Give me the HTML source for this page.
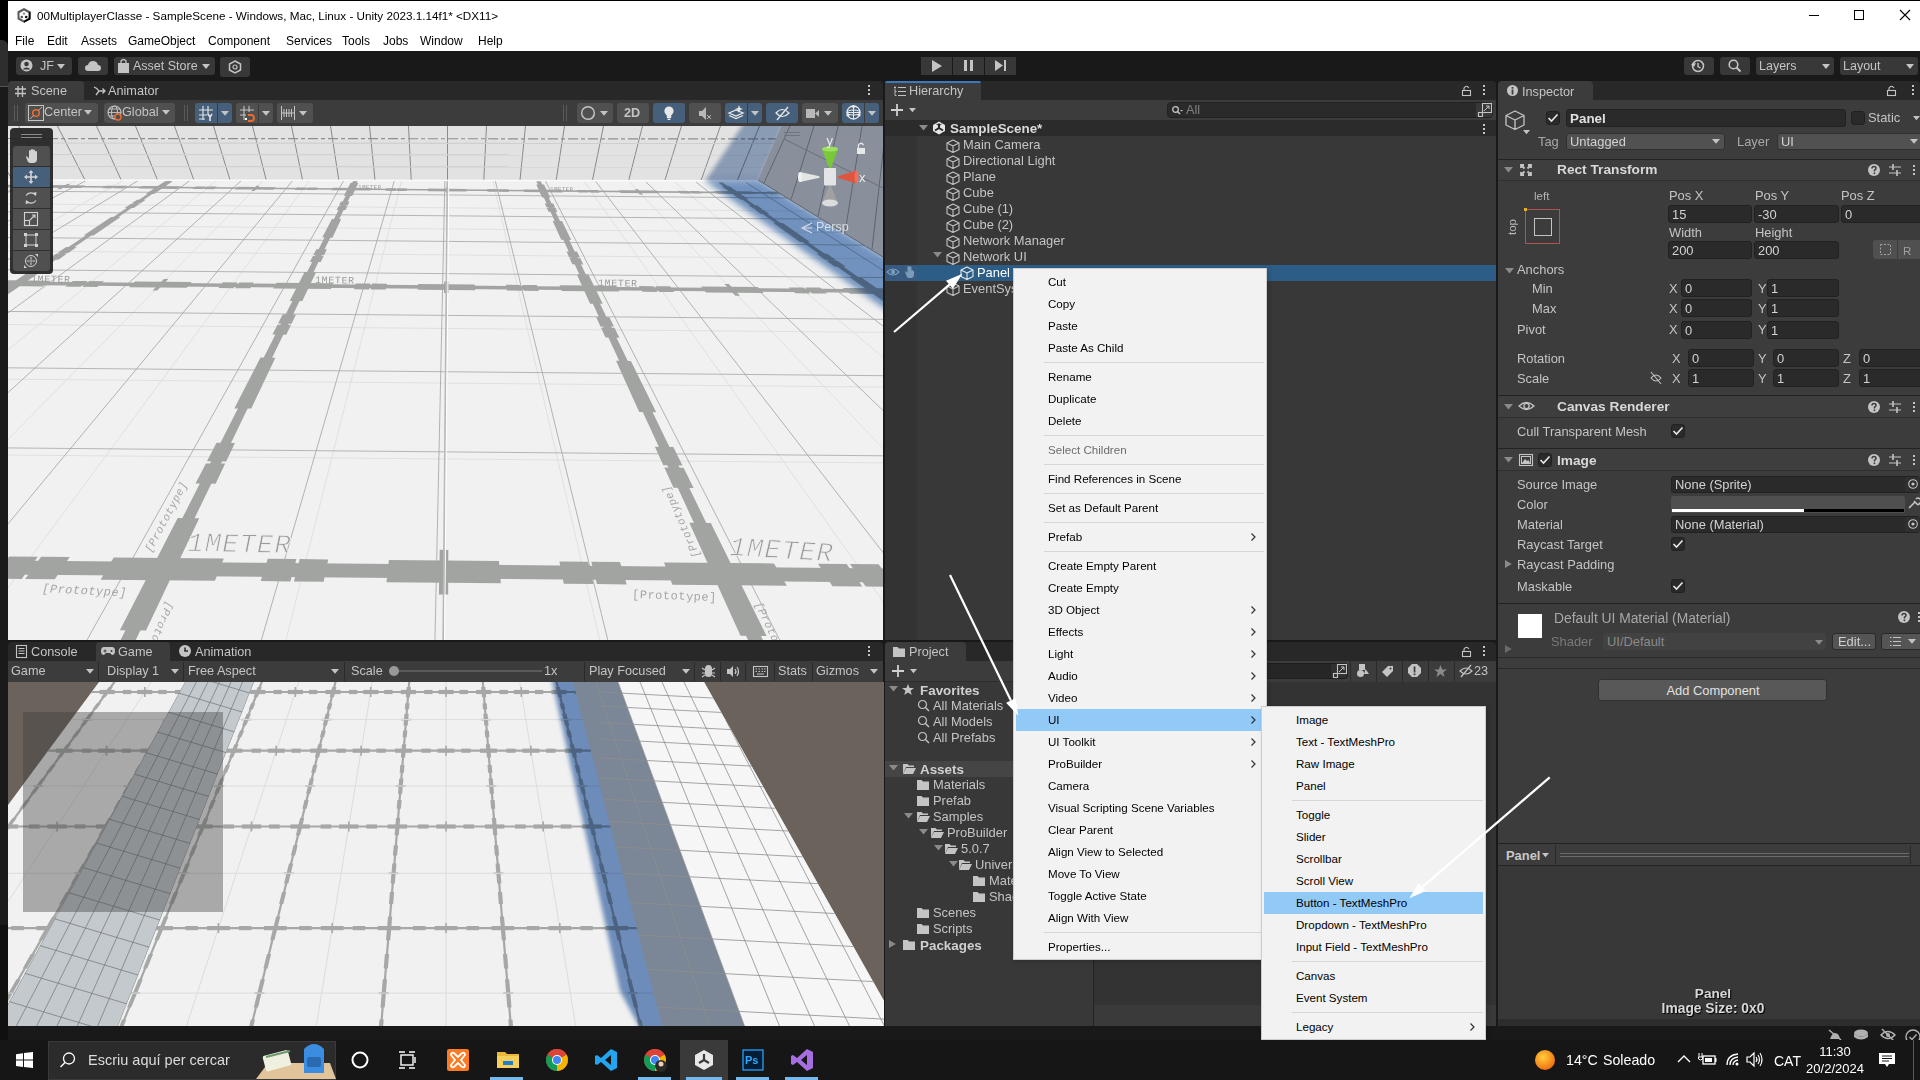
<!DOCTYPE html>
<html><head><meta charset="utf-8">
<style>
*{box-sizing:border-box;margin:0;padding:0}
html,body{width:1920px;height:1080px;overflow:hidden;background:#191919;font-family:"Liberation Sans",sans-serif;position:relative}
.a{position:absolute}
.t{position:absolute;white-space:nowrap;line-height:1}
svg{overflow:visible}
</style></head><body>

<div class="a" style="left:0px;top:0px;width:1920px;height:1040px;background:#191919;"></div>
<div class="a" style="left:0px;top:0px;width:8px;height:1040px;background:#000000;"></div>
<div class="a" style="left:0px;top:40px;width:8px;height:46px;background:#2e2e2e;border-radius:0 6px 0 0"></div>
<div class="a" style="left:0px;top:86px;width:8px;height:1px;background:#555555;"></div>
<div class="a" style="left:0px;top:87px;width:8px;height:838px;background:#1a1a1a;"></div>
<div class="a" style="left:0px;top:925px;width:8px;height:115px;background:#101010;"></div>
<div class="a" style="left:0px;top:0px;width:1920px;height:1px;background:#000;"></div>
<div class="a" style="left:8px;top:1px;width:1912px;height:50px;background:#ffffff;"></div>
<svg class="a" style="left:17px;top:7.5px;" width="14" height="15" viewBox="0 0 14 15"><path d="M7 0 L13.5 3.6 V11.2 L7 14.8 L0.5 11.2 V3.6Z" fill="#5a5a5a"/><path d="M7 14.8 L13.5 11.2 V3.6 L11.5 4.8 V10.2 L7 12.6Z" fill="#000"/><path d="M7 2.6 L11.5 5 V10 L7 12.4 L2.5 10 V5Z" fill="#fafafa"/><circle cx="7" cy="5.6" r="1.2" fill="#888"/><circle cx="4.8" cy="9" r="1.3" fill="#555"/><circle cx="9.2" cy="9" r="1.3" fill="#111"/></svg>
<div class="t" style="left:37px;top:10.10px;font-size:11.7px;color:#000;font-weight:normal;">00MultiplayerClasse - SampleScene - Windows, Mac, Linux - Unity 2023.1.14f1* &lt;DX11&gt;</div>
<div class="a" style="left:1809px;top:15px;width:10px;height:1px;background:#000;"></div>
<div class="a" style="left:1854px;top:10px;width:10px;height:10px;background:transparent;border:1px solid #000"></div>
<svg class="a" style="left:1900px;top:10px;" width="10" height="10" viewBox="0 0 10 10"><path d="M0 0 L10 10 M10 0 L0 10" stroke="#000" stroke-width="1.1"/></svg>
<div class="t" style="left:15px;top:35.34px;font-size:12px;color:#000;font-weight:normal;">File</div>
<div class="t" style="left:47px;top:35.34px;font-size:12px;color:#000;font-weight:normal;">Edit</div>
<div class="t" style="left:81px;top:35.34px;font-size:12px;color:#000;font-weight:normal;">Assets</div>
<div class="t" style="left:128px;top:35.34px;font-size:12px;color:#000;font-weight:normal;">GameObject</div>
<div class="t" style="left:208px;top:35.34px;font-size:12px;color:#000;font-weight:normal;">Component</div>
<div class="t" style="left:286px;top:35.34px;font-size:12px;color:#000;font-weight:normal;">Services</div>
<div class="t" style="left:342px;top:35.34px;font-size:12px;color:#000;font-weight:normal;">Tools</div>
<div class="t" style="left:383px;top:35.34px;font-size:12px;color:#000;font-weight:normal;">Jobs</div>
<div class="t" style="left:420px;top:35.34px;font-size:12px;color:#000;font-weight:normal;">Window</div>
<div class="t" style="left:478px;top:35.34px;font-size:12px;color:#000;font-weight:normal;">Help</div>
<div class="a" style="left:16px;top:57px;width:56px;height:18px;background:#383838;border-radius:3px"></div>
<svg class="a" style="left:20px;top:59px;" width="13" height="13" viewBox="0 0 13 13"><circle cx="6.5" cy="6.5" r="6" fill="#c4c4c4"/><circle cx="6.5" cy="5" r="2.3" fill="#383838"/><path d="M2.5 10.5 Q6.5 6.5 10.5 10.5" fill="#383838"/></svg>
<div class="t" style="left:40px;top:60.42px;font-size:12.5px;color:#c4c4c4;font-weight:normal;">JF</div>
<svg class="a" style="left:57px;top:64px;" width="8" height="5" viewBox="0 0 8 5"><path d="M0 0 L8 0 L4 5Z" fill="#c4c4c4"/></svg>
<div class="a" style="left:78px;top:57px;width:30px;height:18px;background:#383838;border-radius:3px"></div>
<svg class="a" style="left:85px;top:59px;" width="16" height="14" viewBox="0 0 16 14"><path d="M3 12 Q0 12 0 9 Q0 6 3 6 Q4 2 8 2 Q12 2 13 6 Q16 6 16 9 Q16 12 13 12Z" fill="#c4c4c4"/></svg>
<div class="a" style="left:114px;top:57px;width:101px;height:18px;background:#383838;border-radius:3px"></div>
<svg class="a" style="left:118px;top:59px;" width="11" height="14" viewBox="0 0 11 14"><rect x="0" y="4" width="11" height="10" fill="#c4c4c4"/><path d="M3 4 V2 Q5.5 -1 8 2 V4" fill="none" stroke="#c4c4c4" stroke-width="1.3"/></svg>
<div class="t" style="left:133px;top:60.42px;font-size:12.5px;color:#c4c4c4;font-weight:normal;">Asset Store</div>
<svg class="a" style="left:202px;top:64px;" width="8" height="5" viewBox="0 0 8 5"><path d="M0 0 L8 0 L4 5Z" fill="#c4c4c4"/></svg>
<div class="a" style="left:220px;top:57px;width:30px;height:20px;background:#383838;border-radius:3px"></div>
<svg class="a" style="left:228px;top:60px;" width="14" height="14" viewBox="0 0 14 14"><path d="M7 1 L12.5 4 L12.5 10 L7 13 L1.5 10 L1.5 4Z" fill="none" stroke="#c4c4c4" stroke-width="1.5"/><circle cx="7" cy="7" r="2" fill="none" stroke="#c4c4c4" stroke-width="1.2"/></svg>
<div class="a" style="left:921px;top:57px;width:31px;height:18px;background:#383838;"></div>
<div class="a" style="left:953px;top:57px;width:31px;height:18px;background:#383838;"></div>
<div class="a" style="left:985px;top:57px;width:31px;height:18px;background:#383838;"></div>
<svg class="a" style="left:932px;top:60px;" width="10" height="12" viewBox="0 0 10 12"><path d="M0 0 L10 6 L0 12Z" fill="#c4c4c4"/></svg>
<svg class="a" style="left:964px;top:60px;" width="9" height="11" viewBox="0 0 9 11"><rect x="0" y="0" width="3" height="11" fill="#c4c4c4"/><rect x="6" y="0" width="3" height="11" fill="#c4c4c4"/></svg>
<svg class="a" style="left:995px;top:60px;" width="11" height="11" viewBox="0 0 11 11"><path d="M0 0 L8 5.5 L0 11Z" fill="#c4c4c4"/><rect x="9" y="0" width="2" height="11" fill="#c4c4c4"/></svg>
<div class="a" style="left:1684px;top:57px;width:30px;height:18px;background:#383838;border-radius:3px"></div>
<svg class="a" style="left:1691px;top:59px;" width="14" height="14" viewBox="0 0 14 14"><circle cx="7" cy="7" r="5.5" fill="none" stroke="#c4c4c4" stroke-width="1.5"/><path d="M7 4 V7.5 L9.5 9" fill="none" stroke="#c4c4c4" stroke-width="1.4"/><path d="M0 5 L3 8 L5 4Z" fill="#c4c4c4"/></svg>
<div class="a" style="left:1720px;top:57px;width:30px;height:18px;background:#383838;border-radius:3px"></div>
<svg class="a" style="left:1728px;top:59px;" width="13" height="13" viewBox="0 0 13 13"><circle cx="5.5" cy="5.5" r="4.3" fill="none" stroke="#c4c4c4" stroke-width="1.6"/><path d="M8.5 8.5 L12.5 12.5" stroke="#c4c4c4" stroke-width="2"/></svg>
<div class="a" style="left:1756px;top:57px;width:78px;height:18px;background:#383838;border-radius:3px"></div>
<div class="t" style="left:1759px;top:60.42px;font-size:12.5px;color:#c4c4c4;font-weight:normal;">Layers</div>
<svg class="a" style="left:1822px;top:64px;" width="8" height="5" viewBox="0 0 8 5"><path d="M0 0 L8 0 L4 5Z" fill="#c4c4c4"/></svg>
<div class="a" style="left:1840px;top:57px;width:78px;height:18px;background:#383838;border-radius:3px"></div>
<div class="t" style="left:1843px;top:60.42px;font-size:12.5px;color:#c4c4c4;font-weight:normal;">Layout</div>
<svg class="a" style="left:1906px;top:64px;" width="8" height="5" viewBox="0 0 8 5"><path d="M0 0 L8 0 L4 5Z" fill="#c4c4c4"/></svg>
<div class="a" style="left:8px;top:81px;width:875px;height:19px;background:#282828;border-radius:4px 4px 0 0"></div>
<div class="a" style="left:8px;top:81px;width:76px;height:19px;background:#3c3c3c;border-radius:4px 4px 0 0"></div>
<div class="a" style="left:8px;top:100px;width:875px;height:26px;background:#3c3c3c;"></div>
<div class="a" style="left:8px;top:642px;width:875px;height:19px;background:#282828;border-radius:4px 4px 0 0"></div>
<div class="a" style="left:96px;top:642px;width:74px;height:19px;background:#3c3c3c;border-radius:4px 4px 0 0"></div>
<div class="a" style="left:8px;top:661px;width:875px;height:21px;background:#3c3c3c;"></div>
<div class="a" style="left:8px;top:1026px;width:875px;height:14px;background:#191919;"></div>
<div class="a" style="left:885px;top:81px;width:611px;height:19px;background:#282828;border-radius:4px 4px 0 0"></div>
<div class="a" style="left:885px;top:81px;width:96px;height:19px;background:#3c3c3c;border-radius:4px 4px 0 0"></div>
<div class="a" style="left:885px;top:81px;width:96px;height:2px;background:#3a79bb;border-radius:3px 3px 0 0"></div>
<div class="a" style="left:885px;top:100px;width:611px;height:20px;background:#3c3c3c;"></div>
<div class="a" style="left:885px;top:120px;width:611px;height:520px;background:#383838;"></div>
<div class="a" style="left:885px;top:642px;width:611px;height:19px;background:#282828;border-radius:4px 4px 0 0"></div>
<div class="a" style="left:885px;top:642px;width:81px;height:19px;background:#3c3c3c;border-radius:4px 4px 0 0"></div>
<div class="a" style="left:885px;top:661px;width:611px;height:21px;background:#3c3c3c;"></div>
<div class="a" style="left:885px;top:682px;width:611px;height:344px;background:#383838;"></div>
<div class="a" style="left:1498px;top:81px;width:422px;height:19px;background:#282828;border-radius:4px 4px 0 0"></div>
<div class="a" style="left:1498px;top:81px;width:95px;height:19px;background:#3c3c3c;border-radius:4px 4px 0 0"></div>
<div class="a" style="left:1498px;top:100px;width:422px;height:926px;background:#3c3c3c;"></div>
<svg class="a" style="left:8px;top:126px;overflow:hidden" width="875" height="514" viewBox="0 0 875 514"><rect width="875" height="514" fill="#f1f1f1"/><line x1="-2290.3" y1="29.4" x2="-25383.9" y2="1411.2" stroke="#dedede" stroke-width="0.9"/><line x1="-2244.8" y1="29.8" x2="-24953.8" y2="1415.1" stroke="#dedede" stroke-width="0.9"/><line x1="-2199.4" y1="30.2" x2="-24523.7" y2="1418.9" stroke="#dedede" stroke-width="0.9"/><line x1="-2153.9" y1="30.7" x2="-24093.5" y2="1422.8" stroke="#dedede" stroke-width="0.9"/><line x1="-2108.4" y1="31.1" x2="-23663.4" y2="1426.7" stroke="#dedede" stroke-width="0.9"/><line x1="-2062.9" y1="31.5" x2="-23233.2" y2="1430.5" stroke="#dedede" stroke-width="0.9"/><line x1="-2017.4" y1="31.9" x2="-22803.1" y2="1434.4" stroke="#dedede" stroke-width="0.9"/><line x1="-1971.9" y1="32.3" x2="-22372.9" y2="1438.3" stroke="#dedede" stroke-width="0.9"/><line x1="-1926.4" y1="32.7" x2="-21942.8" y2="1442.2" stroke="#dedede" stroke-width="0.9"/><line x1="-1880.9" y1="33.1" x2="-21512.6" y2="1446.0" stroke="#dedede" stroke-width="0.9"/><line x1="-1835.4" y1="33.5" x2="-21082.5" y2="1449.9" stroke="#dedede" stroke-width="0.9"/><line x1="-1789.9" y1="33.9" x2="-20652.3" y2="1453.8" stroke="#dedede" stroke-width="0.9"/><line x1="-1744.4" y1="34.3" x2="-20222.2" y2="1457.6" stroke="#dedede" stroke-width="0.9"/><line x1="-1698.9" y1="34.7" x2="-19792.0" y2="1461.5" stroke="#dedede" stroke-width="0.9"/><line x1="-1653.4" y1="35.2" x2="-19361.9" y2="1465.4" stroke="#dedede" stroke-width="0.9"/><line x1="-1607.9" y1="35.6" x2="-18931.7" y2="1469.3" stroke="#dedede" stroke-width="0.9"/><line x1="-1562.4" y1="36.0" x2="-18501.6" y2="1473.1" stroke="#dedede" stroke-width="0.9"/><line x1="-1516.9" y1="36.4" x2="-18071.4" y2="1477.0" stroke="#dedede" stroke-width="0.9"/><line x1="-1471.4" y1="36.8" x2="-17641.3" y2="1480.9" stroke="#dedede" stroke-width="0.9"/><line x1="-1426.0" y1="37.2" x2="-17211.1" y2="1484.7" stroke="#dedede" stroke-width="0.9"/><line x1="-1380.5" y1="37.6" x2="-16781.0" y2="1488.6" stroke="#dedede" stroke-width="0.9"/><line x1="-1335.0" y1="38.0" x2="-16350.8" y2="1492.5" stroke="#dedede" stroke-width="0.9"/><line x1="-1289.5" y1="38.4" x2="-15920.7" y2="1496.4" stroke="#dedede" stroke-width="0.9"/><line x1="-1244.0" y1="38.8" x2="-15490.5" y2="1500.2" stroke="#dedede" stroke-width="0.9"/><line x1="-1198.5" y1="39.3" x2="-15060.4" y2="1504.1" stroke="#dedede" stroke-width="0.9"/><line x1="-1153.0" y1="39.7" x2="-14630.2" y2="1508.0" stroke="#dedede" stroke-width="0.9"/><line x1="-1107.5" y1="40.1" x2="-14200.1" y2="1511.8" stroke="#dedede" stroke-width="0.9"/><line x1="-1062.0" y1="40.5" x2="-13769.9" y2="1515.7" stroke="#dedede" stroke-width="0.9"/><line x1="-1016.5" y1="40.9" x2="-13339.8" y2="1519.6" stroke="#dedede" stroke-width="0.9"/><line x1="-971.0" y1="41.3" x2="-12909.6" y2="1523.5" stroke="#dedede" stroke-width="0.9"/><line x1="-925.5" y1="41.7" x2="-12479.5" y2="1527.3" stroke="#dedede" stroke-width="0.9"/><line x1="-880.0" y1="42.1" x2="-12049.3" y2="1531.2" stroke="#dedede" stroke-width="0.9"/><line x1="-834.5" y1="42.5" x2="-11619.2" y2="1535.1" stroke="#dedede" stroke-width="0.9"/><line x1="-789.0" y1="42.9" x2="-11189.0" y2="1538.9" stroke="#dedede" stroke-width="0.9"/><line x1="-743.5" y1="43.3" x2="-10758.9" y2="1542.8" stroke="#dedede" stroke-width="0.9"/><line x1="-698.0" y1="43.8" x2="-10328.7" y2="1546.7" stroke="#dedede" stroke-width="0.9"/><line x1="-652.6" y1="44.2" x2="-9898.6" y2="1550.6" stroke="#dedede" stroke-width="0.9"/><line x1="-607.1" y1="44.6" x2="-9468.4" y2="1554.4" stroke="#dedede" stroke-width="0.9"/><line x1="-561.6" y1="45.0" x2="-9038.3" y2="1558.3" stroke="#dedede" stroke-width="0.9"/><line x1="-516.1" y1="45.4" x2="-8608.1" y2="1562.2" stroke="#dedede" stroke-width="0.9"/><line x1="-470.6" y1="45.8" x2="-8178.0" y2="1566.0" stroke="#dedede" stroke-width="0.9"/><line x1="-425.1" y1="46.2" x2="-7747.8" y2="1569.9" stroke="#dedede" stroke-width="0.9"/><line x1="-379.6" y1="46.6" x2="-7317.7" y2="1573.8" stroke="#dedede" stroke-width="0.9"/><line x1="-334.1" y1="47.0" x2="-6887.5" y2="1577.7" stroke="#dedede" stroke-width="0.9"/><line x1="-288.6" y1="47.4" x2="-6457.4" y2="1581.5" stroke="#dedede" stroke-width="0.9"/><line x1="-243.1" y1="47.9" x2="-6027.2" y2="1585.4" stroke="#dedede" stroke-width="0.9"/><line x1="-197.6" y1="48.3" x2="-5597.1" y2="1589.3" stroke="#dedede" stroke-width="0.9"/><line x1="-152.1" y1="48.7" x2="-5166.9" y2="1593.1" stroke="#dedede" stroke-width="0.9"/><line x1="-106.6" y1="49.1" x2="-4736.8" y2="1597.0" stroke="#dedede" stroke-width="0.9"/><line x1="-61.1" y1="49.5" x2="-4306.6" y2="1600.9" stroke="#dedede" stroke-width="0.9"/><line x1="-15.6" y1="49.9" x2="-3876.5" y2="1604.8" stroke="#dedede" stroke-width="0.9"/><line x1="29.9" y1="50.3" x2="-3446.3" y2="1608.6" stroke="#dedede" stroke-width="0.9"/><line x1="75.4" y1="50.7" x2="-3016.2" y2="1612.5" stroke="#dedede" stroke-width="0.9"/><line x1="120.8" y1="51.1" x2="-2586.0" y2="1616.4" stroke="#dedede" stroke-width="0.9"/><line x1="166.3" y1="51.5" x2="-2155.9" y2="1620.2" stroke="#dedede" stroke-width="0.9"/><line x1="211.8" y1="51.9" x2="-1725.7" y2="1624.1" stroke="#dedede" stroke-width="0.9"/><line x1="257.3" y1="52.4" x2="-1295.6" y2="1628.0" stroke="#dedede" stroke-width="0.9"/><line x1="302.8" y1="52.8" x2="-865.4" y2="1631.9" stroke="#dedede" stroke-width="0.9"/><line x1="348.3" y1="53.2" x2="-435.3" y2="1635.7" stroke="#dedede" stroke-width="0.9"/><line x1="393.8" y1="53.6" x2="-5.1" y2="1639.6" stroke="#dedede" stroke-width="0.9"/><line x1="439.3" y1="54.0" x2="425.0" y2="1643.5" stroke="#dedede" stroke-width="0.9"/><line x1="484.8" y1="54.4" x2="855.2" y2="1647.3" stroke="#dedede" stroke-width="0.9"/><line x1="530.3" y1="54.8" x2="1285.3" y2="1651.2" stroke="#dedede" stroke-width="0.9"/><line x1="575.8" y1="55.2" x2="1715.4" y2="1655.1" stroke="#dedede" stroke-width="0.9"/><line x1="621.3" y1="55.6" x2="2145.6" y2="1659.0" stroke="#dedede" stroke-width="0.9"/><line x1="666.8" y1="56.0" x2="2575.7" y2="1662.8" stroke="#dedede" stroke-width="0.9"/><line x1="712.3" y1="56.4" x2="3005.9" y2="1666.7" stroke="#dedede" stroke-width="0.9"/><line x1="757.8" y1="56.9" x2="3436.0" y2="1670.6" stroke="#dedede" stroke-width="0.9"/><line x1="803.3" y1="57.3" x2="3866.2" y2="1674.4" stroke="#dedede" stroke-width="0.9"/><line x1="848.8" y1="57.7" x2="4296.3" y2="1678.3" stroke="#dedede" stroke-width="0.9"/><line x1="894.2" y1="58.1" x2="4726.5" y2="1682.2" stroke="#dedede" stroke-width="0.9"/><line x1="939.7" y1="58.5" x2="5156.6" y2="1686.1" stroke="#dedede" stroke-width="0.9"/><line x1="985.2" y1="58.9" x2="5586.8" y2="1689.9" stroke="#dedede" stroke-width="0.9"/><line x1="1030.7" y1="59.3" x2="6016.9" y2="1693.8" stroke="#dedede" stroke-width="0.9"/><line x1="1076.2" y1="59.7" x2="6447.1" y2="1697.7" stroke="#dedede" stroke-width="0.9"/><line x1="1121.7" y1="60.1" x2="6877.2" y2="1701.5" stroke="#dedede" stroke-width="0.9"/><line x1="1167.2" y1="60.5" x2="7307.4" y2="1705.4" stroke="#dedede" stroke-width="0.9"/><line x1="1212.7" y1="61.0" x2="7737.5" y2="1709.3" stroke="#dedede" stroke-width="0.9"/><line x1="1258.2" y1="61.4" x2="8167.7" y2="1713.2" stroke="#dedede" stroke-width="0.9"/><line x1="1303.7" y1="61.8" x2="8597.8" y2="1717.0" stroke="#dedede" stroke-width="0.9"/><line x1="1349.2" y1="62.2" x2="9028.0" y2="1720.9" stroke="#dedede" stroke-width="0.9"/><line x1="1394.7" y1="62.6" x2="9458.1" y2="1724.8" stroke="#dedede" stroke-width="0.9"/><line x1="1440.2" y1="63.0" x2="9888.3" y2="1728.6" stroke="#dedede" stroke-width="0.9"/><line x1="1485.7" y1="63.4" x2="10318.4" y2="1732.5" stroke="#dedede" stroke-width="0.9"/><line x1="1531.2" y1="63.8" x2="10748.6" y2="1736.4" stroke="#dedede" stroke-width="0.9"/><line x1="1576.7" y1="64.2" x2="11178.7" y2="1740.3" stroke="#dedede" stroke-width="0.9"/><line x1="1622.2" y1="64.6" x2="11608.9" y2="1744.1" stroke="#dedede" stroke-width="0.9"/><line x1="1667.7" y1="65.0" x2="12039.0" y2="1748.0" stroke="#dedede" stroke-width="0.9"/><line x1="1713.1" y1="65.5" x2="12469.2" y2="1751.9" stroke="#dedede" stroke-width="0.9"/><line x1="1758.6" y1="65.9" x2="12899.3" y2="1755.7" stroke="#dedede" stroke-width="0.9"/><line x1="1804.1" y1="66.3" x2="13329.5" y2="1759.6" stroke="#dedede" stroke-width="0.9"/><line x1="1849.6" y1="66.7" x2="13759.6" y2="1763.5" stroke="#dedede" stroke-width="0.9"/><line x1="1895.1" y1="67.1" x2="14189.8" y2="1767.4" stroke="#dedede" stroke-width="0.9"/><line x1="1940.6" y1="67.5" x2="14619.9" y2="1771.2" stroke="#dedede" stroke-width="0.9"/><line x1="1986.1" y1="67.9" x2="15050.1" y2="1775.1" stroke="#dedede" stroke-width="0.9"/><line x1="2031.6" y1="68.3" x2="15480.2" y2="1779.0" stroke="#dedede" stroke-width="0.9"/><line x1="2077.1" y1="68.7" x2="15910.4" y2="1782.8" stroke="#dedede" stroke-width="0.9"/><line x1="2122.6" y1="69.1" x2="16340.5" y2="1786.7" stroke="#dedede" stroke-width="0.9"/><line x1="2168.1" y1="69.6" x2="16770.7" y2="1790.6" stroke="#dedede" stroke-width="0.9"/><line x1="2213.6" y1="70.0" x2="17200.8" y2="1794.5" stroke="#dedede" stroke-width="0.9"/><line x1="2259.1" y1="70.4" x2="17631.0" y2="1798.3" stroke="#dedede" stroke-width="0.9"/><line x1="2304.6" y1="70.8" x2="18061.1" y2="1802.2" stroke="#dedede" stroke-width="0.9"/><line x1="2350.1" y1="71.2" x2="18491.3" y2="1806.1" stroke="#dedede" stroke-width="0.9"/><line x1="2395.6" y1="71.6" x2="18921.4" y2="1809.9" stroke="#dedede" stroke-width="0.9"/><line x1="2441.1" y1="72.0" x2="19351.6" y2="1813.8" stroke="#dedede" stroke-width="0.9"/><line x1="2486.5" y1="72.4" x2="19781.7" y2="1817.7" stroke="#dedede" stroke-width="0.9"/><line x1="2532.0" y1="72.8" x2="20211.9" y2="1821.6" stroke="#dedede" stroke-width="0.9"/><line x1="2577.5" y1="73.2" x2="20642.0" y2="1825.4" stroke="#dedede" stroke-width="0.9"/><line x1="2623.0" y1="73.6" x2="21072.2" y2="1829.3" stroke="#dedede" stroke-width="0.9"/><line x1="2668.5" y1="74.1" x2="21502.3" y2="1833.2" stroke="#dedede" stroke-width="0.9"/><line x1="2714.0" y1="74.5" x2="21932.5" y2="1837.0" stroke="#dedede" stroke-width="0.9"/><line x1="2759.5" y1="74.9" x2="22362.6" y2="1840.9" stroke="#dedede" stroke-width="0.9"/><line x1="2805.0" y1="75.3" x2="22792.8" y2="1844.8" stroke="#dedede" stroke-width="0.9"/><line x1="2850.5" y1="75.7" x2="23222.9" y2="1848.7" stroke="#dedede" stroke-width="0.9"/><line x1="2896.0" y1="76.1" x2="23653.1" y2="1852.5" stroke="#dedede" stroke-width="0.9"/><line x1="2941.5" y1="76.5" x2="24083.2" y2="1856.4" stroke="#dedede" stroke-width="0.9"/><line x1="2987.0" y1="76.9" x2="24513.4" y2="1860.3" stroke="#dedede" stroke-width="0.9"/><line x1="3032.5" y1="77.3" x2="24943.5" y2="1864.1" stroke="#dedede" stroke-width="0.9"/><line x1="3078.0" y1="77.7" x2="25373.7" y2="1868.0" stroke="#dedede" stroke-width="0.9"/><line x1="3123.5" y1="78.2" x2="25803.8" y2="1871.9" stroke="#dedede" stroke-width="0.9"/><line x1="3169.0" y1="78.6" x2="26234.0" y2="1875.8" stroke="#dedede" stroke-width="0.9"/><line x1="-42831.6" y1="593.9" x2="43693.5" y2="1372.7" stroke="#e0e0e0" stroke-width="1"/><line x1="-29111.7" y1="363.1" x2="29980.0" y2="895.0" stroke="#e0e0e0" stroke-width="1"/><line x1="-21997.4" y1="243.5" x2="22869.0" y2="647.3" stroke="#e0e0e0" stroke-width="1"/><line x1="-17643.8" y1="170.2" x2="18517.4" y2="495.7" stroke="#e0e0e0" stroke-width="1"/><line x1="-14705.1" y1="120.8" x2="15580.1" y2="393.4" stroke="#e0e0e0" stroke-width="1"/><line x1="-12588.0" y1="85.2" x2="13463.9" y2="319.7" stroke="#e0e0e0" stroke-width="1"/><line x1="-10990.1" y1="58.3" x2="11866.8" y2="264.0" stroke="#e0e0e0" stroke-width="1"/><line x1="-9741.3" y1="37.3" x2="10618.6" y2="220.5" stroke="#e0e0e0" stroke-width="1"/><line x1="-8738.6" y1="20.4" x2="9616.3" y2="185.6" stroke="#e0e0e0" stroke-width="1"/><line x1="-7915.6" y1="6.6" x2="8793.7" y2="157.0" stroke="#e0e0e0" stroke-width="1"/><line x1="-7228.0" y1="-5.0" x2="8106.4" y2="133.0" stroke="#e0e0e0" stroke-width="1"/><line x1="-2325.5" y1="29.1" x2="-25716.0" y2="1408.2" stroke="#9c9c9c" stroke-width="0.75"/><line x1="-2275.2" y1="29.6" x2="-25241.1" y2="1412.5" stroke="#9c9c9c" stroke-width="0.75"/><line x1="-2225.0" y1="30.0" x2="-24766.3" y2="1416.7" stroke="#9c9c9c" stroke-width="0.75"/><line x1="-2174.8" y1="30.5" x2="-24291.4" y2="1421.0" stroke="#9c9c9c" stroke-width="0.75"/><line x1="-2124.6" y1="30.9" x2="-23816.5" y2="1425.3" stroke="#9c9c9c" stroke-width="0.75"/><line x1="-2074.3" y1="31.4" x2="-23341.6" y2="1429.6" stroke="#9c9c9c" stroke-width="0.75"/><line x1="-2024.1" y1="31.8" x2="-22866.7" y2="1433.8" stroke="#9c9c9c" stroke-width="0.75"/><line x1="-1973.9" y1="32.3" x2="-22391.8" y2="1438.1" stroke="#9c9c9c" stroke-width="0.75"/><line x1="-1923.7" y1="32.7" x2="-21916.9" y2="1442.4" stroke="#9c9c9c" stroke-width="0.75"/><line x1="-1873.4" y1="33.2" x2="-21442.1" y2="1446.7" stroke="#9c9c9c" stroke-width="0.75"/><line x1="-1823.2" y1="33.6" x2="-20967.2" y2="1450.9" stroke="#9c9c9c" stroke-width="0.75"/><line x1="-1773.0" y1="34.1" x2="-20492.3" y2="1455.2" stroke="#9c9c9c" stroke-width="0.75"/><line x1="-1722.8" y1="34.5" x2="-20017.4" y2="1459.5" stroke="#9c9c9c" stroke-width="0.75"/><line x1="-1672.5" y1="35.0" x2="-19542.5" y2="1463.8" stroke="#9c9c9c" stroke-width="0.75"/><line x1="-1622.3" y1="35.4" x2="-19067.6" y2="1468.0" stroke="#9c9c9c" stroke-width="0.75"/><line x1="-1572.1" y1="35.9" x2="-18592.8" y2="1472.3" stroke="#9c9c9c" stroke-width="0.75"/><line x1="-1521.9" y1="36.3" x2="-18117.9" y2="1476.6" stroke="#9c9c9c" stroke-width="0.75"/><line x1="-1471.6" y1="36.8" x2="-17643.0" y2="1480.9" stroke="#9c9c9c" stroke-width="0.75"/><line x1="-1421.4" y1="37.2" x2="-17168.1" y2="1485.1" stroke="#9c9c9c" stroke-width="0.75"/><line x1="-1371.2" y1="37.7" x2="-16693.2" y2="1489.4" stroke="#9c9c9c" stroke-width="0.75"/><line x1="-1321.0" y1="38.1" x2="-16218.3" y2="1493.7" stroke="#9c9c9c" stroke-width="0.75"/><line x1="-1270.7" y1="38.6" x2="-15743.4" y2="1498.0" stroke="#9c9c9c" stroke-width="0.75"/><line x1="-1220.5" y1="39.1" x2="-15268.6" y2="1502.2" stroke="#9c9c9c" stroke-width="0.75"/><line x1="-1170.3" y1="39.5" x2="-14793.7" y2="1506.5" stroke="#9c9c9c" stroke-width="0.75"/><line x1="-1120.0" y1="40.0" x2="-14318.8" y2="1510.8" stroke="#9c9c9c" stroke-width="0.75"/><line x1="-1069.8" y1="40.4" x2="-13843.9" y2="1515.1" stroke="#9c9c9c" stroke-width="0.75"/><line x1="-1019.6" y1="40.9" x2="-13369.0" y2="1519.3" stroke="#9c9c9c" stroke-width="0.75"/><line x1="-969.4" y1="41.3" x2="-12894.1" y2="1523.6" stroke="#9c9c9c" stroke-width="0.75"/><line x1="-919.1" y1="41.8" x2="-12419.3" y2="1527.9" stroke="#9c9c9c" stroke-width="0.75"/><line x1="-868.9" y1="42.2" x2="-11944.4" y2="1532.1" stroke="#9c9c9c" stroke-width="0.75"/><line x1="-818.7" y1="42.7" x2="-11469.5" y2="1536.4" stroke="#9c9c9c" stroke-width="0.75"/><line x1="-768.5" y1="43.1" x2="-10994.6" y2="1540.7" stroke="#9c9c9c" stroke-width="0.75"/><line x1="-718.2" y1="43.6" x2="-10519.7" y2="1545.0" stroke="#9c9c9c" stroke-width="0.75"/><line x1="-668.0" y1="44.0" x2="-10044.8" y2="1549.2" stroke="#9c9c9c" stroke-width="0.75"/><line x1="-617.8" y1="44.5" x2="-9569.9" y2="1553.5" stroke="#9c9c9c" stroke-width="0.75"/><line x1="-567.6" y1="44.9" x2="-9095.1" y2="1557.8" stroke="#9c9c9c" stroke-width="0.75"/><line x1="-517.3" y1="45.4" x2="-8620.2" y2="1562.1" stroke="#9c9c9c" stroke-width="0.75"/><line x1="-467.1" y1="45.8" x2="-8145.3" y2="1566.3" stroke="#9c9c9c" stroke-width="0.75"/><line x1="-416.9" y1="46.3" x2="-7670.4" y2="1570.6" stroke="#9c9c9c" stroke-width="0.75"/><line x1="-366.7" y1="46.7" x2="-7195.5" y2="1574.9" stroke="#9c9c9c" stroke-width="0.75"/><line x1="-316.4" y1="47.2" x2="-6720.6" y2="1579.2" stroke="#9c9c9c" stroke-width="0.75"/><line x1="-266.2" y1="47.6" x2="-6245.8" y2="1583.4" stroke="#9c9c9c" stroke-width="0.75"/><line x1="-216.0" y1="48.1" x2="-5770.9" y2="1587.7" stroke="#9c9c9c" stroke-width="0.75"/><line x1="-165.8" y1="48.5" x2="-5296.0" y2="1592.0" stroke="#9c9c9c" stroke-width="0.75"/><line x1="-115.5" y1="49.0" x2="-4821.1" y2="1596.3" stroke="#9c9c9c" stroke-width="0.75"/><line x1="-65.3" y1="49.5" x2="-4346.2" y2="1600.5" stroke="#9c9c9c" stroke-width="0.75"/><line x1="-15.1" y1="49.9" x2="-3871.3" y2="1604.8" stroke="#9c9c9c" stroke-width="0.75"/><line x1="35.1" y1="50.4" x2="-3396.4" y2="1609.1" stroke="#9c9c9c" stroke-width="0.75"/><line x1="85.4" y1="50.8" x2="-2921.6" y2="1613.4" stroke="#9c9c9c" stroke-width="0.75"/><line x1="135.6" y1="51.3" x2="-2446.7" y2="1617.6" stroke="#9c9c9c" stroke-width="0.75"/><line x1="185.8" y1="51.7" x2="-1971.8" y2="1621.9" stroke="#9c9c9c" stroke-width="0.75"/><line x1="236.0" y1="52.2" x2="-1496.9" y2="1626.2" stroke="#9c9c9c" stroke-width="0.75"/><line x1="286.3" y1="52.6" x2="-1022.0" y2="1630.5" stroke="#9c9c9c" stroke-width="0.75"/><line x1="336.5" y1="53.1" x2="-547.1" y2="1634.7" stroke="#9c9c9c" stroke-width="0.75"/><line x1="386.7" y1="53.5" x2="-72.3" y2="1639.0" stroke="#9c9c9c" stroke-width="0.75"/><line x1="436.9" y1="54.0" x2="402.6" y2="1643.3" stroke="#9c9c9c" stroke-width="0.75"/><line x1="487.2" y1="54.4" x2="877.5" y2="1647.5" stroke="#9c9c9c" stroke-width="0.75"/><line x1="537.4" y1="54.9" x2="1352.4" y2="1651.8" stroke="#9c9c9c" stroke-width="0.75"/><line x1="587.6" y1="55.3" x2="1827.3" y2="1656.1" stroke="#9c9c9c" stroke-width="0.75"/><line x1="637.8" y1="55.8" x2="2302.2" y2="1660.4" stroke="#9c9c9c" stroke-width="0.75"/><line x1="688.1" y1="56.2" x2="2777.1" y2="1664.6" stroke="#9c9c9c" stroke-width="0.75"/><line x1="738.3" y1="56.7" x2="3251.9" y2="1668.9" stroke="#9c9c9c" stroke-width="0.75"/><line x1="788.5" y1="57.1" x2="3726.8" y2="1673.2" stroke="#9c9c9c" stroke-width="0.75"/><line x1="838.7" y1="57.6" x2="4201.7" y2="1677.5" stroke="#9c9c9c" stroke-width="0.75"/><line x1="889.0" y1="58.0" x2="4676.6" y2="1681.7" stroke="#9c9c9c" stroke-width="0.75"/><line x1="939.2" y1="58.5" x2="5151.5" y2="1686.0" stroke="#9c9c9c" stroke-width="0.75"/><line x1="989.4" y1="58.9" x2="5626.4" y2="1690.3" stroke="#9c9c9c" stroke-width="0.75"/><line x1="1039.6" y1="59.4" x2="6101.3" y2="1694.6" stroke="#9c9c9c" stroke-width="0.75"/><line x1="1089.9" y1="59.8" x2="6576.1" y2="1698.8" stroke="#9c9c9c" stroke-width="0.75"/><line x1="1140.1" y1="60.3" x2="7051.0" y2="1703.1" stroke="#9c9c9c" stroke-width="0.75"/><line x1="1190.3" y1="60.8" x2="7525.9" y2="1707.4" stroke="#9c9c9c" stroke-width="0.75"/><line x1="1240.6" y1="61.2" x2="8000.8" y2="1711.7" stroke="#9c9c9c" stroke-width="0.75"/><line x1="1290.8" y1="61.7" x2="8475.7" y2="1715.9" stroke="#9c9c9c" stroke-width="0.75"/><line x1="1341.0" y1="62.1" x2="8950.6" y2="1720.2" stroke="#9c9c9c" stroke-width="0.75"/><line x1="1391.2" y1="62.6" x2="9425.4" y2="1724.5" stroke="#9c9c9c" stroke-width="0.75"/><line x1="1441.5" y1="63.0" x2="9900.3" y2="1728.8" stroke="#9c9c9c" stroke-width="0.75"/><line x1="1491.7" y1="63.5" x2="10375.2" y2="1733.0" stroke="#9c9c9c" stroke-width="0.75"/><line x1="1541.9" y1="63.9" x2="10850.1" y2="1737.3" stroke="#9c9c9c" stroke-width="0.75"/><line x1="1592.1" y1="64.4" x2="11325.0" y2="1741.6" stroke="#9c9c9c" stroke-width="0.75"/><line x1="1642.4" y1="64.8" x2="11799.9" y2="1745.9" stroke="#9c9c9c" stroke-width="0.75"/><line x1="1692.6" y1="65.3" x2="12274.8" y2="1750.1" stroke="#9c9c9c" stroke-width="0.75"/><line x1="1742.8" y1="65.7" x2="12749.6" y2="1754.4" stroke="#9c9c9c" stroke-width="0.75"/><line x1="1793.0" y1="66.2" x2="13224.5" y2="1758.7" stroke="#9c9c9c" stroke-width="0.75"/><line x1="1843.3" y1="66.6" x2="13699.4" y2="1762.9" stroke="#9c9c9c" stroke-width="0.75"/><line x1="1893.5" y1="67.1" x2="14174.3" y2="1767.2" stroke="#9c9c9c" stroke-width="0.75"/><line x1="1943.7" y1="67.5" x2="14649.2" y2="1771.5" stroke="#9c9c9c" stroke-width="0.75"/><line x1="1993.9" y1="68.0" x2="15124.1" y2="1775.8" stroke="#9c9c9c" stroke-width="0.75"/><line x1="2044.2" y1="68.4" x2="15598.9" y2="1780.0" stroke="#9c9c9c" stroke-width="0.75"/><line x1="2094.4" y1="68.9" x2="16073.8" y2="1784.3" stroke="#9c9c9c" stroke-width="0.75"/><line x1="2144.6" y1="69.3" x2="16548.7" y2="1788.6" stroke="#9c9c9c" stroke-width="0.75"/><line x1="2194.8" y1="69.8" x2="17023.6" y2="1792.9" stroke="#9c9c9c" stroke-width="0.75"/><line x1="2245.1" y1="70.2" x2="17498.5" y2="1797.1" stroke="#9c9c9c" stroke-width="0.75"/><line x1="2295.3" y1="70.7" x2="17973.4" y2="1801.4" stroke="#9c9c9c" stroke-width="0.75"/><line x1="2345.5" y1="71.1" x2="18448.3" y2="1805.7" stroke="#9c9c9c" stroke-width="0.75"/><line x1="2395.7" y1="71.6" x2="18923.1" y2="1810.0" stroke="#9c9c9c" stroke-width="0.75"/><line x1="2446.0" y1="72.1" x2="19398.0" y2="1814.2" stroke="#9c9c9c" stroke-width="0.75"/><line x1="2496.2" y1="72.5" x2="19872.9" y2="1818.5" stroke="#9c9c9c" stroke-width="0.75"/><line x1="2546.4" y1="73.0" x2="20347.8" y2="1822.8" stroke="#9c9c9c" stroke-width="0.75"/><line x1="2596.6" y1="73.4" x2="20822.7" y2="1827.1" stroke="#9c9c9c" stroke-width="0.75"/><line x1="2646.9" y1="73.9" x2="21297.6" y2="1831.3" stroke="#9c9c9c" stroke-width="0.75"/><line x1="2697.1" y1="74.3" x2="21772.4" y2="1835.6" stroke="#9c9c9c" stroke-width="0.75"/><line x1="2747.3" y1="74.8" x2="22247.3" y2="1839.9" stroke="#9c9c9c" stroke-width="0.75"/><line x1="2797.5" y1="75.2" x2="22722.2" y2="1844.2" stroke="#9c9c9c" stroke-width="0.75"/><line x1="2847.8" y1="75.7" x2="23197.1" y2="1848.4" stroke="#9c9c9c" stroke-width="0.75"/><line x1="2898.0" y1="76.1" x2="23672.0" y2="1852.7" stroke="#9c9c9c" stroke-width="0.75"/><line x1="2948.2" y1="76.6" x2="24146.9" y2="1857.0" stroke="#9c9c9c" stroke-width="0.75"/><line x1="2998.4" y1="77.0" x2="24621.8" y2="1861.3" stroke="#9c9c9c" stroke-width="0.75"/><line x1="3048.7" y1="77.5" x2="25096.6" y2="1865.5" stroke="#9c9c9c" stroke-width="0.75"/><line x1="3098.9" y1="77.9" x2="25571.5" y2="1869.8" stroke="#9c9c9c" stroke-width="0.75"/><line x1="3149.1" y1="78.4" x2="26046.4" y2="1874.1" stroke="#9c9c9c" stroke-width="0.75"/><line x1="3199.3" y1="78.8" x2="26521.3" y2="1878.3" stroke="#9c9c9c" stroke-width="0.75"/><line x1="-30361.8" y1="384.2" x2="31229.5" y2="938.5" stroke="#a6a6a6" stroke-width="0.8"/><line x1="-22127.8" y1="245.7" x2="22999.3" y2="651.8" stroke="#a6a6a6" stroke-width="0.8"/><line x1="-17367.4" y1="165.6" x2="18241.1" y2="486.1" stroke="#a6a6a6" stroke-width="0.8"/><line x1="-14265.4" y1="113.4" x2="15140.6" y2="378.1" stroke="#a6a6a6" stroke-width="0.8"/><line x1="-12083.7" y1="76.7" x2="12959.9" y2="302.1" stroke="#a6a6a6" stroke-width="0.8"/><line x1="-10465.8" y1="49.5" x2="11342.7" y2="245.8" stroke="#a6a6a6" stroke-width="0.8"/><line x1="-9218.0" y1="28.5" x2="10095.5" y2="202.3" stroke="#a6a6a6" stroke-width="0.8"/><line x1="-8226.4" y1="11.8" x2="9104.4" y2="167.8" stroke="#a6a6a6" stroke-width="0.8"/><line x1="-7419.4" y1="-1.8" x2="8297.8" y2="139.7" stroke="#a6a6a6" stroke-width="0.8"/><polygon points="-22270.8,248.1 23142.2,656.8 22602.2,638.0 -21730.5,239.0" fill="#a2a4a2" /><polygon points="-3052.6,425.4 -2938.2,426.4 -2810.5,405.2 -2920.5,404.2" fill="#a2a4a2" /><polygon points="-2875.3,426.9 -2845.6,427.2 -2721.4,406.0 -2750.0,405.7" fill="#a2a4a2" /><polygon points="-2842.1,427.2 -2812.4,427.5 -2689.4,406.3 -2718.1,406.0" fill="#a2a4a2" /><polygon points="-2766.6,427.9 -2652.3,429.0 -2535.4,407.7 -2645.4,406.7" fill="#a2a4a2" /><polygon points="-2606.5,429.4 -2576.8,429.6 -2462.7,408.3 -2491.4,408.1" fill="#a2a4a2" /><polygon points="-2573.4,429.7 -2543.6,429.9 -2430.8,408.6 -2459.4,408.4" fill="#a2a4a2" /><polygon points="-3068.9,437.0 -3059.5,437.1 -2799.9,394.8 -2808.5,394.7" fill="#a2a4a2" /><polygon points="-2480.7,430.5 -2366.3,431.5 -2260.3,410.2 -2370.3,409.2" fill="#a2a4a2" /><polygon points="-2303.4,432.1 -2273.7,432.4 -2171.1,411.0 -2199.7,410.7" fill="#a2a4a2" /><polygon points="-2270.3,432.4 -2240.5,432.7 -2139.2,411.2 -2167.8,411.0" fill="#a2a4a2" /><polygon points="-2194.8,433.1 -2080.4,434.1 -1985.1,412.6 -2095.2,411.6" fill="#a2a4a2" /><polygon points="-2034.7,434.5 -2004.9,434.8 -1912.5,413.3 -1941.1,413.0" fill="#a2a4a2" /><polygon points="-2001.5,434.8 -1971.8,435.1 -1880.6,413.6 -1909.2,413.3" fill="#a2a4a2" /><polygon points="-2485.6,442.3 -2476.2,442.4 -2259.8,399.6 -2268.5,399.5" fill="#a2a4a2" /><polygon points="-1908.9,435.6 -1794.5,436.7 -1710.0,415.1 -1820.1,414.1" fill="#a2a4a2" /><polygon points="-1731.6,437.2 -1701.9,437.5 -1620.9,415.9 -1649.5,415.7" fill="#a2a4a2" /><polygon points="-1698.4,437.5 -1668.7,437.8 -1589.0,416.2 -1617.6,415.9" fill="#a2a4a2" /><polygon points="-1623.0,438.2 -1508.6,439.2 -1434.9,417.6 -1545.0,416.6" fill="#a2a4a2" /><polygon points="-1462.8,439.7 -1433.1,439.9 -1362.3,418.2 -1390.9,418.0" fill="#a2a4a2" /><polygon points="-1429.7,440.0 -1399.9,440.2 -1330.4,418.5 -1359.0,418.3" fill="#a2a4a2" /><polygon points="-1902.3,447.5 -1892.9,447.6 -1719.8,404.5 -1728.5,404.4" fill="#a2a4a2" /><polygon points="-1337.0,440.8 -1222.7,441.8 -1159.8,420.1 -1269.8,419.1" fill="#a2a4a2" /><polygon points="-1159.8,442.4 -1130.0,442.7 -1070.7,420.9 -1099.3,420.6" fill="#a2a4a2" /><polygon points="-1126.6,442.7 -1096.9,443.0 -1038.7,421.2 -1067.4,420.9" fill="#a2a4a2" /><polygon points="-1051.1,443.4 -936.7,444.4 -884.7,422.5 -994.7,421.5" fill="#a2a4a2" /><polygon points="-891.0,444.8 -861.3,445.1 -812.0,423.2 -840.7,422.9" fill="#a2a4a2" /><polygon points="-857.8,445.1 -828.1,445.4 -780.1,423.5 -808.7,423.2" fill="#a2a4a2" /><polygon points="-1319.0,452.8 -1309.6,452.9 -1179.8,409.3 -1188.4,409.3" fill="#a2a4a2" /><polygon points="-765.2,445.9 -650.8,447.0 -609.6,425.0 -719.6,424.0" fill="#a2a4a2" /><polygon points="-587.9,447.5 -558.2,447.8 -520.4,425.8 -549.0,425.6" fill="#a2a4a2" /><polygon points="-554.7,447.8 -525.0,448.1 -488.5,426.1 -517.1,425.8" fill="#a2a4a2" /><polygon points="-479.3,448.5 -364.9,449.5 -334.4,427.5 -444.5,426.5" fill="#a2a4a2" /><polygon points="-319.1,450.0 -289.4,450.2 -261.8,428.1 -290.4,427.9" fill="#a2a4a2" /><polygon points="-286.0,450.3 -256.2,450.5 -229.9,428.4 -258.5,428.2" fill="#a2a4a2" /><polygon points="-735.7,458.0 -726.4,458.1 -639.8,414.2 -648.4,414.1" fill="#a2a4a2" /><polygon points="-193.3,451.1 -79.0,452.1 -59.3,430.0 -169.4,429.0" fill="#a2a4a2" /><polygon points="-16.1,452.7 13.7,452.9 29.8,430.8 1.2,430.5" fill="#a2a4a2" /><polygon points="17.1,453.0 46.8,453.2 61.7,431.1 33.1,430.8" fill="#a2a4a2" /><polygon points="92.6,453.7 206.9,454.7 215.8,432.4 105.7,431.5" fill="#a2a4a2" /><polygon points="252.7,455.1 282.4,455.4 288.4,433.1 259.8,432.8" fill="#a2a4a2" /><polygon points="285.9,455.4 315.6,455.7 320.3,433.4 291.7,433.1" fill="#a2a4a2" /><polygon points="-152.4,463.3 -143.1,463.4 -99.7,419.1 -108.4,419.0" fill="#a2a4a2" /><polygon points="378.5,456.2 492.9,457.3 490.9,434.9 380.9,433.9" fill="#a2a4a2" /><polygon points="555.8,457.8 585.5,458.1 580.0,435.7 551.4,435.5" fill="#a2a4a2" /><polygon points="588.9,458.1 618.7,458.4 612.0,436.0 583.3,435.8" fill="#a2a4a2" /><polygon points="664.4,458.8 778.8,459.8 766.0,437.4 656.0,436.4" fill="#a2a4a2" /><polygon points="824.5,460.2 854.3,460.5 838.7,438.0 810.0,437.8" fill="#a2a4a2" /><polygon points="857.7,460.5 887.4,460.8 870.6,438.3 842.0,438.1" fill="#a2a4a2" /><polygon points="430.9,468.5 440.2,468.6 440.3,423.9 431.7,423.8" fill="#a2a4a2" /><polygon points="950.3,461.4 1064.7,462.4 1041.1,439.9 931.1,438.9" fill="#a2a4a2" /><polygon points="1127.6,463.0 1157.3,463.2 1130.3,440.7 1101.7,440.4" fill="#a2a4a2" /><polygon points="1160.8,463.3 1190.5,463.5 1162.2,441.0 1133.6,440.7" fill="#a2a4a2" /><polygon points="1236.3,464.0 1350.6,465.0 1316.3,442.3 1206.2,441.4" fill="#a2a4a2" /><polygon points="1396.4,465.4 1426.1,465.7 1388.9,443.0 1360.3,442.7" fill="#a2a4a2" /><polygon points="1429.5,465.7 1459.3,466.0 1420.8,443.3 1392.2,443.0" fill="#a2a4a2" /><polygon points="1014.2,473.8 1023.5,473.9 980.3,428.8 971.7,428.7" fill="#a2a4a2" /><polygon points="1522.2,466.5 1636.6,467.6 1591.4,444.8 1481.3,443.8" fill="#a2a4a2" /><polygon points="1699.5,468.1 1729.2,468.4 1680.5,445.6 1651.9,445.4" fill="#a2a4a2" /><polygon points="1732.6,468.4 1762.4,468.7 1712.4,445.9 1683.8,445.7" fill="#a2a4a2" /><polygon points="1808.1,469.1 1922.5,470.1 1866.5,447.3 1756.4,446.3" fill="#a2a4a2" /><polygon points="1968.2,470.5 1998.0,470.8 1939.1,448.0 1910.5,447.7" fill="#a2a4a2" /><polygon points="2001.4,470.8 2031.1,471.1 1971.0,448.2 1942.4,448.0" fill="#a2a4a2" /><polygon points="1597.5,479.0 1606.8,479.1 1520.4,433.6 1511.7,433.6" fill="#a2a4a2" /><polygon points="2094.0,471.7 2208.4,472.7 2141.6,449.8 2031.6,448.8" fill="#a2a4a2" /><polygon points="2271.3,473.3 2301.0,473.5 2230.7,450.6 2202.1,450.3" fill="#a2a4a2" /><polygon points="2304.5,473.6 2334.2,473.8 2262.7,450.9 2234.0,450.6" fill="#a2a4a2" /><polygon points="2379.9,474.2 2494.3,475.3 2416.7,452.3 2306.7,451.3" fill="#a2a4a2" /><polygon points="2540.1,475.7 2569.8,476.0 2489.4,452.9 2460.7,452.6" fill="#a2a4a2" /><polygon points="2573.2,476.0 2603.0,476.3 2521.3,453.2 2492.7,452.9" fill="#a2a4a2" /><polygon points="2180.8,484.3 2190.1,484.4 2060.4,438.5 2051.7,438.4" fill="#a2a4a2" /><polygon points="2665.9,476.8 2780.2,477.8 2691.8,454.7 2581.8,453.7" fill="#a2a4a2" /><polygon points="2843.1,478.4 2872.9,478.7 2781.0,455.5 2752.4,455.3" fill="#a2a4a2" /><polygon points="2876.3,478.7 2906.0,479.0 2812.9,455.8 2784.3,455.6" fill="#a2a4a2" /><polygon points="2951.8,479.4 3066.2,480.4 2967.0,457.2 2856.9,456.2" fill="#a2a4a2" /><polygon points="3111.9,480.8 3141.6,481.1 3039.6,457.9 3011.0,457.6" fill="#a2a4a2" /><polygon points="3145.1,481.1 3174.8,481.4 3071.5,458.1 3042.9,457.9" fill="#a2a4a2" /><polygon points="2764.1,489.5 2773.4,489.6 2600.4,443.4 2591.8,443.3" fill="#a2a4a2" /><polygon points="3237.7,482.0 3352.1,483.0 3242.1,459.7 3132.0,458.7" fill="#a2a4a2" /><polygon points="3415.0,483.6 3444.7,483.8 3331.2,460.5 3302.6,460.2" fill="#a2a4a2" /><polygon points="3448.2,483.9 3477.9,484.1 3363.1,460.8 3334.5,460.5" fill="#a2a4a2" /><polygon points="3523.6,484.5 3638.0,485.6 3517.2,462.2 3407.1,461.2" fill="#a2a4a2" /><polygon points="3683.8,486.0 3713.5,486.2 3589.8,462.8 3561.2,462.6" fill="#a2a4a2" /><polygon points="3716.9,486.3 3746.7,486.5 3621.7,463.1 3593.1,462.8" fill="#a2a4a2" /><polygon points="3347.4,494.8 3356.7,494.9 3140.4,448.2 3131.8,448.1" fill="#a2a4a2" /><polygon points="-11060.6,59.5 11937.3,266.5 11797.2,261.6 -10920.4,57.1" fill="#a2a4a2" /><polygon points="-1321.8,148.2 -1264.1,148.8 -1230.9,143.3 -1287.5,142.8" fill="#a2a4a2" /><polygon points="-1232.3,149.0 -1217.3,149.2 -1185.1,143.7 -1199.8,143.5" fill="#a2a4a2" /><polygon points="-1215.6,149.2 -1200.6,149.3 -1168.7,143.8 -1183.4,143.7" fill="#a2a4a2" /><polygon points="-1177.5,149.5 -1119.8,150.1 -1089.5,144.5 -1146.1,144.0" fill="#a2a4a2" /><polygon points="-1096.7,150.3 -1081.7,150.4 -1052.1,144.9 -1066.8,144.7" fill="#a2a4a2" /><polygon points="-1080.0,150.4 -1065.0,150.6 -1035.7,145.0 -1050.4,144.9" fill="#a2a4a2" /><polygon points="-1312.6,151.3 -1308.0,151.3 -1240.6,140.4 -1245.1,140.3" fill="#a2a4a2" /><polygon points="-1033.2,150.8 -975.5,151.4 -948.0,145.8 -1004.6,145.3" fill="#a2a4a2" /><polygon points="-943.8,151.6 -928.8,151.8 -902.2,146.2 -916.9,146.1" fill="#a2a4a2" /><polygon points="-927.1,151.8 -912.1,151.9 -885.8,146.4 -900.5,146.2" fill="#a2a4a2" /><polygon points="-889.0,152.1 -831.3,152.7 -806.5,147.1 -863.1,146.6" fill="#a2a4a2" /><polygon points="-808.2,152.9 -793.2,153.0 -769.2,147.4 -783.9,147.3" fill="#a2a4a2" /><polygon points="-791.4,153.0 -776.4,153.1 -752.8,147.6 -767.5,147.4" fill="#a2a4a2" /><polygon points="-1021.2,153.9 -1016.5,154.0 -960.4,142.9 -964.9,142.8" fill="#a2a4a2" /><polygon points="-744.7,153.4 -687.0,154.0 -665.1,148.4 -721.7,147.8" fill="#a2a4a2" /><polygon points="-655.3,154.2 -640.3,154.4 -619.2,148.8 -634.0,148.6" fill="#a2a4a2" /><polygon points="-638.5,154.4 -623.5,154.5 -602.8,148.9 -617.5,148.8" fill="#a2a4a2" /><polygon points="-600.4,154.7 -542.7,155.3 -523.6,149.6 -580.2,149.1" fill="#a2a4a2" /><polygon points="-519.6,155.5 -504.6,155.6 -486.3,150.0 -501.0,149.8" fill="#a2a4a2" /><polygon points="-502.9,155.6 -487.9,155.7 -469.9,150.1 -484.6,150.0" fill="#a2a4a2" /><polygon points="-729.8,156.6 -725.1,156.6 -680.2,145.4 -684.7,145.4" fill="#a2a4a2" /><polygon points="-456.2,156.0 -398.5,156.5 -382.1,150.9 -438.7,150.4" fill="#a2a4a2" /><polygon points="-366.7,156.8 -351.7,157.0 -336.3,151.3 -351.0,151.2" fill="#a2a4a2" /><polygon points="-350.0,157.0 -335.0,157.1 -319.9,151.5 -334.6,151.3" fill="#a2a4a2" /><polygon points="-311.9,157.3 -254.2,157.8 -240.7,152.2 -297.3,151.7" fill="#a2a4a2" /><polygon points="-231.1,158.1 -216.1,158.2 -203.3,152.5 -218.0,152.4" fill="#a2a4a2" /><polygon points="-214.4,158.2 -199.4,158.3 -186.9,152.7 -201.6,152.5" fill="#a2a4a2" /><polygon points="-438.3,159.2 -433.7,159.2 -400.0,147.9 -404.5,147.9" fill="#a2a4a2" /><polygon points="-167.6,158.6 -109.9,159.1 -99.2,153.5 -155.8,152.9" fill="#a2a4a2" /><polygon points="-78.2,159.4 -63.2,159.6 -53.4,153.9 -68.1,153.7" fill="#a2a4a2" /><polygon points="-61.4,159.6 -46.4,159.7 -37.0,154.0 -51.7,153.9" fill="#a2a4a2" /><polygon points="-23.3,159.9 34.4,160.4 42.3,154.7 -14.3,154.2" fill="#a2a4a2" /><polygon points="57.4,160.7 72.4,160.8 79.6,155.1 64.9,154.9" fill="#a2a4a2" /><polygon points="74.2,160.8 89.2,160.9 96.0,155.2 81.3,155.1" fill="#a2a4a2" /><polygon points="-146.9,161.8 -142.2,161.8 -119.8,150.5 -124.3,150.4" fill="#a2a4a2" /><polygon points="120.9,161.2 178.6,161.7 183.7,156.0 127.1,155.5" fill="#a2a4a2" /><polygon points="210.4,162.0 225.4,162.2 229.6,156.4 214.9,156.3" fill="#a2a4a2" /><polygon points="227.1,162.2 242.1,162.3 246.0,156.6 231.3,156.4" fill="#a2a4a2" /><polygon points="265.2,162.5 322.9,163.0 325.2,157.3 268.6,156.8" fill="#a2a4a2" /><polygon points="346.0,163.2 361.0,163.4 362.5,157.6 347.8,157.5" fill="#a2a4a2" /><polygon points="362.7,163.4 377.7,163.5 379.0,157.8 364.2,157.6" fill="#a2a4a2" /><polygon points="144.5,164.4 149.2,164.5 160.4,153.0 155.9,152.9" fill="#a2a4a2" /><polygon points="409.5,163.8 467.2,164.3 466.7,158.5 410.1,158.0" fill="#a2a4a2" /><polygon points="498.9,164.6 513.9,164.8 512.5,159.0 497.8,158.8" fill="#a2a4a2" /><polygon points="515.6,164.8 530.7,164.9 528.9,159.1 514.2,159.0" fill="#a2a4a2" /><polygon points="553.7,165.1 611.4,165.6 608.1,159.8 551.5,159.3" fill="#a2a4a2" /><polygon points="634.5,165.8 649.5,166.0 645.5,160.2 630.8,160.0" fill="#a2a4a2" /><polygon points="651.3,166.0 666.3,166.1 661.9,160.3 647.2,160.2" fill="#a2a4a2" /><polygon points="436.0,167.0 440.6,167.1 440.6,155.5 436.2,155.5" fill="#a2a4a2" /><polygon points="698.0,166.4 755.7,166.9 749.6,161.1 693.0,160.6" fill="#a2a4a2" /><polygon points="787.5,167.2 802.5,167.4 795.4,161.5 780.7,161.4" fill="#a2a4a2" /><polygon points="804.2,167.4 819.2,167.5 811.8,161.6 797.1,161.5" fill="#a2a4a2" /><polygon points="842.3,167.7 900.0,168.2 891.1,162.4 834.5,161.9" fill="#a2a4a2" /><polygon points="923.1,168.4 938.1,168.6 928.4,162.7 913.7,162.6" fill="#a2a4a2" /><polygon points="939.8,168.6 954.8,168.7 944.8,162.8 930.1,162.7" fill="#a2a4a2" /><polygon points="727.4,169.7 732.1,169.7 720.8,158.0 716.4,158.0" fill="#a2a4a2" /><polygon points="986.5,169.0 1044.3,169.5 1032.5,163.6 975.9,163.1" fill="#a2a4a2" /><polygon points="1076.0,169.8 1091.0,170.0 1078.4,164.0 1063.7,163.9" fill="#a2a4a2" /><polygon points="1092.7,170.0 1107.7,170.1 1094.8,164.2 1080.1,164.1" fill="#a2a4a2" /><polygon points="1130.8,170.3 1188.5,170.8 1174.0,164.9 1117.4,164.4" fill="#a2a4a2" /><polygon points="1211.6,171.0 1226.6,171.2 1211.3,165.2 1196.6,165.1" fill="#a2a4a2" /><polygon points="1228.3,171.2 1243.3,171.3 1227.8,165.4 1213.0,165.3" fill="#a2a4a2" /><polygon points="1018.8,172.3 1023.5,172.3 1001.1,160.5 996.6,160.5" fill="#a2a4a2" /><polygon points="1275.1,171.6 1332.8,172.1 1315.5,166.2 1258.9,165.7" fill="#a2a4a2" /><polygon points="1364.5,172.4 1379.5,172.6 1361.3,166.6 1346.6,166.5" fill="#a2a4a2" /><polygon points="1381.3,172.6 1396.3,172.7 1377.7,166.7 1363.0,166.6" fill="#a2a4a2" /><polygon points="1419.4,172.9 1477.1,173.4 1456.9,167.5 1400.3,166.9" fill="#a2a4a2" /><polygon points="1500.2,173.6 1515.2,173.8 1494.3,167.8 1479.6,167.7" fill="#a2a4a2" /><polygon points="1516.9,173.8 1531.9,173.9 1510.7,167.9 1496.0,167.8" fill="#a2a4a2" /><polygon points="1310.2,174.9 1314.9,175.0 1281.3,163.1 1276.8,163.0" fill="#a2a4a2" /><polygon points="1563.6,174.2 1621.3,174.7 1598.4,168.7 1541.8,168.2" fill="#a2a4a2" /><polygon points="1653.1,175.0 1668.1,175.1 1644.2,169.1 1629.5,169.0" fill="#a2a4a2" /><polygon points="1669.8,175.2 1684.8,175.3 1660.6,169.3 1645.9,169.2" fill="#a2a4a2" /><polygon points="1707.9,175.5 1765.6,176.0 1739.9,170.0 1683.3,169.5" fill="#a2a4a2" /><polygon points="1788.7,176.2 1803.7,176.4 1777.2,170.3 1762.5,170.2" fill="#a2a4a2" /><polygon points="1805.4,176.4 1820.4,176.5 1793.6,170.5 1778.9,170.4" fill="#a2a4a2" /><polygon points="1601.7,177.5 1606.3,177.6 1561.5,165.6 1557.0,165.5" fill="#a2a4a2" /><polygon points="1852.2,176.8 1909.9,177.3 1881.3,171.3 1824.8,170.8" fill="#a2a4a2" /><polygon points="1941.6,177.6 1956.6,177.7 1927.2,171.7 1912.5,171.6" fill="#a2a4a2" /><polygon points="1958.4,177.8 1973.4,177.9 1943.6,171.8 1928.9,171.7" fill="#a2a4a2" /><polygon points="1996.4,178.1 2054.2,178.6 2022.8,172.5 1966.2,172.0" fill="#a2a4a2" /><polygon points="2077.2,178.8 2092.2,179.0 2060.2,172.9 2045.4,172.8" fill="#a2a4a2" /><polygon points="2094.0,179.0 2109.0,179.1 2076.6,173.0 2061.9,172.9" fill="#a2a4a2" /><polygon points="1893.1,180.2 1897.8,180.2 1841.7,168.1 1837.2,168.1" fill="#a2a4a2" /><polygon points="-7259.7,-4.5 8138.1,134.1 8075.0,131.9 -7196.6,-5.5" fill="#a2a4a2" /><polygon points="-737.8,54.7 -699.2,55.1 -684.3,52.6 -722.4,52.3" fill="#a2a4a2" /><polygon points="-678.0,55.3 -667.9,55.4 -653.4,52.9 -663.3,52.8" fill="#a2a4a2" /><polygon points="-666.8,55.4 -656.8,55.5 -642.4,53.0 -652.3,52.9" fill="#a2a4a2" /><polygon points="-641.3,55.6 -602.7,56.0 -589.1,53.5 -627.2,53.1" fill="#a2a4a2" /><polygon points="-587.3,56.1 -577.3,56.2 -563.9,53.7 -573.8,53.6" fill="#a2a4a2" /><polygon points="-576.1,56.2 -566.1,56.3 -552.9,53.8 -562.8,53.7" fill="#a2a4a2" /><polygon points="-727.8,56.2 -724.7,56.2 -694.4,51.2 -697.4,51.2" fill="#a2a4a2" /><polygon points="-544.8,56.5 -506.3,56.8 -493.9,54.3 -531.9,54.0" fill="#a2a4a2" /><polygon points="-485.0,57.0 -475.0,57.1 -463.0,54.6 -472.9,54.5" fill="#a2a4a2" /><polygon points="-473.8,57.1 -463.8,57.2 -452.0,54.7 -461.9,54.6" fill="#a2a4a2" /><polygon points="-448.4,57.3 -409.8,57.7 -398.7,55.2 -436.7,54.8" fill="#a2a4a2" /><polygon points="-394.3,57.8 -384.3,57.9 -373.5,55.4 -383.4,55.3" fill="#a2a4a2" /><polygon points="-383.2,57.9 -373.1,58.0 -362.5,55.5 -372.4,55.4" fill="#a2a4a2" /><polygon points="-533.5,57.9 -530.4,57.9 -505.2,52.9 -508.2,52.9" fill="#a2a4a2" /><polygon points="-351.9,58.2 -313.3,58.6 -303.4,56.0 -341.5,55.7" fill="#a2a4a2" /><polygon points="-292.1,58.7 -282.0,58.8 -272.6,56.3 -282.5,56.2" fill="#a2a4a2" /><polygon points="-280.9,58.8 -270.9,58.9 -261.5,56.4 -271.4,56.3" fill="#a2a4a2" /><polygon points="-255.4,59.1 -216.8,59.4 -208.2,56.9 -246.3,56.6" fill="#a2a4a2" /><polygon points="-201.4,59.6 -191.4,59.7 -183.1,57.1 -193.0,57.0" fill="#a2a4a2" /><polygon points="-190.2,59.7 -180.2,59.8 -172.0,57.2 -181.9,57.1" fill="#a2a4a2" /><polygon points="-339.3,59.7 -336.2,59.7 -316.0,54.6 -319.0,54.6" fill="#a2a4a2" /><polygon points="-158.9,59.9 -120.4,60.3 -113.0,57.8 -151.1,57.4" fill="#a2a4a2" /><polygon points="-99.1,60.5 -89.1,60.6 -82.2,58.0 -92.1,57.9" fill="#a2a4a2" /><polygon points="-87.9,60.6 -77.9,60.7 -71.1,58.1 -81.0,58.0" fill="#a2a4a2" /><polygon points="-62.5,60.8 -23.9,61.2 -17.8,58.6 -55.9,58.3" fill="#a2a4a2" /><polygon points="-8.4,61.3 1.6,61.4 7.3,58.8 -2.6,58.7" fill="#a2a4a2" /><polygon points="2.8,61.4 12.8,61.5 18.4,58.9 8.5,58.8" fill="#a2a4a2" /><polygon points="-145.1,61.4 -142.0,61.4 -126.8,56.3 -129.8,56.3" fill="#a2a4a2" /><polygon points="34.0,61.7 72.6,62.0 77.4,59.5 39.3,59.1" fill="#a2a4a2" /><polygon points="93.8,62.2 103.9,62.3 108.3,59.7 98.4,59.7" fill="#a2a4a2" /><polygon points="105.0,62.3 115.0,62.4 119.3,59.8 109.4,59.8" fill="#a2a4a2" /><polygon points="130.5,62.6 169.1,62.9 172.6,60.3 134.5,60.0" fill="#a2a4a2" /><polygon points="184.5,63.0 194.5,63.1 197.8,60.5 187.9,60.5" fill="#a2a4a2" /><polygon points="195.7,63.1 205.7,63.2 208.8,60.6 198.9,60.6" fill="#a2a4a2" /><polygon points="49.2,63.1 52.3,63.2 62.4,58.1 59.3,58.0" fill="#a2a4a2" /><polygon points="227.0,63.4 265.6,63.8 267.8,61.2 229.8,60.8" fill="#a2a4a2" /><polygon points="286.8,64.0 296.8,64.0 298.7,61.5 288.8,61.4" fill="#a2a4a2" /><polygon points="298.0,64.1 308.0,64.1 309.7,61.6 299.8,61.5" fill="#a2a4a2" /><polygon points="323.4,64.3 362.0,64.6 363.1,62.0 325.0,61.7" fill="#a2a4a2" /><polygon points="377.5,64.8 387.5,64.9 388.2,62.3 378.3,62.2" fill="#a2a4a2" /><polygon points="388.7,64.9 398.7,65.0 399.2,62.4 389.3,62.3" fill="#a2a4a2" /><polygon points="243.4,64.9 246.5,64.9 251.6,59.8 248.5,59.7" fill="#a2a4a2" /><polygon points="419.9,65.2 458.5,65.5 458.3,62.9 420.2,62.6" fill="#a2a4a2" /><polygon points="479.7,65.7 489.8,65.8 489.1,63.2 479.2,63.1" fill="#a2a4a2" /><polygon points="490.9,65.8 501.0,65.9 500.2,63.3 490.3,63.2" fill="#a2a4a2" /><polygon points="516.4,66.0 555.0,66.4 553.5,63.8 515.4,63.4" fill="#a2a4a2" /><polygon points="570.4,66.5 580.4,66.6 578.6,64.0 568.7,63.9" fill="#a2a4a2" /><polygon points="581.6,66.6 591.6,66.7 589.7,64.1 579.8,64.0" fill="#a2a4a2" /><polygon points="437.6,66.6 440.7,66.7 440.8,61.5 437.7,61.4" fill="#a2a4a2" /><polygon points="612.9,66.9 651.5,67.2 648.7,64.6 610.6,64.3" fill="#a2a4a2" /><polygon points="672.7,67.4 682.7,67.5 679.5,64.9 669.6,64.8" fill="#a2a4a2" /><polygon points="683.9,67.5 693.9,67.6 690.6,65.0 680.7,64.9" fill="#a2a4a2" /><polygon points="709.3,67.8 747.9,68.1 743.9,65.5 705.8,65.1" fill="#a2a4a2" /><polygon points="763.4,68.2 773.4,68.3 769.0,65.7 759.1,65.6" fill="#a2a4a2" /><polygon points="774.6,68.3 784.6,68.4 780.1,65.8 770.2,65.7" fill="#a2a4a2" /><polygon points="631.9,68.4 635.0,68.4 629.9,63.2 626.9,63.1" fill="#a2a4a2" /><polygon points="805.8,68.6 844.4,69.0 839.1,66.3 801.0,66.0" fill="#a2a4a2" /><polygon points="865.6,69.2 875.7,69.3 870.0,66.6 860.1,66.5" fill="#a2a4a2" /><polygon points="876.8,69.3 886.9,69.4 881.0,66.7 871.1,66.6" fill="#a2a4a2" /><polygon points="902.3,69.5 940.9,69.8 934.3,67.2 896.3,66.8" fill="#a2a4a2" /><polygon points="956.3,70.0 966.3,70.1 959.5,67.4 949.6,67.3" fill="#a2a4a2" /><polygon points="967.5,70.1 977.5,70.2 970.5,67.5 960.6,67.4" fill="#a2a4a2" /><polygon points="826.1,70.1 829.2,70.2 819.1,64.9 816.1,64.8" fill="#a2a4a2" /><polygon points="998.8,70.4 1037.4,70.7 1029.6,68.0 991.5,67.7" fill="#a2a4a2" /><polygon points="1058.6,70.9 1068.6,71.0 1060.4,68.3 1050.5,68.2" fill="#a2a4a2" /><polygon points="1069.8,71.0 1079.8,71.1 1071.4,68.4 1061.5,68.3" fill="#a2a4a2" /><polygon points="1095.2,71.2 1133.8,71.6 1124.8,68.9 1086.7,68.5" fill="#a2a4a2" /><polygon points="1149.3,71.7 1159.3,71.8 1149.9,69.1 1140.0,69.0" fill="#a2a4a2" /><polygon points="1160.5,71.8 1170.5,71.9 1160.9,69.2 1151.0,69.1" fill="#a2a4a2" /><polygon points="1020.4,71.9 1023.5,71.9 1008.3,66.6 1005.3,66.5" fill="#a2a4a2" /><polygon points="1191.7,72.1 1230.3,72.4 1220.0,69.7 1181.9,69.4" fill="#a2a4a2" /><polygon points="1251.5,72.6 1261.6,72.7 1250.8,70.0 1240.9,69.9" fill="#a2a4a2" /><polygon points="1262.7,72.7 1272.8,72.8 1261.9,70.1 1252.0,70.0" fill="#a2a4a2" /><polygon points="1288.2,73.0 1326.8,73.3 1315.2,70.6 1277.1,70.3" fill="#a2a4a2" /><polygon points="1342.2,73.5 1352.2,73.5 1340.3,70.8 1330.4,70.7" fill="#a2a4a2" /><polygon points="1353.4,73.6 1363.4,73.6 1351.4,70.9 1341.5,70.8" fill="#a2a4a2" /><polygon points="1214.6,73.6 1217.7,73.7 1197.5,68.3 1194.5,68.2" fill="#a2a4a2" /><polygon points="1384.7,73.8 1423.3,74.2 1410.4,71.5 1372.3,71.1" fill="#a2a4a2" /><polygon points="1444.5,74.4 1454.5,74.5 1441.3,71.7 1431.4,71.7" fill="#a2a4a2" /><polygon points="1455.7,74.5 1465.7,74.6 1452.3,71.8 1442.4,71.8" fill="#a2a4a2" /><polygon points="1481.1,74.7 1519.7,75.1 1505.6,72.3 1467.5,72.0" fill="#a2a4a2" /><polygon points="1535.2,75.2 1545.2,75.3 1530.8,72.5 1520.9,72.5" fill="#a2a4a2" /><polygon points="1546.4,75.3 1556.4,75.4 1541.8,72.6 1531.9,72.6" fill="#a2a4a2" /><polygon points="1408.8,75.4 1411.9,75.4 1386.7,70.0 1383.7,69.9" fill="#a2a4a2" /><polygon points="-199.8,48.2 -195.4,48.3 -3341.6,949.4 -3367.5,949.1" fill="#a2a4a2" /><polygon points="-3377.2,949.0 -3331.8,949.5 -2740.9,779.8 -2779.2,779.4" fill="#a2a4a2" /><polygon points="-2306.0,645.2 -2273.3,645.5 -2097.0,594.8 -2127.5,594.6" fill="#a2a4a2" /><polygon points="-2108.4,589.1 -2078.1,589.4 -1925.5,545.6 -1954.0,545.3" fill="#a2a4a2" /><polygon points="-1749.9,487.4 -1723.8,487.7 -1343.5,378.5 -1365.0,378.3" fill="#a2a4a2" /><polygon points="-1246.4,344.6 -1226.3,344.8 -1158.1,325.2 -1177.4,325.0" fill="#a2a4a2" /><polygon points="-1169.8,322.9 -1150.6,323.1 -1088.3,305.2 -1106.7,305.0" fill="#a2a4a2" /><polygon points="-988.4,271.4 -971.3,271.6 -799.0,222.1 -813.9,221.9" fill="#a2a4a2" /><polygon points="-734.9,199.6 -720.9,199.7 -687.4,190.0 -701.0,189.9" fill="#a2a4a2" /><polygon points="-697.2,188.8 -683.6,189.0 -652.2,179.9 -665.3,179.8" fill="#a2a4a2" /><polygon points="-619.7,166.9 -607.1,167.0 -509.0,138.8 -520.5,138.7" fill="#a2a4a2" /><polygon points="-485.8,128.9 -474.8,129.0 -453.8,123.0 -464.6,122.9" fill="#a2a4a2" /><polygon points="-462.2,122.2 -451.4,122.3 -431.5,116.6 -442.0,116.5" fill="#a2a4a2" /><polygon points="-402.2,105.2 -392.2,105.3 -329.0,87.1 -338.3,87.0" fill="#a2a4a2" /><polygon points="-307.1,78.2 -298.2,78.3 -284.5,74.3 -293.2,74.3" fill="#a2a4a2" /><polygon points="-291.6,73.8 -282.9,73.9 -269.7,70.1 -278.3,70.0" fill="#a2a4a2" /><polygon points="-258.7,64.5 -250.4,64.5 -206.3,51.9 -214.1,51.8" fill="#a2a4a2" /><polygon points="-17.8,49.9 -13.4,49.9 -2260.0,959.1 -2285.9,958.9" fill="#a2a4a2" /><polygon points="-2295.7,958.8 -2250.3,959.2 -1828.8,788.0 -1867.1,787.6" fill="#a2a4a2" /><polygon points="-1527.9,652.2 -1495.2,652.5 -1369.4,601.4 -1400.0,601.1" fill="#a2a4a2" /><polygon points="-1386.3,595.6 -1355.9,595.9 -1247.1,551.7 -1275.6,551.5" fill="#a2a4a2" /><polygon points="-1129.3,493.0 -1103.2,493.3 -831.9,383.1 -853.4,382.9" fill="#a2a4a2" /><polygon points="-768.4,348.9 -748.4,349.1 -699.7,329.3 -718.9,329.2" fill="#a2a4a2" /><polygon points="-713.5,327.0 -694.3,327.2 -649.9,309.1 -668.3,309.0" fill="#a2a4a2" /><polygon points="-583.5,275.1 -566.5,275.2 -443.5,225.3 -458.4,225.1" fill="#a2a4a2" /><polygon points="-401.8,202.6 -387.8,202.7 -363.9,193.0 -377.5,192.8" fill="#a2a4a2" /><polygon points="-374.8,191.7 -361.2,191.9 -338.8,182.8 -352.0,182.6" fill="#a2a4a2" /><polygon points="-319.2,169.6 -306.6,169.7 -236.7,141.3 -248.1,141.2" fill="#a2a4a2" /><polygon points="-223.3,131.3 -212.3,131.4 -197.3,125.3 -208.1,125.2" fill="#a2a4a2" /><polygon points="-206.4,124.5 -195.6,124.6 -181.4,118.8 -191.9,118.7" fill="#a2a4a2" /><polygon points="-163.3,107.3 -153.3,107.4 -108.3,89.1 -117.5,89.0" fill="#a2a4a2" /><polygon points="-95.2,80.1 -86.3,80.2 -76.5,76.2 -85.2,76.1" fill="#a2a4a2" /><polygon points="-84.1,75.7 -75.4,75.8 -66.0,71.9 -74.6,71.9" fill="#a2a4a2" /><polygon points="-60.5,66.3 -52.2,66.3 -20.8,53.6 -28.6,53.5" fill="#a2a4a2" /><polygon points="164.2,51.5 168.5,51.6 -1178.4,968.8 -1204.4,968.6" fill="#a2a4a2" /><polygon points="-1214.1,968.5 -1168.7,968.9 -916.6,796.2 -954.9,795.8" fill="#a2a4a2" /><polygon points="-749.8,659.2 -717.1,659.5 -641.8,607.9 -672.4,607.7" fill="#a2a4a2" /><polygon points="-664.1,602.1 -633.8,602.4 -568.7,557.8 -597.2,557.6" fill="#a2a4a2" /><polygon points="-508.7,498.6 -482.6,498.8 -320.4,387.7 -341.9,387.5" fill="#a2a4a2" /><polygon points="-290.5,353.2 -270.4,353.4 -241.3,333.5 -260.5,333.3" fill="#a2a4a2" /><polygon points="-257.2,331.1 -238.1,331.3 -211.5,313.1 -229.9,312.9" fill="#a2a4a2" /><polygon points="-178.6,278.7 -161.6,278.9 -88.0,228.5 -103.0,228.3" fill="#a2a4a2" /><polygon points="-68.7,205.5 -54.7,205.7 -40.4,195.9 -54.0,195.7" fill="#a2a4a2" /><polygon points="-52.4,194.6 -38.8,194.8 -25.4,185.6 -38.6,185.5" fill="#a2a4a2" /><polygon points="-18.8,172.3 -6.2,172.4 35.7,143.7 24.2,143.6" fill="#a2a4a2" /><polygon points="39.3,133.6 50.3,133.7 59.2,127.6 48.5,127.5" fill="#a2a4a2" /><polygon points="49.5,126.8 60.2,126.9 68.7,121.1 58.2,121.0" fill="#a2a4a2" /><polygon points="75.5,109.5 85.5,109.6 112.5,91.1 103.2,91.0" fill="#a2a4a2" /><polygon points="116.7,82.0 125.6,82.1 131.5,78.1 122.7,78.0" fill="#a2a4a2" /><polygon points="123.4,77.5 132.1,77.6 137.8,73.8 129.2,73.7" fill="#a2a4a2" /><polygon points="137.7,68.0 146.0,68.1 164.8,55.2 157.0,55.2" fill="#a2a4a2" /><polygon points="346.1,53.2 350.5,53.2 -96.9,978.6 -122.8,978.3" fill="#a2a4a2" /><polygon points="-132.6,978.2 -87.1,978.7 -4.4,804.4 -42.7,804.0" fill="#a2a4a2" /><polygon points="28.4,666.2 61.0,666.5 85.7,614.5 55.2,614.2" fill="#a2a4a2" /><polygon points="58.0,608.6 88.4,608.9 109.7,563.9 81.2,563.7" fill="#a2a4a2" /><polygon points="111.9,504.2 138.0,504.4 191.2,392.3 169.7,392.1" fill="#a2a4a2" /><polygon points="187.5,357.5 207.6,357.7 217.2,337.6 197.9,337.4" fill="#a2a4a2" /><polygon points="199.0,335.2 218.2,335.4 226.9,317.0 208.5,316.8" fill="#a2a4a2" /><polygon points="226.3,282.4 243.3,282.5 267.4,231.7 252.5,231.5" fill="#a2a4a2" /><polygon points="264.4,208.5 278.3,208.7 283.0,198.8 269.5,198.7" fill="#a2a4a2" /><polygon points="270.0,197.5 283.6,197.7 288.0,188.4 274.8,188.3" fill="#a2a4a2" /><polygon points="281.7,175.0 294.3,175.1 308.0,146.2 296.6,146.1" fill="#a2a4a2" /><polygon points="301.8,136.0 312.8,136.1 315.7,129.9 305.0,129.8" fill="#a2a4a2" /><polygon points="305.3,129.1 316.1,129.2 318.9,123.3 308.4,123.2" fill="#a2a4a2" /><polygon points="314.3,111.6 324.4,111.7 333.2,93.1 323.9,93.0" fill="#a2a4a2" /><polygon points="328.6,83.9 337.5,84.0 339.4,79.9 330.7,79.9" fill="#a2a4a2" /><polygon points="330.9,79.4 339.7,79.5 341.5,75.6 333.0,75.5" fill="#a2a4a2" /><polygon points="335.9,69.8 344.2,69.9 350.4,56.9 342.6,56.8" fill="#a2a4a2" /><polygon points="528.1,54.8 532.5,54.8 984.7,988.3 958.7,988.1" fill="#a2a4a2" /><polygon points="949.0,988.0 994.4,988.4 907.8,812.6 869.4,812.3" fill="#a2a4a2" /><polygon points="806.5,673.2 839.2,673.5 813.3,621.0 782.7,620.8" fill="#a2a4a2" /><polygon points="780.2,615.1 810.5,615.4 788.1,570.0 759.7,569.8" fill="#a2a4a2" /><polygon points="732.5,509.8 758.6,510.0 702.8,396.9 681.3,396.7" fill="#a2a4a2" /><polygon points="665.5,361.8 685.6,362.0 675.6,341.7 656.3,341.6" fill="#a2a4a2" /><polygon points="655.3,339.3 674.5,339.5 665.3,321.0 646.9,320.8" fill="#a2a4a2" /><polygon points="631.2,286.0 648.2,286.2 622.9,234.9 608.0,234.7" fill="#a2a4a2" /><polygon points="597.5,211.5 611.4,211.7 606.5,201.7 592.9,201.6" fill="#a2a4a2" /><polygon points="592.4,200.5 606.0,200.6 601.4,191.2 588.2,191.1" fill="#a2a4a2" /><polygon points="582.1,177.7 594.7,177.8 580.4,148.6 568.9,148.5" fill="#a2a4a2" /><polygon points="564.3,138.3 575.3,138.4 572.3,132.2 561.5,132.1" fill="#a2a4a2" /><polygon points="561.2,131.4 571.9,131.5 569.0,125.6 558.5,125.5" fill="#a2a4a2" /><polygon points="553.2,113.8 563.2,113.9 554.0,95.1 544.7,95.0" fill="#a2a4a2" /><polygon points="540.5,85.8 549.4,85.9 547.4,81.8 538.7,81.7" fill="#a2a4a2" /><polygon points="538.5,81.3 547.2,81.4 545.3,77.4 536.7,77.4" fill="#a2a4a2" /><polygon points="534.1,71.6 542.4,71.7 536.0,58.6 528.2,58.5" fill="#a2a4a2" /><polygon points="710.1,56.4 714.5,56.5 2066.3,998.0 2040.3,997.8" fill="#a2a4a2" /><polygon points="2030.6,997.7 2076.0,998.1 1819.9,820.8 1781.6,820.5" fill="#a2a4a2" /><polygon points="1584.6,680.2 1617.3,680.5 1540.9,627.6 1510.3,627.3" fill="#a2a4a2" /><polygon points="1502.4,621.6 1532.7,621.9 1466.6,576.1 1438.1,575.9" fill="#a2a4a2" /><polygon points="1353.1,515.4 1379.1,515.6 1214.3,401.5 1192.9,401.3" fill="#a2a4a2" /><polygon points="1143.5,366.1 1163.6,366.3 1134.0,345.8 1114.7,345.7" fill="#a2a4a2" /><polygon points="1111.6,343.4 1130.7,343.6 1103.7,324.9 1085.3,324.7" fill="#a2a4a2" /><polygon points="1036.1,289.7 1053.1,289.8 978.4,238.1 963.4,237.9" fill="#a2a4a2" /><polygon points="930.6,214.5 944.5,214.7 930.0,204.6 916.4,204.5" fill="#a2a4a2" /><polygon points="914.8,203.4 928.4,203.5 914.7,194.0 901.6,193.9" fill="#a2a4a2" /><polygon points="882.6,180.4 895.2,180.5 852.7,151.1 841.3,151.0" fill="#a2a4a2" /><polygon points="826.8,140.7 837.9,140.8 828.8,134.5 818.0,134.4" fill="#a2a4a2" /><polygon points="817.0,133.7 827.8,133.8 819.1,127.8 808.6,127.7" fill="#a2a4a2" /><polygon points="792.0,115.9 802.1,116.0 774.7,97.1 765.4,97.0" fill="#a2a4a2" /><polygon points="752.4,87.7 761.3,87.8 755.4,83.7 746.7,83.6" fill="#a2a4a2" /><polygon points="746.0,83.1 754.7,83.2 749.0,79.3 740.5,79.2" fill="#a2a4a2" /><polygon points="732.3,73.4 740.6,73.5 721.5,60.2 713.7,60.2" fill="#a2a4a2" /><polygon points="892.1,58.1 896.4,58.1 3147.8,1007.8 3121.9,1007.5" fill="#a2a4a2" /><polygon points="3112.1,1007.4 3157.6,1007.9 2732.1,829.0 2693.8,828.7" fill="#a2a4a2" /><polygon points="2362.7,687.2 2395.4,687.5 2268.4,634.1 2237.9,633.9" fill="#a2a4a2" /><polygon points="2224.5,628.1 2254.9,628.4 2145.0,582.2 2116.5,582.0" fill="#a2a4a2" /><polygon points="1973.7,520.9 1999.7,521.2 1725.9,406.1 1704.4,405.9" fill="#a2a4a2" /><polygon points="1621.5,370.4 1641.6,370.6 1592.4,350.0 1573.2,349.8" fill="#a2a4a2" /><polygon points="1567.8,347.5 1587.0,347.7 1542.1,328.8 1523.7,328.7" fill="#a2a4a2" /><polygon points="1440.9,293.3 1457.9,293.5 1333.8,241.3 1318.9,241.1" fill="#a2a4a2" /><polygon points="1263.7,217.5 1277.6,217.7 1253.5,207.5 1239.9,207.4" fill="#a2a4a2" /><polygon points="1237.2,206.3 1250.8,206.4 1228.1,196.9 1215.0,196.7" fill="#a2a4a2" /><polygon points="1183.0,183.1 1195.6,183.2 1125.1,153.5 1113.6,153.4" fill="#a2a4a2" /><polygon points="1089.4,143.1 1100.4,143.2 1085.3,136.8 1074.5,136.7" fill="#a2a4a2" /><polygon points="1072.9,136.0 1083.6,136.1 1069.2,130.1 1058.7,130.0" fill="#a2a4a2" /><polygon points="1030.9,118.1 1040.9,118.2 995.4,99.0 986.2,99.0" fill="#a2a4a2" /><polygon points="964.3,89.6 973.2,89.7 963.4,85.6 954.6,85.5" fill="#a2a4a2" /><polygon points="953.5,85.0 962.2,85.1 952.8,81.1 944.2,81.0" fill="#a2a4a2" /><polygon points="930.5,75.2 938.8,75.3 907.1,61.9 899.3,61.8" fill="#a2a4a2" /><polygon points="1074.0,59.7 1078.4,59.7 4229.4,1017.5 4203.4,1017.3" fill="#a2a4a2" /><polygon points="4193.7,1017.2 4239.1,1017.6 3644.3,837.2 3606.0,836.9" fill="#a2a4a2" /><polygon points="3140.8,694.2 3173.5,694.5 2996.0,640.7 2965.5,640.4" fill="#a2a4a2" /><polygon points="2946.7,634.6 2977.0,634.9 2823.4,588.3 2794.9,588.1" fill="#a2a4a2" /><polygon points="2594.3,526.5 2620.3,526.8 2237.5,410.7 2216.0,410.5" fill="#a2a4a2" /><polygon points="2099.5,374.8 2119.5,374.9 2050.8,354.1 2031.6,353.9" fill="#a2a4a2" /><polygon points="2024.1,351.6 2043.3,351.8 1980.6,332.8 1962.1,332.6" fill="#a2a4a2" /><polygon points="1845.8,296.9 1862.8,297.1 1689.3,244.5 1674.3,244.3" fill="#a2a4a2" /><polygon points="1596.8,220.5 1610.7,220.7 1577.0,210.4 1563.4,210.3" fill="#a2a4a2" /><polygon points="1559.6,209.2 1573.2,209.3 1541.5,199.7 1528.3,199.6" fill="#a2a4a2" /><polygon points="1483.5,185.8 1496.1,185.9 1397.4,156.0 1386.0,155.9" fill="#a2a4a2" /><polygon points="1351.9,145.4 1362.9,145.5 1341.8,139.1 1331.0,139.0" fill="#a2a4a2" /><polygon points="1328.7,138.3 1339.4,138.4 1319.4,132.3 1308.9,132.2" fill="#a2a4a2" /><polygon points="1269.7,120.2 1279.8,120.3 1216.2,101.0 1206.9,100.9" fill="#a2a4a2" /><polygon points="1176.2,91.5 1185.1,91.6 1171.3,87.4 1162.6,87.4" fill="#a2a4a2" /><polygon points="1161.1,86.9 1169.8,87.0 1156.5,82.9 1148.0,82.9" fill="#a2a4a2" /><polygon points="1128.7,77.0 1137.0,77.0 1092.7,63.6 1084.9,63.5" fill="#a2a4a2" /><line x1="439.3" y1="54.0" x2="425.0" y2="1643.5" stroke="#b8b8b8" stroke-width="1.6"/><line x1="440.8" y1="54.0" x2="426.5" y2="1643.5" stroke="#ffffff" stroke-width="1"/><text stroke="#f1f1f1" stroke-width="0.9" x="0" y="0" font-family="Liberation Mono" font-size="27" fill="#9a9c9a" font-style="normal" transform="translate(178.0 425.0) rotate(1.2) skewX(-10)" letter-spacing="1.2">1METER</text><text stroke="#f1f1f1" stroke-width="0.9" x="0" y="0" font-family="Liberation Mono" font-size="27" fill="#9a9c9a" font-style="normal" transform="translate(720.0 429.0) rotate(3.5) skewX(-10)" letter-spacing="1.2">1METER</text><text x="0" y="0" font-family="Liberation Mono" font-size="10" fill="#9a9c9a" font-style="normal" transform="translate(307.0 157.0) rotate(1) skewX(0)" letter-spacing="0.6">1METER</text><text x="0" y="0" font-family="Liberation Mono" font-size="10" fill="#9a9c9a" font-style="normal" transform="translate(590.0 160.0) rotate(1) skewX(0)" letter-spacing="0.6">1METER</text><text x="0" y="0" font-family="Liberation Mono" font-size="10" fill="#9a9c9a" font-style="normal" transform="translate(23.0 156.0) rotate(1) skewX(0)" letter-spacing="0.6">1METER</text><text x="0" y="0" font-family="Liberation Mono" font-size="6" fill="#9a9c9a" font-style="normal" transform="translate(350.0 63.0) rotate(1) skewX(0)" letter-spacing="0.3">1METER</text><text x="0" y="0" font-family="Liberation Mono" font-size="6" fill="#9a9c9a" font-style="normal" transform="translate(542.0 65.0) rotate(1) skewX(0)" letter-spacing="0.3">1METER</text><text x="0" y="0" font-family="Liberation Mono" font-size="12" fill="#a5a7a5" font-style="italic" transform="translate(34.0 466.0) rotate(3) skewX(0)" letter-spacing="0.5">[Prototype]</text><text x="0" y="0" font-family="Liberation Mono" font-size="12" fill="#a5a7a5" font-style="normal" transform="translate(624.0 472.0) rotate(2) skewX(0)" letter-spacing="0.5">[Prototype]</text><text x="0" y="0" font-family="Liberation Mono" font-size="11" fill="#a5a7a5" font-style="italic" transform="translate(143.0 427.0) rotate(-62) skewX(0)" letter-spacing="0.5">[Prototype]</text><text x="0" y="0" font-family="Liberation Mono" font-size="11" fill="#a5a7a5" font-style="italic" transform="translate(692.0 430.0) rotate(-114) skewX(0)" letter-spacing="0.5">[Prototype]</text><text x="0" y="0" font-family="Liberation Mono" font-size="11" fill="#a5a7a5" font-style="italic" transform="translate(159.0 475.0) rotate(112) skewX(0)" letter-spacing="0.5">[Prototype]</text><text x="0" y="0" font-family="Liberation Mono" font-size="11" fill="#a5a7a5" font-style="italic" transform="translate(747.0 478.0) rotate(65) skewX(0)" letter-spacing="0.5">[Prototype]</text><rect x="0" y="0" width="875" height="54.0" fill="#e2e2e2"/><line x1="-106.5" y1="0" x2="-68.0" y2="54.0" stroke="#8a8a8a" stroke-width="1"/><line x1="-67.5" y1="0" x2="-31.8" y2="54.0" stroke="#8a8a8a" stroke-width="1"/><line x1="-28.5" y1="0" x2="4.5" y2="54.0" stroke="#8a8a8a" stroke-width="1"/><line x1="10.5" y1="0" x2="40.8" y2="54.0" stroke="#8a8a8a" stroke-width="1"/><line x1="49.5" y1="0" x2="77.0" y2="54.0" stroke="#8a8a8a" stroke-width="1"/><line x1="88.5" y1="0" x2="113.2" y2="54.0" stroke="#8a8a8a" stroke-width="1"/><line x1="127.5" y1="0" x2="149.5" y2="54.0" stroke="#8a8a8a" stroke-width="1"/><line x1="166.5" y1="0" x2="185.8" y2="54.0" stroke="#8a8a8a" stroke-width="1"/><line x1="205.5" y1="0" x2="222.0" y2="54.0" stroke="#8a8a8a" stroke-width="1"/><line x1="244.5" y1="0" x2="258.2" y2="54.0" stroke="#8a8a8a" stroke-width="1"/><line x1="283.5" y1="0" x2="294.5" y2="54.0" stroke="#8a8a8a" stroke-width="1"/><line x1="322.5" y1="0" x2="330.8" y2="54.0" stroke="#8a8a8a" stroke-width="1"/><line x1="361.5" y1="0" x2="367.0" y2="54.0" stroke="#8a8a8a" stroke-width="1"/><line x1="400.5" y1="0" x2="403.2" y2="54.0" stroke="#8a8a8a" stroke-width="1"/><line x1="439.5" y1="0" x2="439.5" y2="54.0" stroke="#8a8a8a" stroke-width="1"/><line x1="478.5" y1="0" x2="475.8" y2="54.0" stroke="#8a8a8a" stroke-width="1"/><line x1="517.5" y1="0" x2="512.0" y2="54.0" stroke="#8a8a8a" stroke-width="1"/><line x1="556.5" y1="0" x2="548.2" y2="54.0" stroke="#8a8a8a" stroke-width="1"/><line x1="595.5" y1="0" x2="584.5" y2="54.0" stroke="#8a8a8a" stroke-width="1"/><line x1="634.5" y1="0" x2="620.8" y2="54.0" stroke="#8a8a8a" stroke-width="1"/><line x1="673.5" y1="0" x2="657.0" y2="54.0" stroke="#8a8a8a" stroke-width="1"/><line x1="712.5" y1="0" x2="693.2" y2="54.0" stroke="#8a8a8a" stroke-width="1"/><line x1="751.5" y1="0" x2="729.5" y2="54.0" stroke="#8a8a8a" stroke-width="1"/><line x1="790.5" y1="0" x2="765.8" y2="54.0" stroke="#8a8a8a" stroke-width="1"/><line x1="829.5" y1="0" x2="802.0" y2="54.0" stroke="#8a8a8a" stroke-width="1"/><line x1="868.5" y1="0" x2="838.2" y2="54.0" stroke="#8a8a8a" stroke-width="1"/><line x1="907.5" y1="0" x2="874.5" y2="54.0" stroke="#8a8a8a" stroke-width="1"/><line x1="946.5" y1="0" x2="910.8" y2="54.0" stroke="#8a8a8a" stroke-width="1"/><line x1="0" y1="12.5" x2="875" y2="13.0" stroke="#8e8e8e" stroke-width="1.2" stroke-dasharray="10 3 4 3"/><line x1="0" y1="17" x2="875" y2="17.5" stroke="#cfcfcf" stroke-width="1.2" stroke-dasharray=""/><line x1="0" y1="28.5" x2="875" y2="29.0" stroke="#d0d0d0" stroke-width="1.2" stroke-dasharray=""/><line x1="0" y1="40.5" x2="875" y2="41.0" stroke="#d0d0d0" stroke-width="1.2" stroke-dasharray=""/><line x1="0" y1="54.0" x2="875" y2="55.0" stroke="#fbfbfb" stroke-width="1.5"/><defs><filter id="bl" x="-20%" y="-20%" width="140%" height="140%"><feGaussianBlur stdDeviation="3"/></filter></defs><polygon points="696.0,54.0 752.0,54.0 892.0,140.0 892.0,194.0" fill="#789bca" filter="url(#bl)" style="mix-blend-mode:multiply"/><polygon points="738.0,-6.0 698.0,54.0 752.0,54.0 778.0,-6.0" fill="#9cafcb" filter="url(#bl2)" style="mix-blend-mode:multiply"/><defs><filter id="bl2" x="-20%" y="-20%" width="140%" height="140%"><feGaussianBlur stdDeviation="2"/></filter></defs><polygon points="776.0,-6.0 750.0,54.0 875.0,131.0 875.0,-6.0" fill="#8a909b" /><line x1="782.0" y1="0" x2="756.0" y2="57.0" stroke="#5e646e" stroke-width="1"/><line x1="806.0" y1="0" x2="783.0" y2="73.6" stroke="#5e646e" stroke-width="1"/><line x1="830.0" y1="0" x2="810.0" y2="90.2" stroke="#5e646e" stroke-width="1"/><line x1="854.0" y1="0" x2="837.0" y2="106.8" stroke="#5e646e" stroke-width="1"/><line x1="878.0" y1="0" x2="864.0" y2="123.4" stroke="#5e646e" stroke-width="1"/><line x1="902.0" y1="0" x2="891.0" y2="140.0" stroke="#5e646e" stroke-width="1"/><line x1="750" y1="54" x2="875" y2="131" stroke="#5e646e" stroke-width="1"/><line x1="776" y1="13" x2="875" y2="62" stroke="#6a707a" stroke-width="1"/></svg>
<div class="a" style="left:10px;top:128px;width:43px;height:146px;background:rgba(32,32,32,0.92);border-radius:4px"></div>
<div class="a" style="left:21px;top:134px;width:21px;height:1px;background:#8a8a8a;"></div>
<div class="a" style="left:21px;top:137px;width:21px;height:1px;background:#8a8a8a;"></div>
<div class="a" style="left:13px;top:146px;width:37px;height:20px;background:#505050;border-radius:3px 3px 0 0"></div>
<div class="a" style="left:13px;top:167px;width:37px;height:20px;background:#46607c;border-radius:0"></div>
<div class="a" style="left:13px;top:188px;width:37px;height:20px;background:#505050;border-radius:0"></div>
<div class="a" style="left:13px;top:209px;width:37px;height:20px;background:#505050;border-radius:0"></div>
<div class="a" style="left:13px;top:230px;width:37px;height:20px;background:#505050;border-radius:0"></div>
<div class="a" style="left:13px;top:251px;width:37px;height:20px;background:#505050;border-radius:0 0 3px 3px"></div>
<svg class="a" style="left:25px;top:149px;" width="14" height="14" viewBox="0 0 14 14"><path d="M3 13 L1 8 Q1 7 2 7.5 L4 9.5 V2 Q4 1 5 1 Q6 1 6 2 V7 V1 Q6 0 7 0 Q8 0 8 1 V7 V1.5 Q8 .5 9 .5 Q10 .5 10 1.5 V7 V3 Q10 2 11 2 Q12 2 12 3 V10 Q12 14 8 14 H5Z" fill="#d2d2d2"/></svg>
<svg class="a" style="left:24px;top:170px;" width="14" height="14" viewBox="0 0 14 14"><path d="M7 0 L9.5 3 H7.8 V6.2 H11 V4.5 L14 7 L11 9.5 V7.8 H7.8 V11 H9.5 L7 14 L4.5 11 H6.2 V7.8 H3 V9.5 L0 7 L3 4.5 V6.2 H6.2 V3 H4.5Z" fill="#d2d2d2"/></svg>
<svg class="a" style="left:24px;top:191px;" width="14" height="14" viewBox="0 0 14 14"><path d="M11.5 4 A6 6 0 0 0 2 4.5 M2.5 10 A6 6 0 0 0 12 9.5" fill="none" stroke="#d2d2d2" stroke-width="1.2"/><path d="M9 2 L12.5 1 L12 5Z M5 12 L1.5 13 L2 9Z" fill="#d2d2d2"/></svg>
<svg class="a" style="left:24px;top:212px;" width="14" height="14" viewBox="0 0 14 14"><rect x=".5" y=".5" width="13" height="13" fill="none" stroke="#d2d2d2" stroke-width="1.1"/><rect x=".5" y="8.5" width="5" height="5" fill="none" stroke="#d2d2d2" stroke-width="1.1"/><path d="M6 8 L11 3 M8 3 H11 V6" fill="none" stroke="#d2d2d2" stroke-width="1.1"/></svg>
<svg class="a" style="left:24px;top:233px;" width="14" height="14" viewBox="0 0 14 14"><path d="M2 1 V13 M12 1 V13 M1 2 H13 M1 12 H13" stroke="#d2d2d2" stroke-width="1" stroke-dasharray="0"/><rect x="0" y="0" width="3" height="3" fill="#d2d2d2"/><rect x="11" y="0" width="3" height="3" fill="#d2d2d2"/><rect x="0" y="11" width="3" height="3" fill="#d2d2d2"/><rect x="11" y="11" width="3" height="3" fill="#d2d2d2"/></svg>
<svg class="a" style="left:24px;top:254px;" width="14" height="14" viewBox="0 0 14 14"><circle cx="7" cy="7" r="5.5" fill="none" stroke="#d2d2d2" stroke-width="1"/><path d="M7 2.5 L8.5 4.5 H7.6 V6.4 H9.5 V5.5 L11.5 7 L9.5 8.5 V7.6 H7.6 V9.5 H8.5 L7 11.5 L5.5 9.5 H6.4 V7.6 H4.5 V8.5 L2.5 7 L4.5 5.5 V6.4 H6.4 V4.5 H5.5Z" fill="#a8a8a8"/><path d="M0 14 L3 14 L0 11Z M14 0 L11 0 L14 3Z" fill="#d2d2d2"/></svg>
<svg class="a" style="left:830px;top:177px;" width="1" height="1" viewBox="0 0 1 1"><path d="M-8 -28 L8 -28 L0.8 -8.5 L-0.8 -8.5Z" fill="#78c83a"/><ellipse cx="0" cy="-28" rx="8" ry="2.5" fill="#9ee060"/><path d="M26.5 -6.5 L26.5 6.5 L8 0.8 L8 -0.8Z" fill="#e05540"/><ellipse cx="26.5" cy="0" rx="2" ry="6.5" fill="#f07060"/><path d="M-30 -5 L-30 5 L-10.5 0.8 L-10.5 -0.8Z" fill="#e4e4e4"/><ellipse cx="-30" cy="0" rx="2" ry="5" fill="#f0f0f0"/><path d="M-8 26 L8 26 L0.8 8.5 L-0.8 8.5Z" fill="#a0a0a0"/><ellipse cx="0" cy="26" rx="8" ry="3.5" fill="#dcdcdc"/><rect x="-6" y="-9" width="12" height="17.5" rx="1" fill="#e4e4e6"/><text x="-3.5" y="-32" font-family="Liberation Sans" font-size="13" fill="#ececec">y</text><text x="29" y="4.5" font-family="Liberation Sans" font-size="13" fill="#ececec">x</text><rect x="27" y="-29" width="8" height="6" fill="#e8e8e8"/><path d="M28.5 -29 V-32 Q31 -35.5 33.5 -32" fill="none" stroke="#e8e8e8" stroke-width="1.3"/></svg>
<div class="a" style="left:784px;top:132px;width:16px;height:1px;background:#6e7580;"></div>
<div class="a" style="left:784px;top:135px;width:16px;height:1px;background:#6e7580;"></div>
<svg class="a" style="left:801px;top:223px;" width="12" height="10" viewBox="0 0 12 10"><path d="M11 0 L1 5 L11 10 M3 5 H11" fill="none" stroke="#d8dde4" stroke-width="1.1"/></svg>
<div class="t" style="left:816px;top:221.42px;font-size:12.5px;color:#d8dde4;font-weight:normal;">Persp</div>
<svg class="a" style="left:8px;top:682px;overflow:hidden" width="876" height="344" viewBox="0 0 876 344"><rect width="876" height="344" fill="#6b625c"/><polygon points="91.0,0.0 696.0,0.0 876.0,319.0 876.0,344.0 0.0,344.0 0.0,123.0" fill="#f1f1f1"/><defs><clipPath id="gfl"><polygon points="91.0,0.0 696.0,0.0 876.0,319.0 876.0,344.0 0.0,344.0 0.0,123.0"/></clipPath></defs><g clip-path="url(#gfl)"><line x1="131.8" y1="-110.5" x2="-611.7" y2="718.9" stroke="#a6a8a6" stroke-width="2.2"/><polygon points="101.0,-78.4 105.2,-78.4 99.0,-71.5 94.8,-71.5" fill="#a6a8a6"/><polygon points="91.3,-67.6 95.5,-67.6 91.9,-63.6 87.7,-63.6" fill="#a6a8a6"/><polygon points="85.0,-60.6 89.2,-60.6 82.4,-53.0 78.2,-53.0" fill="#a6a8a6"/><polygon points="75.4,-49.8 79.6,-49.8 75.6,-45.5 71.4,-45.5" fill="#a6a8a6"/><rect x="78.7" y="-57.6" width="10" height="1.6" fill="#a6a8a6"/><polygon points="67.4,-41.0 71.6,-41.0 64.1,-32.6 59.9,-32.6" fill="#a6a8a6"/><polygon points="55.6,-27.8 59.8,-27.8 55.4,-22.9 51.2,-22.9" fill="#a6a8a6"/><polygon points="48.0,-19.3 52.2,-19.3 43.8,-9.9 39.6,-9.9" fill="#a6a8a6"/><polygon points="36.1,-6.1 40.3,-6.1 35.5,-0.7 31.3,-0.7" fill="#a6a8a6"/><rect x="40.9" y="-15.4" width="10" height="1.6" fill="#a6a8a6"/><polygon points="26.3,4.9 30.5,4.9 21.2,15.3 17.0,15.3" fill="#a6a8a6"/><polygon points="11.7,21.2 15.9,21.2 10.4,27.3 6.2,27.3" fill="#a6a8a6"/><polygon points="2.2,31.8 6.4,31.8 -4.1,43.5 -8.3,43.5" fill="#a6a8a6"/><polygon points="-12.7,48.4 -8.5,48.4 -14.6,55.2 -18.8,55.2" fill="#a6a8a6"/><rect x="-5.9" y="36.8" width="10" height="1.6" fill="#a6a8a6"/><polygon points="-25.1,62.2 -20.9,62.2 -32.7,75.4 -36.9,75.4" fill="#a6a8a6"/><polygon points="-43.7,83.0 -39.5,83.0 -46.5,90.8 -50.7,90.8" fill="#a6a8a6"/><polygon points="-55.9,96.6 -51.7,96.6 -65.2,111.7 -69.4,111.7" fill="#a6a8a6"/><polygon points="-75.1,118.0 -70.9,118.0 -78.8,126.8 -83.0,126.8" fill="#a6a8a6"/><rect x="-65.5" y="103.2" width="10" height="1.6" fill="#a6a8a6"/><polygon points="-91.2,135.9 -87.0,135.9 -102.6,153.3 -106.8,153.3" fill="#a6a8a6"/><polygon points="-115.7,163.3 -111.5,163.3 -120.8,173.6 -125.0,173.6" fill="#a6a8a6"/><polygon points="-131.9,181.4 -127.7,181.4 -145.8,201.6 -150.0,201.6" fill="#a6a8a6"/><polygon points="-157.6,210.0 -153.4,210.0 -164.2,222.0 -168.4,222.0" fill="#a6a8a6"/><rect x="-143.7" y="190.5" width="10" height="1.6" fill="#a6a8a6"/><polygon points="-179.5,234.4 -175.3,234.4 -196.6,258.2 -200.8,258.2" fill="#a6a8a6"/><polygon points="-213.2,272.0 -209.0,272.0 -221.9,286.4 -226.1,286.4" fill="#a6a8a6"/><polygon points="-235.7,297.2 -231.5,297.2 -257.0,325.6 -261.2,325.6" fill="#a6a8a6"/><polygon points="-272.0,337.6 -267.8,337.6 -283.1,354.7 -287.3,354.7" fill="#a6a8a6"/><rect x="-251.1" y="310.3" width="10" height="1.6" fill="#a6a8a6"/><polygon points="-303.3,372.5 -299.1,372.5 -330.1,407.1 -334.3,407.1" fill="#a6a8a6"/><polygon points="-352.5,427.4 -348.3,427.4 -367.3,448.7 -371.5,448.7" fill="#a6a8a6"/><polygon points="-386.0,464.8 -381.8,464.8 -420.3,507.7 -424.5,507.7" fill="#a6a8a6"/><polygon points="-440.9,526.0 -436.7,526.0 -460.4,552.4 -464.6,552.4" fill="#a6a8a6"/><rect x="-407.7" y="485.0" width="10" height="1.6" fill="#a6a8a6"/><line x1="159.7" y1="-110.5" x2="-516.2" y2="718.9" stroke="#dcdcdc" stroke-width="1"/><line x1="187.5" y1="-110.5" x2="-420.8" y2="718.9" stroke="#a6a8a6" stroke-width="2.2"/><polygon points="161.9,-78.4 166.1,-78.4 161.0,-71.5 156.8,-71.5" fill="#a6a8a6"/><polygon points="153.9,-67.6 158.1,-67.6 155.2,-63.6 151.0,-63.6" fill="#a6a8a6"/><polygon points="148.8,-60.6 153.0,-60.6 147.4,-53.0 143.2,-53.0" fill="#a6a8a6"/><polygon points="140.9,-49.8 145.1,-49.8 141.9,-45.5 137.7,-45.5" fill="#a6a8a6"/><rect x="143.1" y="-57.6" width="10" height="1.6" fill="#a6a8a6"/><polygon points="134.4,-41.0 138.6,-41.0 132.4,-32.6 128.2,-32.6" fill="#a6a8a6"/><polygon points="124.7,-27.8 128.9,-27.8 125.3,-22.9 121.1,-22.9" fill="#a6a8a6"/><polygon points="118.5,-19.3 122.7,-19.3 115.8,-9.9 111.6,-9.9" fill="#a6a8a6"/><polygon points="108.8,-6.1 113.0,-6.1 109.1,-0.7 104.9,-0.7" fill="#a6a8a6"/><rect x="112.2" y="-15.4" width="10" height="1.6" fill="#a6a8a6"/><polygon points="100.8,4.9 105.0,4.9 97.4,15.3 93.2,15.3" fill="#a6a8a6"/><polygon points="88.8,21.2 93.0,21.2 88.5,27.3 84.3,27.3" fill="#a6a8a6"/><polygon points="81.0,31.8 85.2,31.8 76.6,43.5 72.4,43.5" fill="#a6a8a6"/><polygon points="68.9,48.4 73.1,48.4 68.1,55.2 63.9,55.2" fill="#a6a8a6"/><rect x="73.9" y="36.8" width="10" height="1.6" fill="#a6a8a6"/><polygon points="58.8,62.2 63.0,62.2 53.2,75.4 49.0,75.4" fill="#a6a8a6"/><polygon points="43.5,83.0 47.7,83.0 42.0,90.8 37.8,90.8" fill="#a6a8a6"/><polygon points="33.5,96.6 37.7,96.6 26.6,111.7 22.4,111.7" fill="#a6a8a6"/><polygon points="17.8,118.0 22.0,118.0 15.5,126.8 11.3,126.8" fill="#a6a8a6"/><rect x="25.1" y="103.2" width="10" height="1.6" fill="#a6a8a6"/><polygon points="4.6,135.9 8.8,135.9 -3.9,153.3 -8.1,153.3" fill="#a6a8a6"/><polygon points="-15.4,163.3 -11.2,163.3 -18.8,173.6 -23.0,173.6" fill="#a6a8a6"/><polygon points="-28.7,181.4 -24.5,181.4 -39.3,201.6 -43.5,201.6" fill="#a6a8a6"/><polygon points="-49.7,210.0 -45.5,210.0 -54.3,222.0 -58.5,222.0" fill="#a6a8a6"/><rect x="-38.9" y="190.5" width="10" height="1.6" fill="#a6a8a6"/><polygon points="-67.6,234.4 -63.4,234.4 -80.9,258.2 -85.1,258.2" fill="#a6a8a6"/><polygon points="-95.2,272.0 -91.0,272.0 -101.5,286.4 -105.7,286.4" fill="#a6a8a6"/><polygon points="-113.6,297.2 -109.4,297.2 -130.3,325.6 -134.5,325.6" fill="#a6a8a6"/><polygon points="-143.3,337.6 -139.1,337.6 -151.6,354.7 -155.8,354.7" fill="#a6a8a6"/><rect x="-126.8" y="310.3" width="10" height="1.6" fill="#a6a8a6"/><polygon points="-168.9,372.5 -164.7,372.5 -190.1,407.1 -194.3,407.1" fill="#a6a8a6"/><polygon points="-209.1,427.4 -204.9,427.4 -220.5,448.7 -224.7,448.7" fill="#a6a8a6"/><polygon points="-236.6,464.8 -232.4,464.8 -263.9,507.7 -268.1,507.7" fill="#a6a8a6"/><polygon points="-281.5,526.0 -277.3,526.0 -296.6,552.4 -300.8,552.4" fill="#a6a8a6"/><rect x="-254.8" y="485.0" width="10" height="1.6" fill="#a6a8a6"/><line x1="215.3" y1="-110.5" x2="-325.4" y2="718.9" stroke="#dcdcdc" stroke-width="1"/><line x1="243.2" y1="-110.5" x2="-230.0" y2="718.9" stroke="#a6a8a6" stroke-width="2.2"/><polygon points="222.8,-78.4 227.0,-78.4 223.0,-71.5 218.8,-71.5" fill="#a6a8a6"/><polygon points="216.6,-67.6 220.8,-67.6 218.5,-63.6 214.3,-63.6" fill="#a6a8a6"/><polygon points="212.6,-60.6 216.8,-60.6 212.5,-53.0 208.3,-53.0" fill="#a6a8a6"/><polygon points="206.5,-49.8 210.7,-49.8 208.2,-45.5 204.0,-45.5" fill="#a6a8a6"/><rect x="207.6" y="-57.6" width="10" height="1.6" fill="#a6a8a6"/><polygon points="201.4,-41.0 205.6,-41.0 200.8,-32.6 196.6,-32.6" fill="#a6a8a6"/><polygon points="193.9,-27.8 198.1,-27.8 195.3,-22.9 191.1,-22.9" fill="#a6a8a6"/><polygon points="189.0,-19.3 193.2,-19.3 187.9,-9.9 183.7,-9.9" fill="#a6a8a6"/><polygon points="181.5,-6.1 185.7,-6.1 182.6,-0.7 178.4,-0.7" fill="#a6a8a6"/><rect x="183.5" y="-15.4" width="10" height="1.6" fill="#a6a8a6"/><polygon points="175.3,4.9 179.5,4.9 173.5,15.3 169.3,15.3" fill="#a6a8a6"/><polygon points="165.9,21.2 170.1,21.2 166.7,27.3 162.5,27.3" fill="#a6a8a6"/><polygon points="159.9,31.8 164.1,31.8 157.4,43.5 153.2,43.5" fill="#a6a8a6"/><polygon points="150.4,48.4 154.6,48.4 150.8,55.2 146.6,55.2" fill="#a6a8a6"/><rect x="153.7" y="36.8" width="10" height="1.6" fill="#a6a8a6"/><polygon points="142.6,62.2 146.8,62.2 139.2,75.4 135.0,75.4" fill="#a6a8a6"/><polygon points="130.7,83.0 134.9,83.0 130.4,90.8 126.2,90.8" fill="#a6a8a6"/><polygon points="122.9,96.6 127.1,96.6 118.5,111.7 114.3,111.7" fill="#a6a8a6"/><polygon points="110.7,118.0 114.9,118.0 109.9,126.8 105.7,126.8" fill="#a6a8a6"/><rect x="115.8" y="103.2" width="10" height="1.6" fill="#a6a8a6"/><polygon points="100.5,135.9 104.7,135.9 94.8,153.3 90.6,153.3" fill="#a6a8a6"/><polygon points="84.9,163.3 89.1,163.3 83.2,173.6 79.0,173.6" fill="#a6a8a6"/><polygon points="74.6,181.4 78.8,181.4 67.2,201.6 63.0,201.6" fill="#a6a8a6"/><polygon points="58.2,210.0 62.4,210.0 55.6,222.0 51.4,222.0" fill="#a6a8a6"/><rect x="66.0" y="190.5" width="10" height="1.6" fill="#a6a8a6"/><polygon points="44.3,234.4 48.5,234.4 34.9,258.2 30.7,258.2" fill="#a6a8a6"/><polygon points="22.8,272.0 27.0,272.0 18.9,286.4 14.7,286.4" fill="#a6a8a6"/><polygon points="8.5,297.2 12.7,297.2 -3.5,325.6 -7.7,325.6" fill="#a6a8a6"/><polygon points="-14.6,337.6 -10.4,337.6 -20.1,354.7 -24.3,354.7" fill="#a6a8a6"/><rect x="-2.4" y="310.3" width="10" height="1.6" fill="#a6a8a6"/><polygon points="-34.5,372.5 -30.3,372.5 -50.0,407.1 -54.2,407.1" fill="#a6a8a6"/><polygon points="-65.8,427.4 -61.6,427.4 -73.7,448.7 -77.9,448.7" fill="#a6a8a6"/><polygon points="-87.1,464.8 -82.9,464.8 -107.4,507.7 -111.6,507.7" fill="#a6a8a6"/><polygon points="-122.1,526.0 -117.9,526.0 -132.9,552.4 -137.1,552.4" fill="#a6a8a6"/><rect x="-102.0" y="485.0" width="10" height="1.6" fill="#a6a8a6"/><line x1="271.0" y1="-110.5" x2="-134.5" y2="718.9" stroke="#dcdcdc" stroke-width="1"/><line x1="298.8" y1="-110.5" x2="-39.1" y2="718.9" stroke="#a6a8a6" stroke-width="2.2"/><polygon points="283.7,-78.4 287.9,-78.4 285.0,-71.5 280.8,-71.5" fill="#a6a8a6"/><polygon points="279.2,-67.6 283.4,-67.6 281.8,-63.6 277.6,-63.6" fill="#a6a8a6"/><polygon points="276.4,-60.6 280.6,-60.6 277.5,-53.0 273.3,-53.0" fill="#a6a8a6"/><polygon points="272.0,-49.8 276.2,-49.8 274.4,-45.5 270.2,-45.5" fill="#a6a8a6"/><rect x="272.0" y="-57.6" width="10" height="1.6" fill="#a6a8a6"/><polygon points="268.4,-41.0 272.6,-41.0 269.2,-32.6 265.0,-32.6" fill="#a6a8a6"/><polygon points="263.0,-27.8 267.2,-27.8 265.2,-22.9 261.0,-22.9" fill="#a6a8a6"/><polygon points="259.6,-19.3 263.8,-19.3 260.0,-9.9 255.8,-9.9" fill="#a6a8a6"/><polygon points="254.2,-6.1 258.4,-6.1 256.2,-0.7 252.0,-0.7" fill="#a6a8a6"/><rect x="254.8" y="-15.4" width="10" height="1.6" fill="#a6a8a6"/><polygon points="249.7,4.9 253.9,4.9 249.7,15.3 245.5,15.3" fill="#a6a8a6"/><polygon points="243.1,21.2 247.3,21.2 244.8,27.3 240.6,27.3" fill="#a6a8a6"/><polygon points="238.7,31.8 242.9,31.8 238.2,43.5 234.0,43.5" fill="#a6a8a6"/><polygon points="232.0,48.4 236.2,48.4 233.4,55.2 229.2,55.2" fill="#a6a8a6"/><rect x="233.5" y="36.8" width="10" height="1.6" fill="#a6a8a6"/><polygon points="226.4,62.2 230.6,62.2 225.2,75.4 221.0,75.4" fill="#a6a8a6"/><polygon points="217.9,83.0 222.1,83.0 218.9,90.8 214.7,90.8" fill="#a6a8a6"/><polygon points="212.3,96.6 216.5,96.6 210.4,111.7 206.2,111.7" fill="#a6a8a6"/><polygon points="203.6,118.0 207.8,118.0 204.2,126.8 200.0,126.8" fill="#a6a8a6"/><rect x="206.4" y="103.2" width="10" height="1.6" fill="#a6a8a6"/><polygon points="196.3,135.9 200.5,135.9 193.4,153.3 189.2,153.3" fill="#a6a8a6"/><polygon points="185.2,163.3 189.4,163.3 185.1,173.6 180.9,173.6" fill="#a6a8a6"/><polygon points="177.8,181.4 182.0,181.4 173.8,201.6 169.6,201.6" fill="#a6a8a6"/><polygon points="166.1,210.0 170.3,210.0 165.4,222.0 161.2,222.0" fill="#a6a8a6"/><rect x="170.8" y="190.5" width="10" height="1.6" fill="#a6a8a6"/><polygon points="156.2,234.4 160.4,234.4 150.7,258.2 146.5,258.2" fill="#a6a8a6"/><polygon points="140.9,272.0 145.1,272.0 139.2,286.4 135.0,286.4" fill="#a6a8a6"/><polygon points="130.6,297.2 134.8,297.2 123.2,325.6 119.0,325.6" fill="#a6a8a6"/><polygon points="114.1,337.6 118.3,337.6 111.4,354.7 107.2,354.7" fill="#a6a8a6"/><rect x="122.0" y="310.3" width="10" height="1.6" fill="#a6a8a6"/><polygon points="99.9,372.5 104.1,372.5 90.0,407.1 85.8,407.1" fill="#a6a8a6"/><polygon points="77.5,427.4 81.7,427.4 73.1,448.7 68.9,448.7" fill="#a6a8a6"/><polygon points="62.3,464.8 66.5,464.8 49.0,507.7 44.8,507.7" fill="#a6a8a6"/><polygon points="37.3,526.0 41.5,526.0 30.8,552.4 26.6,552.4" fill="#a6a8a6"/><rect x="50.9" y="485.0" width="10" height="1.6" fill="#a6a8a6"/><line x1="326.7" y1="-110.5" x2="56.3" y2="718.9" stroke="#dcdcdc" stroke-width="1"/><line x1="354.5" y1="-110.5" x2="151.7" y2="718.9" stroke="#a6a8a6" stroke-width="2.2"/><polygon points="344.6,-78.4 348.8,-78.4 347.1,-71.5 342.9,-71.5" fill="#a6a8a6"/><polygon points="341.9,-67.6 346.1,-67.6 345.1,-63.6 340.9,-63.6" fill="#a6a8a6"/><polygon points="340.2,-60.6 344.4,-60.6 342.5,-53.0 338.3,-53.0" fill="#a6a8a6"/><polygon points="337.6,-49.8 341.8,-49.8 340.7,-45.5 336.5,-45.5" fill="#a6a8a6"/><rect x="336.4" y="-57.6" width="10" height="1.6" fill="#a6a8a6"/><polygon points="335.4,-41.0 339.6,-41.0 337.5,-32.6 333.3,-32.6" fill="#a6a8a6"/><polygon points="332.2,-27.8 336.4,-27.8 335.2,-22.9 331.0,-22.9" fill="#a6a8a6"/><polygon points="330.1,-19.3 334.3,-19.3 332.0,-9.9 327.8,-9.9" fill="#a6a8a6"/><polygon points="326.9,-6.1 331.1,-6.1 329.8,-0.7 325.6,-0.7" fill="#a6a8a6"/><rect x="326.1" y="-15.4" width="10" height="1.6" fill="#a6a8a6"/><polygon points="324.2,4.9 328.4,4.9 325.9,15.3 321.7,15.3" fill="#a6a8a6"/><polygon points="320.2,21.2 324.4,21.2 322.9,27.3 318.7,27.3" fill="#a6a8a6"/><polygon points="317.6,31.8 321.8,31.8 318.9,43.5 314.7,43.5" fill="#a6a8a6"/><polygon points="313.6,48.4 317.8,48.4 316.1,55.2 311.9,55.2" fill="#a6a8a6"/><rect x="313.3" y="36.8" width="10" height="1.6" fill="#a6a8a6"/><polygon points="310.2,62.2 314.4,62.2 311.1,75.4 306.9,75.4" fill="#a6a8a6"/><polygon points="305.1,83.0 309.3,83.0 307.4,90.8 303.2,90.8" fill="#a6a8a6"/><polygon points="301.8,96.6 306.0,96.6 302.3,111.7 298.1,111.7" fill="#a6a8a6"/><polygon points="296.5,118.0 300.7,118.0 298.6,126.8 294.4,126.8" fill="#a6a8a6"/><rect x="297.0" y="103.2" width="10" height="1.6" fill="#a6a8a6"/><polygon points="292.1,135.9 296.3,135.9 292.1,153.3 287.9,153.3" fill="#a6a8a6"/><polygon points="285.5,163.3 289.7,163.3 287.1,173.6 282.9,173.6" fill="#a6a8a6"/><polygon points="281.0,181.4 285.2,181.4 280.3,201.6 276.1,201.6" fill="#a6a8a6"/><polygon points="274.0,210.0 278.2,210.0 275.3,222.0 271.1,222.0" fill="#a6a8a6"/><rect x="275.7" y="190.5" width="10" height="1.6" fill="#a6a8a6"/><polygon points="268.1,234.4 272.3,234.4 266.4,258.2 262.2,258.2" fill="#a6a8a6"/><polygon points="258.9,272.0 263.1,272.0 259.6,286.4 255.4,286.4" fill="#a6a8a6"/><polygon points="252.7,297.2 256.9,297.2 250.0,325.6 245.8,325.6" fill="#a6a8a6"/><polygon points="242.8,337.6 247.0,337.6 242.9,354.7 238.7,354.7" fill="#a6a8a6"/><rect x="246.4" y="310.3" width="10" height="1.6" fill="#a6a8a6"/><polygon points="234.3,372.5 238.5,372.5 230.0,407.1 225.8,407.1" fill="#a6a8a6"/><polygon points="220.9,427.4 225.1,427.4 219.9,448.7 215.7,448.7" fill="#a6a8a6"/><polygon points="211.7,464.8 215.9,464.8 205.4,507.7 201.2,507.7" fill="#a6a8a6"/><polygon points="196.8,526.0 201.0,526.0 194.5,552.4 190.3,552.4" fill="#a6a8a6"/><rect x="203.7" y="485.0" width="10" height="1.6" fill="#a6a8a6"/><line x1="382.3" y1="-110.5" x2="247.2" y2="718.9" stroke="#dcdcdc" stroke-width="1"/><line x1="410.2" y1="-110.5" x2="342.6" y2="718.9" stroke="#a6a8a6" stroke-width="2.2"/><polygon points="405.5,-78.4 409.7,-78.4 409.1,-71.5 404.9,-71.5" fill="#a6a8a6"/><polygon points="404.6,-67.6 408.8,-67.6 408.4,-63.6 404.2,-63.6" fill="#a6a8a6"/><polygon points="404.0,-60.6 408.2,-60.6 407.6,-53.0 403.4,-53.0" fill="#a6a8a6"/><polygon points="403.1,-49.8 407.3,-49.8 407.0,-45.5 402.8,-45.5" fill="#a6a8a6"/><rect x="400.8" y="-57.6" width="10" height="1.6" fill="#a6a8a6"/><polygon points="402.4,-41.0 406.6,-41.0 405.9,-32.6 401.7,-32.6" fill="#a6a8a6"/><polygon points="401.3,-27.8 405.5,-27.8 405.1,-22.9 400.9,-22.9" fill="#a6a8a6"/><polygon points="400.6,-19.3 404.8,-19.3 404.1,-9.9 399.9,-9.9" fill="#a6a8a6"/><polygon points="399.6,-6.1 403.8,-6.1 403.3,-0.7 399.1,-0.7" fill="#a6a8a6"/><rect x="397.4" y="-15.4" width="10" height="1.6" fill="#a6a8a6"/><polygon points="398.7,4.9 402.9,4.9 402.0,15.3 397.8,15.3" fill="#a6a8a6"/><polygon points="397.3,21.2 401.5,21.2 401.0,27.3 396.8,27.3" fill="#a6a8a6"/><polygon points="396.5,31.8 400.7,31.8 399.7,43.5 395.5,43.5" fill="#a6a8a6"/><polygon points="395.1,48.4 399.3,48.4 398.8,55.2 394.6,55.2" fill="#a6a8a6"/><rect x="393.1" y="36.8" width="10" height="1.6" fill="#a6a8a6"/><polygon points="394.0,62.2 398.2,62.2 397.1,75.4 392.9,75.4" fill="#a6a8a6"/><polygon points="392.3,83.0 396.5,83.0 395.9,90.8 391.7,90.8" fill="#a6a8a6"/><polygon points="391.2,96.6 395.4,96.6 394.2,111.7 390.0,111.7" fill="#a6a8a6"/><polygon points="389.4,118.0 393.6,118.0 392.9,126.8 388.7,126.8" fill="#a6a8a6"/><rect x="387.7" y="103.2" width="10" height="1.6" fill="#a6a8a6"/><polygon points="388.0,135.9 392.2,135.9 390.8,153.3 386.6,153.3" fill="#a6a8a6"/><polygon points="385.8,163.3 390.0,163.3 389.1,173.6 384.9,173.6" fill="#a6a8a6"/><polygon points="384.3,181.4 388.5,181.4 386.8,201.6 382.6,201.6" fill="#a6a8a6"/><polygon points="381.9,210.0 386.1,210.0 385.2,222.0 381.0,222.0" fill="#a6a8a6"/><rect x="380.6" y="190.5" width="10" height="1.6" fill="#a6a8a6"/><polygon points="380.0,234.4 384.2,234.4 382.2,258.2 378.0,258.2" fill="#a6a8a6"/><polygon points="376.9,272.0 381.1,272.0 379.9,286.4 375.7,286.4" fill="#a6a8a6"/><polygon points="374.8,297.2 379.0,297.2 376.7,325.6 372.5,325.6" fill="#a6a8a6"/><polygon points="371.5,337.6 375.7,337.6 374.4,354.7 370.2,354.7" fill="#a6a8a6"/><rect x="370.8" y="310.3" width="10" height="1.6" fill="#a6a8a6"/><polygon points="368.7,372.5 372.9,372.5 370.1,407.1 365.9,407.1" fill="#a6a8a6"/><polygon points="364.2,427.4 368.4,427.4 366.7,448.7 362.5,448.7" fill="#a6a8a6"/><polygon points="361.2,464.8 365.4,464.8 361.9,507.7 357.7,507.7" fill="#a6a8a6"/><polygon points="356.2,526.0 360.4,526.0 358.2,552.4 354.0,552.4" fill="#a6a8a6"/><rect x="356.6" y="485.0" width="10" height="1.6" fill="#a6a8a6"/><line x1="438.0" y1="-110.5" x2="438.0" y2="718.9" stroke="#dcdcdc" stroke-width="1"/><line x1="465.8" y1="-110.5" x2="533.4" y2="718.9" stroke="#a6a8a6" stroke-width="2.2"/><polygon points="466.3,-78.4 470.5,-78.4 471.1,-71.5 466.9,-71.5" fill="#a6a8a6"/><polygon points="467.2,-67.6 471.4,-67.6 471.8,-63.6 467.6,-63.6" fill="#a6a8a6"/><polygon points="467.8,-60.6 472.0,-60.6 472.6,-53.0 468.4,-53.0" fill="#a6a8a6"/><polygon points="468.7,-49.8 472.9,-49.8 473.2,-45.5 469.0,-45.5" fill="#a6a8a6"/><rect x="465.2" y="-57.6" width="10" height="1.6" fill="#a6a8a6"/><polygon points="469.4,-41.0 473.6,-41.0 474.3,-32.6 470.1,-32.6" fill="#a6a8a6"/><polygon points="470.5,-27.8 474.7,-27.8 475.1,-22.9 470.9,-22.9" fill="#a6a8a6"/><polygon points="471.2,-19.3 475.4,-19.3 476.1,-9.9 471.9,-9.9" fill="#a6a8a6"/><polygon points="472.2,-6.1 476.4,-6.1 476.9,-0.7 472.7,-0.7" fill="#a6a8a6"/><rect x="468.6" y="-15.4" width="10" height="1.6" fill="#a6a8a6"/><polygon points="473.1,4.9 477.3,4.9 478.2,15.3 474.0,15.3" fill="#a6a8a6"/><polygon points="474.5,21.2 478.7,21.2 479.2,27.3 475.0,27.3" fill="#a6a8a6"/><polygon points="475.3,31.8 479.5,31.8 480.5,43.5 476.3,43.5" fill="#a6a8a6"/><polygon points="476.7,48.4 480.9,48.4 481.4,55.2 477.2,55.2" fill="#a6a8a6"/><rect x="472.9" y="36.8" width="10" height="1.6" fill="#a6a8a6"/><polygon points="477.8,62.2 482.0,62.2 483.1,75.4 478.9,75.4" fill="#a6a8a6"/><polygon points="479.5,83.0 483.7,83.0 484.3,90.8 480.1,90.8" fill="#a6a8a6"/><polygon points="480.6,96.6 484.8,96.6 486.0,111.7 481.8,111.7" fill="#a6a8a6"/><polygon points="482.4,118.0 486.6,118.0 487.3,126.8 483.1,126.8" fill="#a6a8a6"/><rect x="478.3" y="103.2" width="10" height="1.6" fill="#a6a8a6"/><polygon points="483.8,135.9 488.0,135.9 489.4,153.3 485.2,153.3" fill="#a6a8a6"/><polygon points="486.0,163.3 490.2,163.3 491.1,173.6 486.9,173.6" fill="#a6a8a6"/><polygon points="487.5,181.4 491.7,181.4 493.4,201.6 489.2,201.6" fill="#a6a8a6"/><polygon points="489.9,210.0 494.1,210.0 495.0,222.0 490.8,222.0" fill="#a6a8a6"/><rect x="485.4" y="190.5" width="10" height="1.6" fill="#a6a8a6"/><polygon points="491.8,234.4 496.0,234.4 498.0,258.2 493.8,258.2" fill="#a6a8a6"/><polygon points="494.9,272.0 499.1,272.0 500.3,286.4 496.1,286.4" fill="#a6a8a6"/><polygon points="497.0,297.2 501.2,297.2 503.5,325.6 499.3,325.6" fill="#a6a8a6"/><polygon points="500.3,337.6 504.5,337.6 505.8,354.7 501.6,354.7" fill="#a6a8a6"/><rect x="495.2" y="310.3" width="10" height="1.6" fill="#a6a8a6"/><polygon points="503.1,372.5 507.3,372.5 510.1,407.1 505.9,407.1" fill="#a6a8a6"/><polygon points="507.6,427.4 511.8,427.4 513.5,448.7 509.3,448.7" fill="#a6a8a6"/><polygon points="510.6,464.8 514.8,464.8 518.3,507.7 514.1,507.7" fill="#a6a8a6"/><polygon points="515.6,526.0 519.8,526.0 522.0,552.4 517.8,552.4" fill="#a6a8a6"/><rect x="509.4" y="485.0" width="10" height="1.6" fill="#a6a8a6"/><line x1="493.7" y1="-110.5" x2="628.8" y2="718.9" stroke="#dcdcdc" stroke-width="1"/><line x1="521.5" y1="-110.5" x2="724.3" y2="718.9" stroke="#a6a8a6" stroke-width="2.2"/><polygon points="527.2,-78.4 531.4,-78.4 533.1,-71.5 528.9,-71.5" fill="#a6a8a6"/><polygon points="529.9,-67.6 534.1,-67.6 535.1,-63.6 530.9,-63.6" fill="#a6a8a6"/><polygon points="531.6,-60.6 535.8,-60.6 537.7,-53.0 533.5,-53.0" fill="#a6a8a6"/><polygon points="534.2,-49.8 538.4,-49.8 539.5,-45.5 535.3,-45.5" fill="#a6a8a6"/><rect x="529.6" y="-57.6" width="10" height="1.6" fill="#a6a8a6"/><polygon points="536.4,-41.0 540.6,-41.0 542.7,-32.6 538.5,-32.6" fill="#a6a8a6"/><polygon points="539.6,-27.8 543.8,-27.8 545.0,-22.9 540.8,-22.9" fill="#a6a8a6"/><polygon points="541.7,-19.3 545.9,-19.3 548.2,-9.9 544.0,-9.9" fill="#a6a8a6"/><polygon points="544.9,-6.1 549.1,-6.1 550.4,-0.7 546.2,-0.7" fill="#a6a8a6"/><rect x="539.9" y="-15.4" width="10" height="1.6" fill="#a6a8a6"/><polygon points="547.6,4.9 551.8,4.9 554.3,15.3 550.1,15.3" fill="#a6a8a6"/><polygon points="551.6,21.2 555.8,21.2 557.3,27.3 553.1,27.3" fill="#a6a8a6"/><polygon points="554.2,31.8 558.4,31.8 561.3,43.5 557.1,43.5" fill="#a6a8a6"/><polygon points="558.2,48.4 562.4,48.4 564.1,55.2 559.9,55.2" fill="#a6a8a6"/><rect x="552.7" y="36.8" width="10" height="1.6" fill="#a6a8a6"/><polygon points="561.6,62.2 565.8,62.2 569.1,75.4 564.9,75.4" fill="#a6a8a6"/><polygon points="566.7,83.0 570.9,83.0 572.8,90.8 568.6,90.8" fill="#a6a8a6"/><polygon points="570.0,96.6 574.2,96.6 577.9,111.7 573.7,111.7" fill="#a6a8a6"/><polygon points="575.3,118.0 579.5,118.0 581.6,126.8 577.4,126.8" fill="#a6a8a6"/><rect x="569.0" y="103.2" width="10" height="1.6" fill="#a6a8a6"/><polygon points="579.7,135.9 583.9,135.9 588.1,153.3 583.9,153.3" fill="#a6a8a6"/><polygon points="586.3,163.3 590.5,163.3 593.1,173.6 588.9,173.6" fill="#a6a8a6"/><polygon points="590.8,181.4 595.0,181.4 599.9,201.6 595.7,201.6" fill="#a6a8a6"/><polygon points="597.8,210.0 602.0,210.0 604.9,222.0 600.7,222.0" fill="#a6a8a6"/><rect x="590.3" y="190.5" width="10" height="1.6" fill="#a6a8a6"/><polygon points="603.7,234.4 607.9,234.4 613.8,258.2 609.6,258.2" fill="#a6a8a6"/><polygon points="612.9,272.0 617.1,272.0 620.6,286.4 616.4,286.4" fill="#a6a8a6"/><polygon points="619.1,297.2 623.3,297.2 630.2,325.6 626.0,325.6" fill="#a6a8a6"/><polygon points="629.0,337.6 633.2,337.6 637.3,354.7 633.1,354.7" fill="#a6a8a6"/><rect x="619.6" y="310.3" width="10" height="1.6" fill="#a6a8a6"/><polygon points="637.5,372.5 641.7,372.5 650.2,407.1 646.0,407.1" fill="#a6a8a6"/><polygon points="650.9,427.4 655.1,427.4 660.3,448.7 656.1,448.7" fill="#a6a8a6"/><polygon points="660.1,464.8 664.3,464.8 674.8,507.7 670.6,507.7" fill="#a6a8a6"/><polygon points="675.0,526.0 679.2,526.0 685.7,552.4 681.5,552.4" fill="#a6a8a6"/><rect x="662.3" y="485.0" width="10" height="1.6" fill="#a6a8a6"/><line x1="549.3" y1="-110.5" x2="819.7" y2="718.9" stroke="#dcdcdc" stroke-width="1"/><line x1="577.2" y1="-110.5" x2="915.1" y2="718.9" stroke="#a6a8a6" stroke-width="2.2"/><polygon points="588.1,-78.4 592.3,-78.4 595.2,-71.5 591.0,-71.5" fill="#a6a8a6"/><polygon points="592.6,-67.6 596.8,-67.6 598.4,-63.6 594.2,-63.6" fill="#a6a8a6"/><polygon points="595.4,-60.6 599.6,-60.6 602.7,-53.0 598.5,-53.0" fill="#a6a8a6"/><polygon points="599.8,-49.8 604.0,-49.8 605.8,-45.5 601.6,-45.5" fill="#a6a8a6"/><rect x="594.0" y="-57.6" width="10" height="1.6" fill="#a6a8a6"/><polygon points="603.4,-41.0 607.6,-41.0 611.0,-32.6 606.8,-32.6" fill="#a6a8a6"/><polygon points="608.8,-27.8 613.0,-27.8 615.0,-22.9 610.8,-22.9" fill="#a6a8a6"/><polygon points="612.2,-19.3 616.4,-19.3 620.2,-9.9 616.0,-9.9" fill="#a6a8a6"/><polygon points="617.6,-6.1 621.8,-6.1 624.0,-0.7 619.8,-0.7" fill="#a6a8a6"/><rect x="611.2" y="-15.4" width="10" height="1.6" fill="#a6a8a6"/><polygon points="622.1,4.9 626.3,4.9 630.5,15.3 626.3,15.3" fill="#a6a8a6"/><polygon points="628.7,21.2 632.9,21.2 635.4,27.3 631.2,27.3" fill="#a6a8a6"/><polygon points="633.1,31.8 637.3,31.8 642.0,43.5 637.8,43.5" fill="#a6a8a6"/><polygon points="639.8,48.4 644.0,48.4 646.8,55.2 642.6,55.2" fill="#a6a8a6"/><rect x="632.5" y="36.8" width="10" height="1.6" fill="#a6a8a6"/><polygon points="645.4,62.2 649.6,62.2 655.0,75.4 650.8,75.4" fill="#a6a8a6"/><polygon points="653.9,83.0 658.1,83.0 661.3,90.8 657.1,90.8" fill="#a6a8a6"/><polygon points="659.5,96.6 663.7,96.6 669.8,111.7 665.6,111.7" fill="#a6a8a6"/><polygon points="668.2,118.0 672.4,118.0 676.0,126.8 671.8,126.8" fill="#a6a8a6"/><rect x="659.6" y="103.2" width="10" height="1.6" fill="#a6a8a6"/><polygon points="675.5,135.9 679.7,135.9 686.8,153.3 682.6,153.3" fill="#a6a8a6"/><polygon points="686.6,163.3 690.8,163.3 695.1,173.6 690.9,173.6" fill="#a6a8a6"/><polygon points="694.0,181.4 698.2,181.4 706.4,201.6 702.2,201.6" fill="#a6a8a6"/><polygon points="705.7,210.0 709.9,210.0 714.8,222.0 710.6,222.0" fill="#a6a8a6"/><rect x="695.2" y="190.5" width="10" height="1.6" fill="#a6a8a6"/><polygon points="715.6,234.4 719.8,234.4 729.5,258.2 725.3,258.2" fill="#a6a8a6"/><polygon points="730.9,272.0 735.1,272.0 741.0,286.4 736.8,286.4" fill="#a6a8a6"/><polygon points="741.2,297.2 745.4,297.2 757.0,325.6 752.8,325.6" fill="#a6a8a6"/><polygon points="757.7,337.6 761.9,337.6 768.8,354.7 764.6,354.7" fill="#a6a8a6"/><rect x="744.0" y="310.3" width="10" height="1.6" fill="#a6a8a6"/><polygon points="771.9,372.5 776.1,372.5 790.2,407.1 786.0,407.1" fill="#a6a8a6"/><polygon points="794.3,427.4 798.5,427.4 807.1,448.7 802.9,448.7" fill="#a6a8a6"/><polygon points="809.5,464.8 813.7,464.8 831.2,507.7 827.0,507.7" fill="#a6a8a6"/><polygon points="834.5,526.0 838.7,526.0 849.4,552.4 845.2,552.4" fill="#a6a8a6"/><rect x="815.1" y="485.0" width="10" height="1.6" fill="#a6a8a6"/><line x1="605.0" y1="-110.5" x2="1010.5" y2="718.9" stroke="#dcdcdc" stroke-width="1"/><line x1="632.8" y1="-110.5" x2="1106.0" y2="718.9" stroke="#a6a8a6" stroke-width="2.2"/><polygon points="649.0,-78.4 653.2,-78.4 657.2,-71.5 653.0,-71.5" fill="#a6a8a6"/><polygon points="655.2,-67.6 659.4,-67.6 661.7,-63.6 657.5,-63.6" fill="#a6a8a6"/><polygon points="659.2,-60.6 663.4,-60.6 667.7,-53.0 663.5,-53.0" fill="#a6a8a6"/><polygon points="665.3,-49.8 669.5,-49.8 672.0,-45.5 667.8,-45.5" fill="#a6a8a6"/><rect x="658.4" y="-57.6" width="10" height="1.6" fill="#a6a8a6"/><polygon points="670.4,-41.0 674.6,-41.0 679.4,-32.6 675.2,-32.6" fill="#a6a8a6"/><polygon points="677.9,-27.8 682.1,-27.8 684.9,-22.9 680.7,-22.9" fill="#a6a8a6"/><polygon points="682.8,-19.3 687.0,-19.3 692.3,-9.9 688.1,-9.9" fill="#a6a8a6"/><polygon points="690.3,-6.1 694.5,-6.1 697.6,-0.7 693.4,-0.7" fill="#a6a8a6"/><rect x="682.5" y="-15.4" width="10" height="1.6" fill="#a6a8a6"/><polygon points="696.5,4.9 700.7,4.9 706.7,15.3 702.5,15.3" fill="#a6a8a6"/><polygon points="705.9,21.2 710.1,21.2 713.5,27.3 709.3,27.3" fill="#a6a8a6"/><polygon points="711.9,31.8 716.1,31.8 722.8,43.5 718.6,43.5" fill="#a6a8a6"/><polygon points="721.4,48.4 725.6,48.4 729.4,55.2 725.2,55.2" fill="#a6a8a6"/><rect x="712.3" y="36.8" width="10" height="1.6" fill="#a6a8a6"/><polygon points="729.2,62.2 733.4,62.2 741.0,75.4 736.8,75.4" fill="#a6a8a6"/><polygon points="741.1,83.0 745.3,83.0 749.8,90.8 745.6,90.8" fill="#a6a8a6"/><polygon points="748.9,96.6 753.1,96.6 761.7,111.7 757.5,111.7" fill="#a6a8a6"/><polygon points="761.1,118.0 765.3,118.0 770.3,126.8 766.1,126.8" fill="#a6a8a6"/><rect x="750.2" y="103.2" width="10" height="1.6" fill="#a6a8a6"/><polygon points="771.3,135.9 775.5,135.9 785.4,153.3 781.2,153.3" fill="#a6a8a6"/><polygon points="786.9,163.3 791.1,163.3 797.0,173.6 792.8,173.6" fill="#a6a8a6"/><polygon points="797.2,181.4 801.4,181.4 813.0,201.6 808.8,201.6" fill="#a6a8a6"/><polygon points="813.6,210.0 817.8,210.0 824.6,222.0 820.4,222.0" fill="#a6a8a6"/><rect x="800.0" y="190.5" width="10" height="1.6" fill="#a6a8a6"/><polygon points="827.5,234.4 831.7,234.4 845.3,258.2 841.1,258.2" fill="#a6a8a6"/><polygon points="849.0,272.0 853.2,272.0 861.3,286.4 857.1,286.4" fill="#a6a8a6"/><polygon points="863.3,297.2 867.5,297.2 883.7,325.6 879.5,325.6" fill="#a6a8a6"/><polygon points="886.4,337.6 890.6,337.6 900.3,354.7 896.1,354.7" fill="#a6a8a6"/><rect x="868.4" y="310.3" width="10" height="1.6" fill="#a6a8a6"/><polygon points="906.3,372.5 910.5,372.5 930.2,407.1 926.0,407.1" fill="#a6a8a6"/><polygon points="937.6,427.4 941.8,427.4 953.9,448.7 949.7,448.7" fill="#a6a8a6"/><polygon points="958.9,464.8 963.1,464.8 987.6,507.7 983.4,507.7" fill="#a6a8a6"/><polygon points="993.9,526.0 998.1,526.0 1013.1,552.4 1008.9,552.4" fill="#a6a8a6"/><rect x="968.0" y="485.0" width="10" height="1.6" fill="#a6a8a6"/><line x1="660.7" y1="-110.5" x2="1201.4" y2="718.9" stroke="#dcdcdc" stroke-width="1"/><line x1="688.5" y1="-110.5" x2="1296.8" y2="718.9" stroke="#a6a8a6" stroke-width="2.2"/><polygon points="709.9,-78.4 714.1,-78.4 719.2,-71.5 715.0,-71.5" fill="#a6a8a6"/><polygon points="717.9,-67.6 722.1,-67.6 725.0,-63.6 720.8,-63.6" fill="#a6a8a6"/><polygon points="723.0,-60.6 727.2,-60.6 732.8,-53.0 728.6,-53.0" fill="#a6a8a6"/><polygon points="730.9,-49.8 735.1,-49.8 738.3,-45.5 734.1,-45.5" fill="#a6a8a6"/><rect x="722.9" y="-57.6" width="10" height="1.6" fill="#a6a8a6"/><polygon points="737.4,-41.0 741.6,-41.0 747.8,-32.6 743.6,-32.6" fill="#a6a8a6"/><polygon points="747.1,-27.8 751.3,-27.8 754.9,-22.9 750.7,-22.9" fill="#a6a8a6"/><polygon points="753.3,-19.3 757.5,-19.3 764.4,-9.9 760.2,-9.9" fill="#a6a8a6"/><polygon points="763.0,-6.1 767.2,-6.1 771.1,-0.7 766.9,-0.7" fill="#a6a8a6"/><rect x="753.8" y="-15.4" width="10" height="1.6" fill="#a6a8a6"/><polygon points="771.0,4.9 775.2,4.9 782.8,15.3 778.6,15.3" fill="#a6a8a6"/><polygon points="783.0,21.2 787.2,21.2 791.7,27.3 787.5,27.3" fill="#a6a8a6"/><polygon points="790.8,31.8 795.0,31.8 803.6,43.5 799.4,43.5" fill="#a6a8a6"/><polygon points="802.9,48.4 807.1,48.4 812.1,55.2 807.9,55.2" fill="#a6a8a6"/><rect x="792.1" y="36.8" width="10" height="1.6" fill="#a6a8a6"/><polygon points="813.0,62.2 817.2,62.2 827.0,75.4 822.8,75.4" fill="#a6a8a6"/><polygon points="828.3,83.0 832.5,83.0 838.2,90.8 834.0,90.8" fill="#a6a8a6"/><polygon points="838.3,96.6 842.5,96.6 853.6,111.7 849.4,111.7" fill="#a6a8a6"/><polygon points="854.0,118.0 858.2,118.0 864.7,126.8 860.5,126.8" fill="#a6a8a6"/><rect x="840.9" y="103.2" width="10" height="1.6" fill="#a6a8a6"/><polygon points="867.2,135.9 871.4,135.9 884.1,153.3 879.9,153.3" fill="#a6a8a6"/><polygon points="887.2,163.3 891.4,163.3 899.0,173.6 894.8,173.6" fill="#a6a8a6"/><polygon points="900.5,181.4 904.7,181.4 919.5,201.6 915.3,201.6" fill="#a6a8a6"/><polygon points="921.5,210.0 925.7,210.0 934.5,222.0 930.3,222.0" fill="#a6a8a6"/><rect x="904.9" y="190.5" width="10" height="1.6" fill="#a6a8a6"/><polygon points="939.4,234.4 943.6,234.4 961.1,258.2 956.9,258.2" fill="#a6a8a6"/><polygon points="967.0,272.0 971.2,272.0 981.7,286.4 977.5,286.4" fill="#a6a8a6"/><polygon points="985.4,297.2 989.6,297.2 1010.5,325.6 1006.3,325.6" fill="#a6a8a6"/><polygon points="1015.1,337.6 1019.3,337.6 1031.8,354.7 1027.6,354.7" fill="#a6a8a6"/><rect x="992.8" y="310.3" width="10" height="1.6" fill="#a6a8a6"/><polygon points="1040.7,372.5 1044.9,372.5 1070.3,407.1 1066.1,407.1" fill="#a6a8a6"/><polygon points="1080.9,427.4 1085.1,427.4 1100.7,448.7 1096.5,448.7" fill="#a6a8a6"/><polygon points="1108.4,464.8 1112.6,464.8 1144.1,507.7 1139.9,507.7" fill="#a6a8a6"/><polygon points="1153.3,526.0 1157.5,526.0 1176.8,552.4 1172.6,552.4" fill="#a6a8a6"/><rect x="1120.8" y="485.0" width="10" height="1.6" fill="#a6a8a6"/><line x1="716.3" y1="-110.5" x2="1392.2" y2="718.9" stroke="#dcdcdc" stroke-width="1"/><line x1="744.2" y1="-110.5" x2="1487.7" y2="718.9" stroke="#a6a8a6" stroke-width="2.2"/><polygon points="770.8,-78.4 775.0,-78.4 781.2,-71.5 777.0,-71.5" fill="#a6a8a6"/><polygon points="780.5,-67.6 784.7,-67.6 788.3,-63.6 784.1,-63.6" fill="#a6a8a6"/><polygon points="786.8,-60.6 791.0,-60.6 797.8,-53.0 793.6,-53.0" fill="#a6a8a6"/><polygon points="796.4,-49.8 800.6,-49.8 804.6,-45.5 800.4,-45.5" fill="#a6a8a6"/><rect x="787.3" y="-57.6" width="10" height="1.6" fill="#a6a8a6"/><polygon points="804.4,-41.0 808.6,-41.0 816.1,-32.6 811.9,-32.6" fill="#a6a8a6"/><polygon points="816.2,-27.8 820.4,-27.8 824.8,-22.9 820.6,-22.9" fill="#a6a8a6"/><polygon points="823.8,-19.3 828.0,-19.3 836.4,-9.9 832.2,-9.9" fill="#a6a8a6"/><polygon points="835.7,-6.1 839.9,-6.1 844.7,-0.7 840.5,-0.7" fill="#a6a8a6"/><rect x="825.1" y="-15.4" width="10" height="1.6" fill="#a6a8a6"/><polygon points="845.5,4.9 849.7,4.9 859.0,15.3 854.8,15.3" fill="#a6a8a6"/><polygon points="860.1,21.2 864.3,21.2 869.8,27.3 865.6,27.3" fill="#a6a8a6"/><polygon points="869.6,31.8 873.8,31.8 884.3,43.5 880.1,43.5" fill="#a6a8a6"/><polygon points="884.5,48.4 888.7,48.4 894.8,55.2 890.6,55.2" fill="#a6a8a6"/><rect x="871.9" y="36.8" width="10" height="1.6" fill="#a6a8a6"/><polygon points="896.9,62.2 901.1,62.2 912.9,75.4 908.7,75.4" fill="#a6a8a6"/><polygon points="915.5,83.0 919.7,83.0 926.7,90.8 922.5,90.8" fill="#a6a8a6"/><polygon points="927.7,96.6 931.9,96.6 945.4,111.7 941.2,111.7" fill="#a6a8a6"/><polygon points="946.9,118.0 951.1,118.0 959.0,126.8 954.8,126.8" fill="#a6a8a6"/><rect x="931.5" y="103.2" width="10" height="1.6" fill="#a6a8a6"/><polygon points="963.0,135.9 967.2,135.9 982.8,153.3 978.6,153.3" fill="#a6a8a6"/><polygon points="987.5,163.3 991.7,163.3 1001.0,173.6 996.8,173.6" fill="#a6a8a6"/><polygon points="1003.7,181.4 1007.9,181.4 1026.0,201.6 1021.8,201.6" fill="#a6a8a6"/><polygon points="1029.4,210.0 1033.6,210.0 1044.4,222.0 1040.2,222.0" fill="#a6a8a6"/><rect x="1009.7" y="190.5" width="10" height="1.6" fill="#a6a8a6"/><polygon points="1051.3,234.4 1055.5,234.4 1076.8,258.2 1072.6,258.2" fill="#a6a8a6"/><polygon points="1085.0,272.0 1089.2,272.0 1102.1,286.4 1097.9,286.4" fill="#a6a8a6"/><polygon points="1107.5,297.2 1111.7,297.2 1137.2,325.6 1133.0,325.6" fill="#a6a8a6"/><polygon points="1143.8,337.6 1148.0,337.6 1163.3,354.7 1159.1,354.7" fill="#a6a8a6"/><rect x="1117.1" y="310.3" width="10" height="1.6" fill="#a6a8a6"/><polygon points="1175.1,372.5 1179.3,372.5 1210.3,407.1 1206.1,407.1" fill="#a6a8a6"/><polygon points="1224.3,427.4 1228.5,427.4 1247.5,448.7 1243.3,448.7" fill="#a6a8a6"/><polygon points="1257.8,464.8 1262.0,464.8 1300.5,507.7 1296.3,507.7" fill="#a6a8a6"/><polygon points="1312.7,526.0 1316.9,526.0 1340.6,552.4 1336.4,552.4" fill="#a6a8a6"/><rect x="1273.7" y="485.0" width="10" height="1.6" fill="#a6a8a6"/><line x1="772.0" y1="-110.5" x2="1583.1" y2="718.9" stroke="#dcdcdc" stroke-width="1"/><line x1="-335.0" y1="-56.8" x2="1211.0" y2="-56.8" stroke="#dcdcdc" stroke-width="1"/><line x1="-374.1" y1="-36.8" x2="1250.1" y2="-36.8" stroke="#a6a8a6" stroke-width="2.2"/><rect x="59.0" y="-38.9" width="13.5" height="4.2" fill="#a6a8a6"/><rect x="80.0" y="-38.9" width="7.4" height="4.2" fill="#a6a8a6"/><rect x="92.8" y="-38.9" width="13.5" height="4.2" fill="#a6a8a6"/><rect x="111.8" y="-38.9" width="7.4" height="4.2" fill="#a6a8a6"/><rect x="98.8" y="-41.8" width="1.6" height="10" fill="#a6a8a6"/><rect x="126.7" y="-38.9" width="13.5" height="4.2" fill="#a6a8a6"/><rect x="147.7" y="-38.9" width="7.4" height="4.2" fill="#a6a8a6"/><rect x="160.5" y="-38.9" width="13.5" height="4.2" fill="#a6a8a6"/><rect x="179.5" y="-38.9" width="7.4" height="4.2" fill="#a6a8a6"/><rect x="166.5" y="-41.8" width="1.6" height="10" fill="#a6a8a6"/><rect x="194.4" y="-38.9" width="13.5" height="4.2" fill="#a6a8a6"/><rect x="215.3" y="-38.9" width="7.4" height="4.2" fill="#a6a8a6"/><rect x="228.2" y="-38.9" width="13.5" height="4.2" fill="#a6a8a6"/><rect x="247.2" y="-38.9" width="7.4" height="4.2" fill="#a6a8a6"/><rect x="234.2" y="-41.8" width="1.6" height="10" fill="#a6a8a6"/><rect x="262.0" y="-38.9" width="13.5" height="4.2" fill="#a6a8a6"/><rect x="283.0" y="-38.9" width="7.4" height="4.2" fill="#a6a8a6"/><rect x="295.9" y="-38.9" width="13.5" height="4.2" fill="#a6a8a6"/><rect x="314.8" y="-38.9" width="7.4" height="4.2" fill="#a6a8a6"/><rect x="301.8" y="-41.8" width="1.6" height="10" fill="#a6a8a6"/><rect x="329.7" y="-38.9" width="13.5" height="4.2" fill="#a6a8a6"/><rect x="350.7" y="-38.9" width="7.4" height="4.2" fill="#a6a8a6"/><rect x="363.6" y="-38.9" width="13.5" height="4.2" fill="#a6a8a6"/><rect x="382.5" y="-38.9" width="7.4" height="4.2" fill="#a6a8a6"/><rect x="369.5" y="-41.8" width="1.6" height="10" fill="#a6a8a6"/><rect x="397.4" y="-38.9" width="13.5" height="4.2" fill="#a6a8a6"/><rect x="418.4" y="-38.9" width="7.4" height="4.2" fill="#a6a8a6"/><rect x="431.2" y="-38.9" width="13.5" height="4.2" fill="#a6a8a6"/><rect x="450.2" y="-38.9" width="7.4" height="4.2" fill="#a6a8a6"/><rect x="437.2" y="-41.8" width="1.6" height="10" fill="#a6a8a6"/><rect x="465.1" y="-38.9" width="13.5" height="4.2" fill="#a6a8a6"/><rect x="486.1" y="-38.9" width="7.4" height="4.2" fill="#a6a8a6"/><rect x="498.9" y="-38.9" width="13.5" height="4.2" fill="#a6a8a6"/><rect x="517.9" y="-38.9" width="7.4" height="4.2" fill="#a6a8a6"/><rect x="504.9" y="-41.8" width="1.6" height="10" fill="#a6a8a6"/><rect x="532.7" y="-38.9" width="13.5" height="4.2" fill="#a6a8a6"/><rect x="553.7" y="-38.9" width="7.4" height="4.2" fill="#a6a8a6"/><rect x="566.6" y="-38.9" width="13.5" height="4.2" fill="#a6a8a6"/><rect x="585.5" y="-38.9" width="7.4" height="4.2" fill="#a6a8a6"/><rect x="572.6" y="-41.8" width="1.6" height="10" fill="#a6a8a6"/><rect x="600.4" y="-38.9" width="13.5" height="4.2" fill="#a6a8a6"/><rect x="621.4" y="-38.9" width="7.4" height="4.2" fill="#a6a8a6"/><rect x="634.3" y="-38.9" width="13.5" height="4.2" fill="#a6a8a6"/><rect x="653.2" y="-38.9" width="7.4" height="4.2" fill="#a6a8a6"/><rect x="640.2" y="-41.8" width="1.6" height="10" fill="#a6a8a6"/><rect x="668.1" y="-38.9" width="13.5" height="4.2" fill="#a6a8a6"/><rect x="689.1" y="-38.9" width="7.4" height="4.2" fill="#a6a8a6"/><rect x="701.9" y="-38.9" width="13.5" height="4.2" fill="#a6a8a6"/><rect x="720.9" y="-38.9" width="7.4" height="4.2" fill="#a6a8a6"/><rect x="707.9" y="-41.8" width="1.6" height="10" fill="#a6a8a6"/><rect x="735.8" y="-38.9" width="13.5" height="4.2" fill="#a6a8a6"/><rect x="756.8" y="-38.9" width="7.4" height="4.2" fill="#a6a8a6"/><rect x="769.6" y="-38.9" width="13.5" height="4.2" fill="#a6a8a6"/><rect x="788.6" y="-38.9" width="7.4" height="4.2" fill="#a6a8a6"/><rect x="775.6" y="-41.8" width="1.6" height="10" fill="#a6a8a6"/><rect x="803.5" y="-38.9" width="13.5" height="4.2" fill="#a6a8a6"/><rect x="824.4" y="-38.9" width="7.4" height="4.2" fill="#a6a8a6"/><rect x="837.3" y="-38.9" width="13.5" height="4.2" fill="#a6a8a6"/><rect x="856.2" y="-38.9" width="7.4" height="4.2" fill="#a6a8a6"/><rect x="843.3" y="-41.8" width="1.6" height="10" fill="#a6a8a6"/><line x1="-417.5" y1="-14.6" x2="1293.5" y2="-14.6" stroke="#dcdcdc" stroke-width="1"/><line x1="-465.7" y1="10.0" x2="1341.7" y2="10.0" stroke="#a6a8a6" stroke-width="2.2"/><rect x="16.3" y="7.9" width="15.1" height="4.2" fill="#a6a8a6"/><rect x="39.6" y="7.9" width="8.3" height="4.2" fill="#a6a8a6"/><rect x="53.9" y="7.9" width="15.1" height="4.2" fill="#a6a8a6"/><rect x="75.0" y="7.9" width="8.3" height="4.2" fill="#a6a8a6"/><rect x="60.7" y="5.0" width="1.6" height="10" fill="#a6a8a6"/><rect x="91.6" y="7.9" width="15.1" height="4.2" fill="#a6a8a6"/><rect x="114.9" y="7.9" width="8.3" height="4.2" fill="#a6a8a6"/><rect x="129.2" y="7.9" width="15.1" height="4.2" fill="#a6a8a6"/><rect x="150.3" y="7.9" width="8.3" height="4.2" fill="#a6a8a6"/><rect x="136.0" y="5.0" width="1.6" height="10" fill="#a6a8a6"/><rect x="166.9" y="7.9" width="15.1" height="4.2" fill="#a6a8a6"/><rect x="190.2" y="7.9" width="8.3" height="4.2" fill="#a6a8a6"/><rect x="204.5" y="7.9" width="15.1" height="4.2" fill="#a6a8a6"/><rect x="225.6" y="7.9" width="8.3" height="4.2" fill="#a6a8a6"/><rect x="211.3" y="5.0" width="1.6" height="10" fill="#a6a8a6"/><rect x="242.2" y="7.9" width="15.1" height="4.2" fill="#a6a8a6"/><rect x="265.5" y="7.9" width="8.3" height="4.2" fill="#a6a8a6"/><rect x="279.9" y="7.9" width="15.1" height="4.2" fill="#a6a8a6"/><rect x="300.9" y="7.9" width="8.3" height="4.2" fill="#a6a8a6"/><rect x="286.6" y="5.0" width="1.6" height="10" fill="#a6a8a6"/><rect x="317.5" y="7.9" width="15.1" height="4.2" fill="#a6a8a6"/><rect x="340.9" y="7.9" width="8.3" height="4.2" fill="#a6a8a6"/><rect x="355.2" y="7.9" width="15.1" height="4.2" fill="#a6a8a6"/><rect x="376.2" y="7.9" width="8.3" height="4.2" fill="#a6a8a6"/><rect x="361.9" y="5.0" width="1.6" height="10" fill="#a6a8a6"/><rect x="392.8" y="7.9" width="15.1" height="4.2" fill="#a6a8a6"/><rect x="416.2" y="7.9" width="8.3" height="4.2" fill="#a6a8a6"/><rect x="430.5" y="7.9" width="15.1" height="4.2" fill="#a6a8a6"/><rect x="451.6" y="7.9" width="8.3" height="4.2" fill="#a6a8a6"/><rect x="437.2" y="5.0" width="1.6" height="10" fill="#a6a8a6"/><rect x="468.1" y="7.9" width="15.1" height="4.2" fill="#a6a8a6"/><rect x="491.5" y="7.9" width="8.3" height="4.2" fill="#a6a8a6"/><rect x="505.8" y="7.9" width="15.1" height="4.2" fill="#a6a8a6"/><rect x="526.9" y="7.9" width="8.3" height="4.2" fill="#a6a8a6"/><rect x="512.5" y="5.0" width="1.6" height="10" fill="#a6a8a6"/><rect x="543.4" y="7.9" width="15.1" height="4.2" fill="#a6a8a6"/><rect x="566.8" y="7.9" width="8.3" height="4.2" fill="#a6a8a6"/><rect x="581.1" y="7.9" width="15.1" height="4.2" fill="#a6a8a6"/><rect x="602.2" y="7.9" width="8.3" height="4.2" fill="#a6a8a6"/><rect x="587.8" y="5.0" width="1.6" height="10" fill="#a6a8a6"/><rect x="618.7" y="7.9" width="15.1" height="4.2" fill="#a6a8a6"/><rect x="642.1" y="7.9" width="8.3" height="4.2" fill="#a6a8a6"/><rect x="656.4" y="7.9" width="15.1" height="4.2" fill="#a6a8a6"/><rect x="677.5" y="7.9" width="8.3" height="4.2" fill="#a6a8a6"/><rect x="663.1" y="5.0" width="1.6" height="10" fill="#a6a8a6"/><rect x="694.0" y="7.9" width="15.1" height="4.2" fill="#a6a8a6"/><rect x="717.4" y="7.9" width="8.3" height="4.2" fill="#a6a8a6"/><rect x="731.7" y="7.9" width="15.1" height="4.2" fill="#a6a8a6"/><rect x="752.8" y="7.9" width="8.3" height="4.2" fill="#a6a8a6"/><rect x="738.4" y="5.0" width="1.6" height="10" fill="#a6a8a6"/><rect x="769.4" y="7.9" width="15.1" height="4.2" fill="#a6a8a6"/><rect x="792.7" y="7.9" width="8.3" height="4.2" fill="#a6a8a6"/><rect x="807.0" y="7.9" width="15.1" height="4.2" fill="#a6a8a6"/><rect x="828.1" y="7.9" width="8.3" height="4.2" fill="#a6a8a6"/><rect x="813.7" y="5.0" width="1.6" height="10" fill="#a6a8a6"/><rect x="844.7" y="7.9" width="15.1" height="4.2" fill="#a6a8a6"/><rect x="868.0" y="7.9" width="8.3" height="4.2" fill="#a6a8a6"/><rect x="882.3" y="7.9" width="15.1" height="4.2" fill="#a6a8a6"/><rect x="903.4" y="7.9" width="8.3" height="4.2" fill="#a6a8a6"/><rect x="889.0" y="5.0" width="1.6" height="10" fill="#a6a8a6"/><line x1="-519.7" y1="37.6" x2="1395.7" y2="37.6" stroke="#dcdcdc" stroke-width="1"/><line x1="-580.5" y1="68.7" x2="1456.5" y2="68.7" stroke="#a6a8a6" stroke-width="2.2"/><rect x="-37.3" y="66.6" width="17.0" height="4.2" fill="#a6a8a6"/><rect x="-11.0" y="66.6" width="9.3" height="4.2" fill="#a6a8a6"/><rect x="5.1" y="66.6" width="17.0" height="4.2" fill="#a6a8a6"/><rect x="28.9" y="66.6" width="9.3" height="4.2" fill="#a6a8a6"/><rect x="12.8" y="63.7" width="1.6" height="10" fill="#a6a8a6"/><rect x="47.6" y="66.6" width="17.0" height="4.2" fill="#a6a8a6"/><rect x="73.9" y="66.6" width="9.3" height="4.2" fill="#a6a8a6"/><rect x="90.0" y="66.6" width="17.0" height="4.2" fill="#a6a8a6"/><rect x="113.8" y="66.6" width="9.3" height="4.2" fill="#a6a8a6"/><rect x="97.7" y="63.7" width="1.6" height="10" fill="#a6a8a6"/><rect x="132.4" y="66.6" width="17.0" height="4.2" fill="#a6a8a6"/><rect x="158.8" y="66.6" width="9.3" height="4.2" fill="#a6a8a6"/><rect x="174.9" y="66.6" width="17.0" height="4.2" fill="#a6a8a6"/><rect x="198.6" y="66.6" width="9.3" height="4.2" fill="#a6a8a6"/><rect x="182.6" y="63.7" width="1.6" height="10" fill="#a6a8a6"/><rect x="217.3" y="66.6" width="17.0" height="4.2" fill="#a6a8a6"/><rect x="243.6" y="66.6" width="9.3" height="4.2" fill="#a6a8a6"/><rect x="259.8" y="66.6" width="17.0" height="4.2" fill="#a6a8a6"/><rect x="283.5" y="66.6" width="9.3" height="4.2" fill="#a6a8a6"/><rect x="267.4" y="63.7" width="1.6" height="10" fill="#a6a8a6"/><rect x="302.2" y="66.6" width="17.0" height="4.2" fill="#a6a8a6"/><rect x="328.5" y="66.6" width="9.3" height="4.2" fill="#a6a8a6"/><rect x="344.6" y="66.6" width="17.0" height="4.2" fill="#a6a8a6"/><rect x="368.4" y="66.6" width="9.3" height="4.2" fill="#a6a8a6"/><rect x="352.3" y="63.7" width="1.6" height="10" fill="#a6a8a6"/><rect x="387.1" y="66.6" width="17.0" height="4.2" fill="#a6a8a6"/><rect x="413.4" y="66.6" width="9.3" height="4.2" fill="#a6a8a6"/><rect x="429.5" y="66.6" width="17.0" height="4.2" fill="#a6a8a6"/><rect x="453.3" y="66.6" width="9.3" height="4.2" fill="#a6a8a6"/><rect x="437.2" y="63.7" width="1.6" height="10" fill="#a6a8a6"/><rect x="472.0" y="66.6" width="17.0" height="4.2" fill="#a6a8a6"/><rect x="498.3" y="66.6" width="9.3" height="4.2" fill="#a6a8a6"/><rect x="514.4" y="66.6" width="17.0" height="4.2" fill="#a6a8a6"/><rect x="538.2" y="66.6" width="9.3" height="4.2" fill="#a6a8a6"/><rect x="522.1" y="63.7" width="1.6" height="10" fill="#a6a8a6"/><rect x="556.8" y="66.6" width="17.0" height="4.2" fill="#a6a8a6"/><rect x="583.1" y="66.6" width="9.3" height="4.2" fill="#a6a8a6"/><rect x="599.3" y="66.6" width="17.0" height="4.2" fill="#a6a8a6"/><rect x="623.0" y="66.6" width="9.3" height="4.2" fill="#a6a8a6"/><rect x="607.0" y="63.7" width="1.6" height="10" fill="#a6a8a6"/><rect x="641.7" y="66.6" width="17.0" height="4.2" fill="#a6a8a6"/><rect x="668.0" y="66.6" width="9.3" height="4.2" fill="#a6a8a6"/><rect x="684.1" y="66.6" width="17.0" height="4.2" fill="#a6a8a6"/><rect x="707.9" y="66.6" width="9.3" height="4.2" fill="#a6a8a6"/><rect x="691.8" y="63.7" width="1.6" height="10" fill="#a6a8a6"/><rect x="726.6" y="66.6" width="17.0" height="4.2" fill="#a6a8a6"/><rect x="752.9" y="66.6" width="9.3" height="4.2" fill="#a6a8a6"/><rect x="769.0" y="66.6" width="17.0" height="4.2" fill="#a6a8a6"/><rect x="792.8" y="66.6" width="9.3" height="4.2" fill="#a6a8a6"/><rect x="776.7" y="63.7" width="1.6" height="10" fill="#a6a8a6"/><rect x="811.5" y="66.6" width="17.0" height="4.2" fill="#a6a8a6"/><rect x="837.8" y="66.6" width="9.3" height="4.2" fill="#a6a8a6"/><rect x="853.9" y="66.6" width="17.0" height="4.2" fill="#a6a8a6"/><rect x="877.7" y="66.6" width="9.3" height="4.2" fill="#a6a8a6"/><rect x="861.6" y="63.7" width="1.6" height="10" fill="#a6a8a6"/><rect x="896.3" y="66.6" width="17.0" height="4.2" fill="#a6a8a6"/><rect x="922.6" y="66.6" width="9.3" height="4.2" fill="#a6a8a6"/><rect x="938.8" y="66.6" width="17.0" height="4.2" fill="#a6a8a6"/><rect x="962.5" y="66.6" width="9.3" height="4.2" fill="#a6a8a6"/><rect x="946.5" y="63.7" width="1.6" height="10" fill="#a6a8a6"/><line x1="-649.6" y1="104.0" x2="1525.6" y2="104.0" stroke="#dcdcdc" stroke-width="1"/><line x1="-728.8" y1="144.5" x2="1604.8" y2="144.5" stroke="#a6a8a6" stroke-width="2.2"/><rect x="-106.5" y="142.4" width="19.4" height="4.2" fill="#a6a8a6"/><rect x="-76.3" y="142.4" width="10.7" height="4.2" fill="#a6a8a6"/><rect x="-57.9" y="142.4" width="19.4" height="4.2" fill="#a6a8a6"/><rect x="-30.7" y="142.4" width="10.7" height="4.2" fill="#a6a8a6"/><rect x="-49.0" y="139.5" width="1.6" height="10" fill="#a6a8a6"/><rect x="-9.3" y="142.4" width="19.4" height="4.2" fill="#a6a8a6"/><rect x="20.9" y="142.4" width="10.7" height="4.2" fill="#a6a8a6"/><rect x="39.4" y="142.4" width="19.4" height="4.2" fill="#a6a8a6"/><rect x="66.6" y="142.4" width="10.7" height="4.2" fill="#a6a8a6"/><rect x="48.3" y="139.5" width="1.6" height="10" fill="#a6a8a6"/><rect x="88.0" y="142.4" width="19.4" height="4.2" fill="#a6a8a6"/><rect x="118.1" y="142.4" width="10.7" height="4.2" fill="#a6a8a6"/><rect x="136.6" y="142.4" width="19.4" height="4.2" fill="#a6a8a6"/><rect x="163.8" y="142.4" width="10.7" height="4.2" fill="#a6a8a6"/><rect x="145.5" y="139.5" width="1.6" height="10" fill="#a6a8a6"/><rect x="185.2" y="142.4" width="19.4" height="4.2" fill="#a6a8a6"/><rect x="215.3" y="142.4" width="10.7" height="4.2" fill="#a6a8a6"/><rect x="233.8" y="142.4" width="19.4" height="4.2" fill="#a6a8a6"/><rect x="261.0" y="142.4" width="10.7" height="4.2" fill="#a6a8a6"/><rect x="242.7" y="139.5" width="1.6" height="10" fill="#a6a8a6"/><rect x="282.4" y="142.4" width="19.4" height="4.2" fill="#a6a8a6"/><rect x="312.6" y="142.4" width="10.7" height="4.2" fill="#a6a8a6"/><rect x="331.0" y="142.4" width="19.4" height="4.2" fill="#a6a8a6"/><rect x="358.3" y="142.4" width="10.7" height="4.2" fill="#a6a8a6"/><rect x="340.0" y="139.5" width="1.6" height="10" fill="#a6a8a6"/><rect x="379.7" y="142.4" width="19.4" height="4.2" fill="#a6a8a6"/><rect x="409.8" y="142.4" width="10.7" height="4.2" fill="#a6a8a6"/><rect x="428.3" y="142.4" width="19.4" height="4.2" fill="#a6a8a6"/><rect x="455.5" y="142.4" width="10.7" height="4.2" fill="#a6a8a6"/><rect x="437.2" y="139.5" width="1.6" height="10" fill="#a6a8a6"/><rect x="476.9" y="142.4" width="19.4" height="4.2" fill="#a6a8a6"/><rect x="507.0" y="142.4" width="10.7" height="4.2" fill="#a6a8a6"/><rect x="525.5" y="142.4" width="19.4" height="4.2" fill="#a6a8a6"/><rect x="552.7" y="142.4" width="10.7" height="4.2" fill="#a6a8a6"/><rect x="534.4" y="139.5" width="1.6" height="10" fill="#a6a8a6"/><rect x="574.1" y="142.4" width="19.4" height="4.2" fill="#a6a8a6"/><rect x="604.3" y="142.4" width="10.7" height="4.2" fill="#a6a8a6"/><rect x="622.7" y="142.4" width="19.4" height="4.2" fill="#a6a8a6"/><rect x="650.0" y="142.4" width="10.7" height="4.2" fill="#a6a8a6"/><rect x="631.7" y="139.5" width="1.6" height="10" fill="#a6a8a6"/><rect x="671.4" y="142.4" width="19.4" height="4.2" fill="#a6a8a6"/><rect x="701.5" y="142.4" width="10.7" height="4.2" fill="#a6a8a6"/><rect x="720.0" y="142.4" width="19.4" height="4.2" fill="#a6a8a6"/><rect x="747.2" y="142.4" width="10.7" height="4.2" fill="#a6a8a6"/><rect x="728.9" y="139.5" width="1.6" height="10" fill="#a6a8a6"/><rect x="768.6" y="142.4" width="19.4" height="4.2" fill="#a6a8a6"/><rect x="798.7" y="142.4" width="10.7" height="4.2" fill="#a6a8a6"/><rect x="817.2" y="142.4" width="19.4" height="4.2" fill="#a6a8a6"/><rect x="844.4" y="142.4" width="10.7" height="4.2" fill="#a6a8a6"/><rect x="826.1" y="139.5" width="1.6" height="10" fill="#a6a8a6"/><rect x="865.8" y="142.4" width="19.4" height="4.2" fill="#a6a8a6"/><rect x="896.0" y="142.4" width="10.7" height="4.2" fill="#a6a8a6"/><rect x="914.4" y="142.4" width="19.4" height="4.2" fill="#a6a8a6"/><rect x="941.7" y="142.4" width="10.7" height="4.2" fill="#a6a8a6"/><rect x="923.4" y="139.5" width="1.6" height="10" fill="#a6a8a6"/><rect x="963.0" y="142.4" width="19.4" height="4.2" fill="#a6a8a6"/><rect x="993.2" y="142.4" width="10.7" height="4.2" fill="#a6a8a6"/><rect x="1011.7" y="142.4" width="19.4" height="4.2" fill="#a6a8a6"/><rect x="1038.9" y="142.4" width="10.7" height="4.2" fill="#a6a8a6"/><rect x="1020.6" y="139.5" width="1.6" height="10" fill="#a6a8a6"/><line x1="-820.3" y1="191.3" x2="1696.3" y2="191.3" stroke="#dcdcdc" stroke-width="1"/><line x1="-927.5" y1="246.1" x2="1803.5" y2="246.1" stroke="#a6a8a6" stroke-width="2.2"/><rect x="-199.2" y="244.0" width="22.8" height="4.2" fill="#a6a8a6"/><rect x="-164.0" y="244.0" width="12.5" height="4.2" fill="#a6a8a6"/><rect x="-142.4" y="244.0" width="22.8" height="4.2" fill="#a6a8a6"/><rect x="-110.5" y="244.0" width="12.5" height="4.2" fill="#a6a8a6"/><rect x="-131.8" y="241.1" width="1.6" height="10" fill="#a6a8a6"/><rect x="-85.5" y="244.0" width="22.8" height="4.2" fill="#a6a8a6"/><rect x="-50.2" y="244.0" width="12.5" height="4.2" fill="#a6a8a6"/><rect x="-28.6" y="244.0" width="22.8" height="4.2" fill="#a6a8a6"/><rect x="3.3" y="244.0" width="12.5" height="4.2" fill="#a6a8a6"/><rect x="-18.0" y="241.1" width="1.6" height="10" fill="#a6a8a6"/><rect x="28.3" y="244.0" width="22.8" height="4.2" fill="#a6a8a6"/><rect x="63.6" y="244.0" width="12.5" height="4.2" fill="#a6a8a6"/><rect x="85.2" y="244.0" width="22.8" height="4.2" fill="#a6a8a6"/><rect x="117.1" y="244.0" width="12.5" height="4.2" fill="#a6a8a6"/><rect x="95.8" y="241.1" width="1.6" height="10" fill="#a6a8a6"/><rect x="142.1" y="244.0" width="22.8" height="4.2" fill="#a6a8a6"/><rect x="177.4" y="244.0" width="12.5" height="4.2" fill="#a6a8a6"/><rect x="199.0" y="244.0" width="22.8" height="4.2" fill="#a6a8a6"/><rect x="230.9" y="244.0" width="12.5" height="4.2" fill="#a6a8a6"/><rect x="209.6" y="241.1" width="1.6" height="10" fill="#a6a8a6"/><rect x="255.9" y="244.0" width="22.8" height="4.2" fill="#a6a8a6"/><rect x="291.2" y="244.0" width="12.5" height="4.2" fill="#a6a8a6"/><rect x="312.8" y="244.0" width="22.8" height="4.2" fill="#a6a8a6"/><rect x="344.7" y="244.0" width="12.5" height="4.2" fill="#a6a8a6"/><rect x="323.4" y="241.1" width="1.6" height="10" fill="#a6a8a6"/><rect x="369.7" y="244.0" width="22.8" height="4.2" fill="#a6a8a6"/><rect x="405.0" y="244.0" width="12.5" height="4.2" fill="#a6a8a6"/><rect x="426.6" y="244.0" width="22.8" height="4.2" fill="#a6a8a6"/><rect x="458.5" y="244.0" width="12.5" height="4.2" fill="#a6a8a6"/><rect x="437.2" y="241.1" width="1.6" height="10" fill="#a6a8a6"/><rect x="483.5" y="244.0" width="22.8" height="4.2" fill="#a6a8a6"/><rect x="518.8" y="244.0" width="12.5" height="4.2" fill="#a6a8a6"/><rect x="540.4" y="244.0" width="22.8" height="4.2" fill="#a6a8a6"/><rect x="572.3" y="244.0" width="12.5" height="4.2" fill="#a6a8a6"/><rect x="551.0" y="241.1" width="1.6" height="10" fill="#a6a8a6"/><rect x="597.3" y="244.0" width="22.8" height="4.2" fill="#a6a8a6"/><rect x="632.6" y="244.0" width="12.5" height="4.2" fill="#a6a8a6"/><rect x="654.2" y="244.0" width="22.8" height="4.2" fill="#a6a8a6"/><rect x="686.1" y="244.0" width="12.5" height="4.2" fill="#a6a8a6"/><rect x="664.8" y="241.1" width="1.6" height="10" fill="#a6a8a6"/><rect x="711.1" y="244.0" width="22.8" height="4.2" fill="#a6a8a6"/><rect x="746.4" y="244.0" width="12.5" height="4.2" fill="#a6a8a6"/><rect x="768.0" y="244.0" width="22.8" height="4.2" fill="#a6a8a6"/><rect x="799.9" y="244.0" width="12.5" height="4.2" fill="#a6a8a6"/><rect x="778.6" y="241.1" width="1.6" height="10" fill="#a6a8a6"/><rect x="824.9" y="244.0" width="22.8" height="4.2" fill="#a6a8a6"/><rect x="860.2" y="244.0" width="12.5" height="4.2" fill="#a6a8a6"/><rect x="881.8" y="244.0" width="22.8" height="4.2" fill="#a6a8a6"/><rect x="913.7" y="244.0" width="12.5" height="4.2" fill="#a6a8a6"/><rect x="892.4" y="241.1" width="1.6" height="10" fill="#a6a8a6"/><rect x="938.7" y="244.0" width="22.8" height="4.2" fill="#a6a8a6"/><rect x="974.0" y="244.0" width="12.5" height="4.2" fill="#a6a8a6"/><rect x="995.6" y="244.0" width="22.8" height="4.2" fill="#a6a8a6"/><rect x="1027.5" y="244.0" width="12.5" height="4.2" fill="#a6a8a6"/><rect x="1006.2" y="241.1" width="1.6" height="10" fill="#a6a8a6"/><rect x="1052.5" y="244.0" width="22.8" height="4.2" fill="#a6a8a6"/><rect x="1087.8" y="244.0" width="12.5" height="4.2" fill="#a6a8a6"/><rect x="1109.4" y="244.0" width="22.8" height="4.2" fill="#a6a8a6"/><rect x="1141.3" y="244.0" width="12.5" height="4.2" fill="#a6a8a6"/><rect x="1120.0" y="241.1" width="1.6" height="10" fill="#a6a8a6"/><line x1="-1054.7" y1="311.1" x2="1930.7" y2="311.1" stroke="#dcdcdc" stroke-width="1"/><line x1="-1207.9" y1="389.5" x2="2083.9" y2="389.5" stroke="#a6a8a6" stroke-width="2.2"/><rect x="-330.1" y="387.4" width="27.4" height="4.2" fill="#a6a8a6"/><rect x="-287.6" y="387.4" width="15.1" height="4.2" fill="#a6a8a6"/><rect x="-261.5" y="387.4" width="27.4" height="4.2" fill="#a6a8a6"/><rect x="-223.1" y="387.4" width="15.1" height="4.2" fill="#a6a8a6"/><rect x="-248.6" y="384.5" width="1.6" height="10" fill="#a6a8a6"/><rect x="-192.9" y="387.4" width="27.4" height="4.2" fill="#a6a8a6"/><rect x="-150.4" y="387.4" width="15.1" height="4.2" fill="#a6a8a6"/><rect x="-124.4" y="387.4" width="27.4" height="4.2" fill="#a6a8a6"/><rect x="-86.0" y="387.4" width="15.1" height="4.2" fill="#a6a8a6"/><rect x="-111.4" y="384.5" width="1.6" height="10" fill="#a6a8a6"/><rect x="-55.8" y="387.4" width="27.4" height="4.2" fill="#a6a8a6"/><rect x="-13.3" y="387.4" width="15.1" height="4.2" fill="#a6a8a6"/><rect x="12.8" y="387.4" width="27.4" height="4.2" fill="#a6a8a6"/><rect x="51.2" y="387.4" width="15.1" height="4.2" fill="#a6a8a6"/><rect x="25.7" y="384.5" width="1.6" height="10" fill="#a6a8a6"/><rect x="81.4" y="387.4" width="27.4" height="4.2" fill="#a6a8a6"/><rect x="123.9" y="387.4" width="15.1" height="4.2" fill="#a6a8a6"/><rect x="150.0" y="387.4" width="27.4" height="4.2" fill="#a6a8a6"/><rect x="188.4" y="387.4" width="15.1" height="4.2" fill="#a6a8a6"/><rect x="162.9" y="384.5" width="1.6" height="10" fill="#a6a8a6"/><rect x="218.5" y="387.4" width="27.4" height="4.2" fill="#a6a8a6"/><rect x="261.1" y="387.4" width="15.1" height="4.2" fill="#a6a8a6"/><rect x="287.1" y="387.4" width="27.4" height="4.2" fill="#a6a8a6"/><rect x="325.5" y="387.4" width="15.1" height="4.2" fill="#a6a8a6"/><rect x="300.0" y="384.5" width="1.6" height="10" fill="#a6a8a6"/><rect x="355.7" y="387.4" width="27.4" height="4.2" fill="#a6a8a6"/><rect x="398.2" y="387.4" width="15.1" height="4.2" fill="#a6a8a6"/><rect x="424.3" y="387.4" width="27.4" height="4.2" fill="#a6a8a6"/><rect x="462.7" y="387.4" width="15.1" height="4.2" fill="#a6a8a6"/><rect x="437.2" y="384.5" width="1.6" height="10" fill="#a6a8a6"/><rect x="492.9" y="387.4" width="27.4" height="4.2" fill="#a6a8a6"/><rect x="535.4" y="387.4" width="15.1" height="4.2" fill="#a6a8a6"/><rect x="561.4" y="387.4" width="27.4" height="4.2" fill="#a6a8a6"/><rect x="599.8" y="387.4" width="15.1" height="4.2" fill="#a6a8a6"/><rect x="574.4" y="384.5" width="1.6" height="10" fill="#a6a8a6"/><rect x="630.0" y="387.4" width="27.4" height="4.2" fill="#a6a8a6"/><rect x="672.5" y="387.4" width="15.1" height="4.2" fill="#a6a8a6"/><rect x="698.6" y="387.4" width="27.4" height="4.2" fill="#a6a8a6"/><rect x="737.0" y="387.4" width="15.1" height="4.2" fill="#a6a8a6"/><rect x="711.5" y="384.5" width="1.6" height="10" fill="#a6a8a6"/><rect x="767.2" y="387.4" width="27.4" height="4.2" fill="#a6a8a6"/><rect x="809.7" y="387.4" width="15.1" height="4.2" fill="#a6a8a6"/><rect x="835.8" y="387.4" width="27.4" height="4.2" fill="#a6a8a6"/><rect x="874.2" y="387.4" width="15.1" height="4.2" fill="#a6a8a6"/><rect x="848.7" y="384.5" width="1.6" height="10" fill="#a6a8a6"/><rect x="904.3" y="387.4" width="27.4" height="4.2" fill="#a6a8a6"/><rect x="946.9" y="387.4" width="15.1" height="4.2" fill="#a6a8a6"/><rect x="972.9" y="387.4" width="27.4" height="4.2" fill="#a6a8a6"/><rect x="1011.3" y="387.4" width="15.1" height="4.2" fill="#a6a8a6"/><rect x="985.8" y="384.5" width="1.6" height="10" fill="#a6a8a6"/><rect x="1041.5" y="387.4" width="27.4" height="4.2" fill="#a6a8a6"/><rect x="1084.0" y="387.4" width="15.1" height="4.2" fill="#a6a8a6"/><rect x="1110.1" y="387.4" width="27.4" height="4.2" fill="#a6a8a6"/><rect x="1148.5" y="387.4" width="15.1" height="4.2" fill="#a6a8a6"/><rect x="1123.0" y="384.5" width="1.6" height="10" fill="#a6a8a6"/><rect x="1178.7" y="387.4" width="27.4" height="4.2" fill="#a6a8a6"/><rect x="1221.2" y="387.4" width="15.1" height="4.2" fill="#a6a8a6"/><rect x="1247.2" y="387.4" width="27.4" height="4.2" fill="#a6a8a6"/><rect x="1285.7" y="387.4" width="15.1" height="4.2" fill="#a6a8a6"/><rect x="1260.2" y="384.5" width="1.6" height="10" fill="#a6a8a6"/><line x1="-1396.3" y1="485.8" x2="2272.3" y2="485.8" stroke="#dcdcdc" stroke-width="1"/><line x1="-1633.2" y1="606.9" x2="2509.2" y2="606.9" stroke="#a6a8a6" stroke-width="2.2"/><rect x="-528.6" y="604.8" width="34.5" height="4.2" fill="#a6a8a6"/><rect x="-475.1" y="604.8" width="19.0" height="4.2" fill="#a6a8a6"/><rect x="-442.3" y="604.8" width="34.5" height="4.2" fill="#a6a8a6"/><rect x="-393.9" y="604.8" width="19.0" height="4.2" fill="#a6a8a6"/><rect x="-425.8" y="601.9" width="1.6" height="10" fill="#a6a8a6"/><rect x="-356.0" y="604.8" width="34.5" height="4.2" fill="#a6a8a6"/><rect x="-302.5" y="604.8" width="19.0" height="4.2" fill="#a6a8a6"/><rect x="-269.7" y="604.8" width="34.5" height="4.2" fill="#a6a8a6"/><rect x="-221.3" y="604.8" width="19.0" height="4.2" fill="#a6a8a6"/><rect x="-253.2" y="601.9" width="1.6" height="10" fill="#a6a8a6"/><rect x="-183.4" y="604.8" width="34.5" height="4.2" fill="#a6a8a6"/><rect x="-129.9" y="604.8" width="19.0" height="4.2" fill="#a6a8a6"/><rect x="-97.1" y="604.8" width="34.5" height="4.2" fill="#a6a8a6"/><rect x="-48.7" y="604.8" width="19.0" height="4.2" fill="#a6a8a6"/><rect x="-80.6" y="601.9" width="1.6" height="10" fill="#a6a8a6"/><rect x="-10.8" y="604.8" width="34.5" height="4.2" fill="#a6a8a6"/><rect x="42.7" y="604.8" width="19.0" height="4.2" fill="#a6a8a6"/><rect x="75.5" y="604.8" width="34.5" height="4.2" fill="#a6a8a6"/><rect x="123.9" y="604.8" width="19.0" height="4.2" fill="#a6a8a6"/><rect x="92.0" y="601.9" width="1.6" height="10" fill="#a6a8a6"/><rect x="161.8" y="604.8" width="34.5" height="4.2" fill="#a6a8a6"/><rect x="215.3" y="604.8" width="19.0" height="4.2" fill="#a6a8a6"/><rect x="248.1" y="604.8" width="34.5" height="4.2" fill="#a6a8a6"/><rect x="296.5" y="604.8" width="19.0" height="4.2" fill="#a6a8a6"/><rect x="264.6" y="601.9" width="1.6" height="10" fill="#a6a8a6"/><rect x="334.4" y="604.8" width="34.5" height="4.2" fill="#a6a8a6"/><rect x="387.9" y="604.8" width="19.0" height="4.2" fill="#a6a8a6"/><rect x="420.7" y="604.8" width="34.5" height="4.2" fill="#a6a8a6"/><rect x="469.1" y="604.8" width="19.0" height="4.2" fill="#a6a8a6"/><rect x="437.2" y="601.9" width="1.6" height="10" fill="#a6a8a6"/><rect x="507.0" y="604.8" width="34.5" height="4.2" fill="#a6a8a6"/><rect x="560.5" y="604.8" width="19.0" height="4.2" fill="#a6a8a6"/><rect x="593.3" y="604.8" width="34.5" height="4.2" fill="#a6a8a6"/><rect x="641.7" y="604.8" width="19.0" height="4.2" fill="#a6a8a6"/><rect x="609.8" y="601.9" width="1.6" height="10" fill="#a6a8a6"/><rect x="679.6" y="604.8" width="34.5" height="4.2" fill="#a6a8a6"/><rect x="733.2" y="604.8" width="19.0" height="4.2" fill="#a6a8a6"/><rect x="765.9" y="604.8" width="34.5" height="4.2" fill="#a6a8a6"/><rect x="814.3" y="604.8" width="19.0" height="4.2" fill="#a6a8a6"/><rect x="782.4" y="601.9" width="1.6" height="10" fill="#a6a8a6"/><rect x="852.2" y="604.8" width="34.5" height="4.2" fill="#a6a8a6"/><rect x="905.8" y="604.8" width="19.0" height="4.2" fill="#a6a8a6"/><rect x="938.5" y="604.8" width="34.5" height="4.2" fill="#a6a8a6"/><rect x="986.9" y="604.8" width="19.0" height="4.2" fill="#a6a8a6"/><rect x="955.0" y="601.9" width="1.6" height="10" fill="#a6a8a6"/><rect x="1024.9" y="604.8" width="34.5" height="4.2" fill="#a6a8a6"/><rect x="1078.4" y="604.8" width="19.0" height="4.2" fill="#a6a8a6"/><rect x="1111.2" y="604.8" width="34.5" height="4.2" fill="#a6a8a6"/><rect x="1159.5" y="604.8" width="19.0" height="4.2" fill="#a6a8a6"/><rect x="1127.6" y="601.9" width="1.6" height="10" fill="#a6a8a6"/><rect x="1197.5" y="604.8" width="34.5" height="4.2" fill="#a6a8a6"/><rect x="1251.0" y="604.8" width="19.0" height="4.2" fill="#a6a8a6"/><rect x="1283.8" y="604.8" width="34.5" height="4.2" fill="#a6a8a6"/><rect x="1332.1" y="604.8" width="19.0" height="4.2" fill="#a6a8a6"/><rect x="1300.2" y="601.9" width="1.6" height="10" fill="#a6a8a6"/><rect x="1370.1" y="604.8" width="34.5" height="4.2" fill="#a6a8a6"/><rect x="1423.6" y="604.8" width="19.0" height="4.2" fill="#a6a8a6"/><rect x="1456.4" y="604.8" width="34.5" height="4.2" fill="#a6a8a6"/><rect x="1504.7" y="604.8" width="19.0" height="4.2" fill="#a6a8a6"/><rect x="1472.8" y="601.9" width="1.6" height="10" fill="#a6a8a6"/></g><polygon points="177.0,0.0 246.0,0.0 110.0,344.0 0.0,344.0 0.0,322.0" fill="#c4c9ce"/><defs><clipPath id="gwl"><polygon points="177.0,0.0 246.0,0.0 110.0,344.0 0.0,344.0 0.0,322.0"/></clipPath></defs><g clip-path="url(#gwl)"><line x1="154.0" y1="0" x2="-52.7" y2="344" stroke="#7a7e82" stroke-width="0.8"/><line x1="165.5" y1="0" x2="-32.3" y2="344" stroke="#7a7e82" stroke-width="0.8"/><line x1="177.0" y1="0" x2="-12.0" y2="344" stroke="#7a7e82" stroke-width="0.8"/><line x1="188.5" y1="0" x2="8.3" y2="344" stroke="#7a7e82" stroke-width="0.8"/><line x1="200.0" y1="0" x2="28.7" y2="344" stroke="#7a7e82" stroke-width="0.8"/><line x1="211.5" y1="0" x2="49.0" y2="344" stroke="#7a7e82" stroke-width="0.8"/><line x1="223.0" y1="0" x2="69.3" y2="344" stroke="#7a7e82" stroke-width="0.8"/><line x1="234.5" y1="0" x2="89.7" y2="344" stroke="#7a7e82" stroke-width="0.8"/><line x1="246.0" y1="0" x2="110.0" y2="344" stroke="#7a7e82" stroke-width="0.8"/><line x1="257.5" y1="0" x2="130.3" y2="344" stroke="#7a7e82" stroke-width="0.8"/><line x1="269.0" y1="0" x2="150.7" y2="344" stroke="#7a7e82" stroke-width="0.8"/><line x1="0" y1="-82.0" x2="272" y2="-0.4" stroke="#7a7e82" stroke-width="0.8"/><line x1="0" y1="-61.5" x2="272" y2="20.1" stroke="#7a7e82" stroke-width="0.8"/><line x1="0" y1="-40.2" x2="272" y2="41.4" stroke="#7a7e82" stroke-width="0.8"/><line x1="0" y1="-18.0" x2="272" y2="63.6" stroke="#7a7e82" stroke-width="0.8"/><line x1="0" y1="5.2" x2="272" y2="86.8" stroke="#7a7e82" stroke-width="0.8"/><line x1="0" y1="29.2" x2="272" y2="110.8" stroke="#7a7e82" stroke-width="0.8"/><line x1="0" y1="54.2" x2="272" y2="135.8" stroke="#7a7e82" stroke-width="0.8"/><line x1="0" y1="80.0" x2="272" y2="161.6" stroke="#7a7e82" stroke-width="0.8"/><line x1="0" y1="106.8" x2="272" y2="188.4" stroke="#7a7e82" stroke-width="0.8"/><line x1="0" y1="134.5" x2="272" y2="216.1" stroke="#7a7e82" stroke-width="0.8"/><line x1="0" y1="163.0" x2="272" y2="244.6" stroke="#7a7e82" stroke-width="0.8"/><line x1="0" y1="192.5" x2="272" y2="274.1" stroke="#7a7e82" stroke-width="0.8"/><line x1="0" y1="222.8" x2="272" y2="304.4" stroke="#7a7e82" stroke-width="0.8"/><line x1="0" y1="254.0" x2="272" y2="335.6" stroke="#7a7e82" stroke-width="0.8"/><line x1="0" y1="286.2" x2="272" y2="367.8" stroke="#7a7e82" stroke-width="0.8"/><line x1="0" y1="319.2" x2="272" y2="400.9" stroke="#7a7e82" stroke-width="0.8"/><line x1="0" y1="353.2" x2="272" y2="434.8" stroke="#7a7e82" stroke-width="0.8"/><line x1="0" y1="388.0" x2="272" y2="469.6" stroke="#7a7e82" stroke-width="0.8"/><line x1="0" y1="423.8" x2="272" y2="505.4" stroke="#7a7e82" stroke-width="0.8"/><line x1="0" y1="460.5" x2="272" y2="542.1" stroke="#7a7e82" stroke-width="0.8"/><line x1="0" y1="498.0" x2="272" y2="579.6" stroke="#7a7e82" stroke-width="0.8"/><line x1="0" y1="536.5" x2="272" y2="618.1" stroke="#7a7e82" stroke-width="0.8"/></g><defs><filter id="gb" x="-30%" y="-10%" width="160%" height="120%"><feGaussianBlur stdDeviation="2"/></filter></defs><polygon points="543.0,-6.0 572.0,-6.0 660.0,350.0 634.0,350.0 612.0,309.0" fill="#7394c4" filter="url(#gb)" style="mix-blend-mode:multiply"/><polygon points="565.0,0.0 610.0,0.0 736.5,344.0 654.0,344.0" fill="#7b8796"/><polygon points="610.0,0.0 696.0,0.0 876.0,319.0 876.0,344.0 736.5,344.0" fill="#f6f6f6"/><defs><clipPath id="grw"><polygon points="565.0,0.0 696.0,0.0 876.0,319.0 876.0,344.0 654.0,344.0"/></clipPath></defs><g clip-path="url(#grw)"><line x1="588.0" y1="0" x2="701.5" y2="344" stroke="#8e8e8e" stroke-width="0.8"/><line x1="610.0" y1="0" x2="736.5" y2="344" stroke="#8e8e8e" stroke-width="0.8"/><line x1="632.0" y1="0" x2="771.5" y2="344" stroke="#8e8e8e" stroke-width="0.8"/><line x1="654.0" y1="0" x2="806.5" y2="344" stroke="#8e8e8e" stroke-width="0.8"/><line x1="676.0" y1="0" x2="841.5" y2="344" stroke="#8e8e8e" stroke-width="0.8"/><line x1="698.0" y1="0" x2="876.5" y2="344" stroke="#8e8e8e" stroke-width="0.8"/><line x1="720.0" y1="0" x2="911.5" y2="344" stroke="#8e8e8e" stroke-width="0.8"/><line x1="742.0" y1="0" x2="946.5" y2="344" stroke="#8e8e8e" stroke-width="0.8"/><line x1="764.0" y1="0" x2="981.5" y2="344" stroke="#8e8e8e" stroke-width="0.8"/><line x1="786.0" y1="0" x2="1016.5" y2="344" stroke="#8e8e8e" stroke-width="0.8"/><line x1="808.0" y1="0" x2="1051.5" y2="344" stroke="#8e8e8e" stroke-width="0.8"/><line x1="592" y1="10.0" x2="892" y2="26.0" stroke="#8e8e8e" stroke-width="0.8"/><line x1="592" y1="24.0" x2="892" y2="40.0" stroke="#8e8e8e" stroke-width="0.8"/><line x1="592" y1="40.6" x2="892" y2="56.6" stroke="#8e8e8e" stroke-width="0.8"/><line x1="592" y1="57.0" x2="892" y2="73.0" stroke="#8e8e8e" stroke-width="0.8"/><line x1="592" y1="76.0" x2="892" y2="92.0" stroke="#8e8e8e" stroke-width="0.8"/><line x1="592" y1="96.0" x2="892" y2="112.0" stroke="#8e8e8e" stroke-width="0.8"/><line x1="592" y1="117.0" x2="892" y2="133.0" stroke="#8e8e8e" stroke-width="0.8"/><line x1="592" y1="139.0" x2="892" y2="155.0" stroke="#8e8e8e" stroke-width="0.8"/><line x1="592" y1="164.0" x2="892" y2="180.0" stroke="#8e8e8e" stroke-width="0.8"/><line x1="592" y1="190.0" x2="892" y2="206.0" stroke="#8e8e8e" stroke-width="0.8"/><line x1="592" y1="219.0" x2="892" y2="235.0" stroke="#8e8e8e" stroke-width="0.8"/><line x1="592" y1="251.0" x2="892" y2="267.0" stroke="#8e8e8e" stroke-width="0.8"/><line x1="592" y1="285.0" x2="892" y2="301.0" stroke="#8e8e8e" stroke-width="0.8"/><line x1="592" y1="322.0" x2="892" y2="338.0" stroke="#8e8e8e" stroke-width="0.8"/></g><rect x="15" y="30" width="200" height="200" fill="rgba(62,62,62,0.4)"/></svg>
<div class="a" style="left:884px;top:682px;width:1px;height:344px;background:#191919;"></div>
<svg class="a" style="left:15px;top:86px;" width="11" height="11" viewBox="0 0 11 11"><path d="M3 0 V11 M7.5 0 V11 M0 3 H11 M0 7.5 H11" stroke="#c4c4c4" stroke-width="1.3"/></svg>
<div class="t" style="left:31px;top:84.75px;font-size:12.7px;color:#c4c4c4;font-weight:normal;">Scene</div>
<svg class="a" style="left:94px;top:85px;" width="12" height="12" viewBox="0 0 12 12"><path d="M0 2 Q3 3 5 6 L2 10 M5 6 H11 M8.5 3.5 L11 6 L8.5 8.5" fill="none" stroke="#c4c4c4" stroke-width="1.3"/></svg>
<div class="t" style="left:108px;top:84.75px;font-size:12.7px;color:#c4c4c4;font-weight:normal;">Animator</div>
<svg class="a" style="left:868px;top:85px;" width="2" height="10" viewBox="0 0 2 10"><rect x="0" y="0" width="2" height="2" fill="#c4c4c4"/><rect x="0" y="4" width="2" height="2" fill="#c4c4c4"/><rect x="0" y="8" width="2" height="2" fill="#c4c4c4"/></svg>
<div class="a" style="left:14px;top:105px;width:1px;height:16px;background:#5a5a5a;"></div>
<div class="a" style="left:17px;top:105px;width:1px;height:16px;background:#5a5a5a;"></div>
<div class="a" style="left:25px;top:103px;width:73px;height:20px;background:#505050;border-radius:3px"></div>
<svg class="a" style="left:28px;top:105px;" width="16" height="16" viewBox="0 0 16 16"><rect x=".5" y=".5" width="15" height="15" fill="none" stroke="#c4c4c4" stroke-width="1"/><circle cx="8" cy="8" r="3.3" fill="none" stroke="#f06a2a" stroke-width="1.5"/><path d="M2 14 L5.5 10.5 M10.5 5.5 L14 2" stroke="#c4c4c4" stroke-width=".8"/></svg>
<div class="t" style="left:44px;top:106.25px;font-size:12.7px;color:#c4c4c4;font-weight:normal;">Center</div>
<svg class="a" style="left:84px;top:110px;" width="8" height="4.8" viewBox="0 0 8 4.8"><path d="M0 0 L8 0 L4.0 4.8Z" fill="#c4c4c4"/></svg>
<div class="a" style="left:104px;top:103px;width:71px;height:20px;background:#505050;border-radius:3px"></div>
<svg class="a" style="left:107px;top:105px;" width="16" height="16" viewBox="0 0 16 16"><circle cx="7.5" cy="7.5" r="6.5" fill="none" stroke="#c4c4c4" stroke-width="1.1"/><ellipse cx="7.5" cy="7.5" rx="3" ry="6.5" fill="none" stroke="#c4c4c4" stroke-width="1"/><path d="M1 7.5 H14 M2 4 H13 M2 11 H13" stroke="#c4c4c4" stroke-width=".9"/><circle cx="11" cy="12" r="3" fill="#505050" stroke="#f06a2a" stroke-width="1.4"/></svg>
<div class="t" style="left:122px;top:106.25px;font-size:12.7px;color:#c4c4c4;font-weight:normal;">Global</div>
<svg class="a" style="left:162px;top:110px;" width="8" height="4.8" viewBox="0 0 8 4.8"><path d="M0 0 L8 0 L4.0 4.8Z" fill="#c4c4c4"/></svg>
<div class="a" style="left:184px;top:105px;width:1px;height:16px;background:#5a5a5a;"></div>
<div class="a" style="left:187px;top:105px;width:1px;height:16px;background:#5a5a5a;"></div>
<div class="a" style="left:195px;top:103px;width:22px;height:20px;background:#46607c;border-radius:3px 0 0 3px"></div>
<div class="a" style="left:218px;top:103px;width:14px;height:20px;background:#46607c;border-radius:0 3px 3px 0"></div>
<svg class="a" style="left:199px;top:106px;" width="14" height="15" viewBox="0 0 14 15"><path d="M4 0 V14 M9 0 V9 M0 4 H14 M0 9 H8 M0 13 H6" stroke="#e0e0e0" stroke-width="1.2"/><path d="M9 8 L11 11 L13 8 M11 11 V15" fill="none" stroke="#e0e0e0" stroke-width="1.6"/></svg>
<svg class="a" style="left:221px;top:111px;" width="8" height="4.8" viewBox="0 0 8 4.8"><path d="M0 0 L8 0 L4.0 4.8Z" fill="#c4c4c4"/></svg>
<div class="a" style="left:236px;top:103px;width:22px;height:20px;background:#505050;border-radius:3px 0 0 3px"></div>
<div class="a" style="left:259px;top:103px;width:14px;height:20px;background:#505050;border-radius:0 3px 3px 0"></div>
<svg class="a" style="left:240px;top:106px;" width="15" height="16" viewBox="0 0 15 16"><path d="M4 0 V14 M9 0 V6 M0 4 H14 M0 9 H6" stroke="#c4c4c4" stroke-width="1.1"/><path d="M8 9 H11 Q14 9 14 12 Q14 15 11 15 H8" fill="none" stroke="#f06a2a" stroke-width="1.8"/><rect x="5" y="12" width="2" height="2" fill="#fff"/></svg>
<svg class="a" style="left:262px;top:111px;" width="8" height="4.8" viewBox="0 0 8 4.8"><path d="M0 0 L8 0 L4.0 4.8Z" fill="#c4c4c4"/></svg>
<div class="a" style="left:277px;top:103px;width:36px;height:20px;background:#505050;border-radius:3px"></div>
<svg class="a" style="left:281px;top:106px;" width="14" height="14" viewBox="0 0 14 14"><path d="M0.5 0 V14 M13.5 0 V14 M3 3 V11 M5.5 3 V11 M8 3 V11 M10.5 3 V11 M0 7 H14" stroke="#c4c4c4" stroke-width="1"/></svg>
<svg class="a" style="left:299px;top:111px;" width="8" height="4.8" viewBox="0 0 8 4.8"><path d="M0 0 L8 0 L4.0 4.8Z" fill="#c4c4c4"/></svg>
<div class="a" style="left:563px;top:105px;width:1px;height:16px;background:#5a5a5a;"></div>
<div class="a" style="left:566px;top:105px;width:1px;height:16px;background:#5a5a5a;"></div>
<div class="a" style="left:577px;top:103px;width:36px;height:20px;background:#505050;border-radius:3px"></div>
<svg class="a" style="left:581px;top:106px;" width="14" height="14" viewBox="0 0 14 14"><circle cx="7" cy="7" r="6.3" fill="none" stroke="#c4c4c4" stroke-width="1.4"/><path d="M7 13.3 A6.3 6.3 0 0 0 13.3 7 A5 5 0 0 1 7 13.3Z" fill="#c4c4c4"/></svg>
<svg class="a" style="left:600px;top:111px;" width="8" height="4.8" viewBox="0 0 8 4.8"><path d="M0 0 L8 0 L4.0 4.8Z" fill="#c4c4c4"/></svg>
<div class="a" style="left:617px;top:103px;width:32px;height:20px;background:#505050;border-radius:3px"></div>
<div class="t" style="left:624px;top:106.75px;font-size:12.7px;color:#c4c4c4;font-weight:bold;">2D</div>
<div class="a" style="left:653px;top:103px;width:32px;height:20px;background:#46607c;border-radius:3px"></div>
<svg class="a" style="left:664px;top:106px;" width="10" height="14" viewBox="0 0 10 14"><circle cx="5" cy="5" r="4.6" fill="#e8e8e8"/><rect x="2.8" y="9" width="4.4" height="3" fill="#e8e8e8"/><rect x="3.6" y="12.5" width="2.8" height="1.5" fill="#e8e8e8"/></svg>
<div class="a" style="left:689px;top:103px;width:32px;height:20px;background:#505050;border-radius:3px"></div>
<svg class="a" style="left:699px;top:107px;" width="13" height="13" viewBox="0 0 13 13"><path d="M0 4 H3 L7 0 V13 L3 9 H0Z" fill="#b8b8b8"/><path d="M8 8 L12 12 M12 8 L8 12" stroke="#b8b8b8" stroke-width="1"/></svg>
<div class="a" style="left:725px;top:103px;width:22px;height:20px;background:#46607c;border-radius:3px 0 0 3px"></div>
<div class="a" style="left:748px;top:103px;width:14px;height:20px;background:#46607c;border-radius:0 3px 3px 0"></div>
<svg class="a" style="left:729px;top:105px;" width="14" height="15" viewBox="0 0 14 15"><path d="M0 8 L7 5 L14 8 L7 11Z M0 10.5 L7 13.5 L14 10.5" fill="none" stroke="#e8e8e8" stroke-width="1.3"/><path d="M10 0 L11 3 L14 4 L11 5 L10 8 L9 5 L6 4 L9 3Z" fill="#e8e8e8"/></svg>
<svg class="a" style="left:751px;top:111px;" width="8" height="4.8" viewBox="0 0 8 4.8"><path d="M0 0 L8 0 L4.0 4.8Z" fill="#c4c4c4"/></svg>
<div class="a" style="left:766px;top:103px;width:32px;height:20px;background:#46607c;border-radius:3px"></div>
<svg class="a" style="left:775px;top:106px;" width="15" height="15" viewBox="0 0 15 15"><path d="M1 7 Q7.5 0 14 7 Q7.5 14 1 7Z" fill="none" stroke="#e8e8e8" stroke-width="1.2"/><path d="M2 14 L13 1" stroke="#e8e8e8" stroke-width="1.3"/></svg>
<div class="a" style="left:802px;top:103px;width:36px;height:20px;background:#505050;border-radius:3px"></div>
<svg class="a" style="left:806px;top:107px;" width="13" height="13" viewBox="0 0 13 13"><rect x="0" y="2" width="9" height="9" fill="#b8b8b8"/><path d="M9 6.5 L13 3 V10Z" fill="#b8b8b8"/></svg>
<svg class="a" style="left:824px;top:111px;" width="8" height="4.8" viewBox="0 0 8 4.8"><path d="M0 0 L8 0 L4.0 4.8Z" fill="#c4c4c4"/></svg>
<div class="a" style="left:842px;top:103px;width:22px;height:20px;background:#46607c;border-radius:3px 0 0 3px"></div>
<div class="a" style="left:865px;top:103px;width:14px;height:20px;background:#46607c;border-radius:0 3px 3px 0"></div>
<svg class="a" style="left:846px;top:105px;" width="15" height="15" viewBox="0 0 15 15"><circle cx="7.5" cy="7.5" r="6.5" fill="none" stroke="#e8e8e8" stroke-width="1.3"/><path d="M7.5 1 V14 M1 7.5 H14" stroke="#e8e8e8" stroke-width="1"/><ellipse cx="7.5" cy="7.5" rx="6.5" ry="2.5" fill="none" stroke="#e8e8e8" stroke-width="1"/><circle cx="7.5" cy="1.5" r="1.6" fill="#e8e8e8"/><circle cx="2" cy="10" r="1.6" fill="#e8e8e8"/><circle cx="13" cy="10" r="1.6" fill="#e8e8e8"/></svg>
<svg class="a" style="left:868px;top:111px;" width="8" height="4.8" viewBox="0 0 8 4.8"><path d="M0 0 L8 0 L4.0 4.8Z" fill="#c4c4c4"/></svg>
<svg class="a" style="left:16px;top:645px;" width="11" height="13" viewBox="0 0 11 13"><rect x=".5" y=".5" width="10" height="12" fill="none" stroke="#c4c4c4" stroke-width="1.1"/><path d="M2.5 3.5 H8.5 M2.5 6 H8.5 M2.5 8.5 H8.5" stroke="#c4c4c4" stroke-width="1"/></svg>
<div class="t" style="left:31px;top:645.75px;font-size:12.7px;color:#c4c4c4;font-weight:normal;">Console</div>
<svg class="a" style="left:101px;top:646px;" width="14" height="10" viewBox="0 0 14 10"><path d="M3 1 H11 Q14 1 14 5 Q14 9 11 9 L9 7 H5 L3 9 Q0 9 0 5 Q0 1 3 1Z" fill="#c4c4c4"/><path d="M2.5 5 H5.5 M4 3.5 V6.5" stroke="#3c3c3c" stroke-width="1"/><circle cx="10.5" cy="5" r="1" fill="#3c3c3c"/></svg>
<div class="t" style="left:118px;top:645.75px;font-size:12.7px;color:#c4c4c4;font-weight:normal;">Game</div>
<svg class="a" style="left:179px;top:645px;" width="12" height="12" viewBox="0 0 12 12"><circle cx="6" cy="6" r="6" fill="#c4c4c4"/><path d="M6 2.5 V6 H9" fill="none" stroke="#282828" stroke-width="1.5"/></svg>
<div class="t" style="left:195px;top:645.75px;font-size:12.7px;color:#c4c4c4;font-weight:normal;">Animation</div>
<svg class="a" style="left:868px;top:646px;" width="2" height="10" viewBox="0 0 2 10"><rect x="0" y="0" width="2" height="2" fill="#c4c4c4"/><rect x="0" y="4" width="2" height="2" fill="#c4c4c4"/><rect x="0" y="8" width="2" height="2" fill="#c4c4c4"/></svg>
<div class="a" style="left:8px;top:662px;width:90px;height:19px;background:#3c3c3c;"></div>
<div class="a" style="left:99px;top:662px;width:84px;height:19px;background:#3c3c3c;"></div>
<div class="a" style="left:185px;top:662px;width:159px;height:19px;background:#3c3c3c;"></div>
<div class="a" style="left:346px;top:662px;width:238px;height:19px;background:#3c3c3c;"></div>
<div class="a" style="left:586px;top:662px;width:108px;height:19px;background:#3c3c3c;"></div>
<div class="a" style="left:697px;top:662px;width:23px;height:19px;background:#3c3c3c;"></div>
<div class="a" style="left:721px;top:662px;width:24px;height:19px;background:#3c3c3c;"></div>
<div class="a" style="left:746px;top:662px;width:28px;height:19px;background:#3c3c3c;"></div>
<div class="a" style="left:775px;top:662px;width:37px;height:19px;background:#3c3c3c;"></div>
<div class="a" style="left:813px;top:662px;width:57px;height:19px;background:#3c3c3c;"></div>
<div class="a" style="left:98px;top:662px;width:1px;height:19px;background:#2a2a2a;"></div>
<div class="a" style="left:183px;top:662px;width:1px;height:19px;background:#2a2a2a;"></div>
<div class="a" style="left:344px;top:662px;width:1px;height:19px;background:#2a2a2a;"></div>
<div class="a" style="left:584px;top:662px;width:1px;height:19px;background:#2a2a2a;"></div>
<div class="a" style="left:694px;top:662px;width:1px;height:19px;background:#2a2a2a;"></div>
<div class="a" style="left:720px;top:662px;width:1px;height:19px;background:#2a2a2a;"></div>
<div class="a" style="left:745px;top:662px;width:1px;height:19px;background:#2a2a2a;"></div>
<div class="a" style="left:774px;top:662px;width:1px;height:19px;background:#2a2a2a;"></div>
<div class="a" style="left:812px;top:662px;width:1px;height:19px;background:#2a2a2a;"></div>
<div class="t" style="left:11px;top:665.25px;font-size:12.7px;color:#c4c4c4;font-weight:normal;">Game</div>
<svg class="a" style="left:86px;top:669px;" width="8" height="4.8" viewBox="0 0 8 4.8"><path d="M0 0 L8 0 L4.0 4.8Z" fill="#c4c4c4"/></svg>
<div class="t" style="left:107px;top:665.25px;font-size:12.7px;color:#c4c4c4;font-weight:normal;">Display 1</div>
<svg class="a" style="left:171px;top:669px;" width="8" height="4.8" viewBox="0 0 8 4.8"><path d="M0 0 L8 0 L4.0 4.8Z" fill="#c4c4c4"/></svg>
<div class="t" style="left:188px;top:665.25px;font-size:12.7px;color:#c4c4c4;font-weight:normal;">Free Aspect</div>
<svg class="a" style="left:331px;top:669px;" width="8" height="4.8" viewBox="0 0 8 4.8"><path d="M0 0 L8 0 L4.0 4.8Z" fill="#c4c4c4"/></svg>
<div class="t" style="left:351px;top:665.25px;font-size:12.7px;color:#c4c4c4;font-weight:normal;">Scale</div>
<div class="a" style="left:395px;top:670px;width:147px;height:2px;background:#5a5a5a;"></div>
<svg class="a" style="left:389px;top:666px;" width="10" height="10" viewBox="0 0 10 10"><circle cx="5" cy="5" r="5" fill="#999"/></svg>
<div class="t" style="left:544px;top:665.25px;font-size:12.7px;color:#c4c4c4;font-weight:normal;">1x</div>
<div class="t" style="left:589px;top:665.25px;font-size:12.7px;color:#c4c4c4;font-weight:normal;">Play Focused</div>
<svg class="a" style="left:682px;top:669px;" width="8" height="4.8" viewBox="0 0 8 4.8"><path d="M0 0 L8 0 L4.0 4.8Z" fill="#c4c4c4"/></svg>
<svg class="a" style="left:702px;top:664px;" width="13" height="14" viewBox="0 0 13 14"><path d="M3 5 Q3 1 6.5 1 Q10 1 10 5 V10 Q10 13 6.5 13 Q3 13 3 10Z" fill="#c4c4c4"/><path d="M0 4 L3 6 M0 9 H3 M0 13 L3 11 M13 4 L10 6 M13 9 H10 M13 13 L10 11 M4 4 H9" stroke="#c4c4c4" stroke-width="1.2"/></svg>
<svg class="a" style="left:727px;top:665px;" width="13" height="13" viewBox="0 0 13 13"><path d="M0 4 H3 L6 1 V12 L3 9 H0Z" fill="#c4c4c4"/><path d="M8 4 Q10 6.5 8 9 M10 2 Q13 6.5 10 11" fill="none" stroke="#c4c4c4" stroke-width="1.2"/></svg>
<svg class="a" style="left:753px;top:666px;" width="15" height="11" viewBox="0 0 15 11"><rect x=".5" y=".5" width="14" height="10" fill="none" stroke="#c4c4c4" stroke-width="1.1"/><path d="M2.5 3 H4 M5.5 3 H7 M8.5 3 H10 M11 3 H12.5 M2.5 5.5 H4 M5.5 5.5 H7 M8.5 5.5 H10 M11 5.5 H12.5 M4 8 H11" stroke="#c4c4c4" stroke-width="1.2"/></svg>
<div class="t" style="left:778px;top:665.25px;font-size:12.7px;color:#c4c4c4;font-weight:normal;">Stats</div>
<div class="t" style="left:816px;top:665.25px;font-size:12.7px;color:#c4c4c4;font-weight:normal;">Gizmos</div>
<svg class="a" style="left:870px;top:669px;" width="8" height="4.8" viewBox="0 0 8 4.8"><path d="M0 0 L8 0 L4.0 4.8Z" fill="#c4c4c4"/></svg>
<div class="a" style="left:884px;top:642px;width:1px;height:40px;background:#191919;"></div>
<svg class="a" style="left:894px;top:86px;" width="12" height="11" viewBox="0 0 12 11"><path d="M4 1.5 H12 M4 5.5 H12 M4 9.5 H12" stroke="#c4c4c4" stroke-width="1.2"/><path d="M0 1.5 H2 M1 .5 V2.5" stroke="#c4c4c4" stroke-width="1"/><path d="M1 3 V9.5 H2.5 M1 5.5 H2.5" fill="none" stroke="#c4c4c4" stroke-width=".9"/></svg>
<div class="t" style="left:909px;top:84.75px;font-size:12.7px;color:#c4c4c4;font-weight:normal;">Hierarchy</div>
<svg class="a" style="left:1462px;top:85px;" width="9" height="11" viewBox="0 0 9 11"><rect x=".5" y="5.5" width="8" height="5" fill="none" stroke="#c4c4c4" stroke-width="1.1"/><path d="M2 5 V3 Q4.5 -.5 7 3" fill="none" stroke="#c4c4c4" stroke-width="1.1"/></svg>
<svg class="a" style="left:1483px;top:85px;" width="2" height="10" viewBox="0 0 2 10"><rect x="0" y="0" width="2" height="2" fill="#c4c4c4"/><rect x="0" y="4" width="2" height="2" fill="#c4c4c4"/><rect x="0" y="8" width="2" height="2" fill="#c4c4c4"/></svg>
<svg class="a" style="left:891px;top:104px;" width="12" height="12" viewBox="0 0 12 12"><path d="M6 0 V12 M0 6 H12" stroke="#d0d0d0" stroke-width="1.8"/></svg>
<svg class="a" style="left:909px;top:108px;" width="7" height="4.2" viewBox="0 0 7 4.2"><path d="M0 0 L7 0 L3.5 4.2Z" fill="#c4c4c4"/></svg>
<div class="a" style="left:1167px;top:102px;width:326px;height:16px;background:#2a2a2a;border-radius:4px;border:1px solid #212121"></div>
<svg class="a" style="left:1172px;top:106px;" width="11" height="9" viewBox="0 0 11 9"><circle cx="3.5" cy="3.5" r="2.8" fill="none" stroke="#c4c4c4" stroke-width="1.3"/><path d="M5.5 5.5 L8 8" stroke="#c4c4c4" stroke-width="1.5"/><path d="M8 4 H11 L9.5 5.5Z" fill="#c4c4c4"/></svg>
<div class="t" style="left:1186px;top:103.75px;font-size:12.7px;color:#808080;font-weight:normal;">All</div>
<div class="a" style="left:1476px;top:103px;width:16px;height:14px;background:#383838;border-radius:0 3px 3px 0"></div>
<svg class="a" style="left:1478px;top:103px;" width="14" height="14" viewBox="0 0 14 14"><rect x="4.5" y=".5" width="9" height="9" fill="none" stroke="#c4c4c4" stroke-width="1.1"/><rect x=".5" y="9.5" width="4" height="4" fill="none" stroke="#c4c4c4" stroke-width="1.1"/><path d="M6 8 L11 3 M8 3 H11 V6" fill="none" stroke="#c4c4c4" stroke-width="1"/></svg>
<div class="a" style="left:885px;top:120px;width:611px;height:16px;background:#2b2b2b;"></div>
<div class="a" style="left:885px;top:136px;width:32px;height:504px;background:#333333;"></div>
<svg class="a" style="left:919px;top:125px;" width="9" height="5.3999999999999995" viewBox="0 0 9 5.3999999999999995"><path d="M0 0 L9 0 L4.5 5.3999999999999995Z" fill="#8a8a8a"/></svg>
<svg class="a" style="left:932px;top:121px;" width="14" height="14" viewBox="0 0 14 14"><path d="M7 0.5 L13 4 L13 10 L7 13.5 L1 10 L1 4Z" fill="#e6e6e6"/><path d="M7 2.5 V7 M7 7 L3 9.5 M7 7 L11 9.5" stroke="#2b2b2b" stroke-width="2"/><path d="M7 4.5 L4.5 3.2 M7 4.5 L9.5 3.2" stroke="#2b2b2b" stroke-width="1"/></svg>
<div class="t" style="left:950px;top:121.66px;font-size:13.4px;color:#dcdcdc;font-weight:bold;">SampleScene*</div>
<svg class="a" style="left:1483px;top:124px;" width="2" height="10" viewBox="0 0 2 10"><rect x="0" y="0" width="2" height="2" fill="#c4c4c4"/><rect x="0" y="4" width="2" height="2" fill="#c4c4c4"/><rect x="0" y="8" width="2" height="2" fill="#c4c4c4"/></svg>
<svg class="a" style="left:946px;top:139px;" width="14" height="14" viewBox="0 0 14 14"><g transform="scale(1.0)"><path d="M7 1 L13 4 L13 10.5 L7 13.5 L1 10.5 L1 4Z M1 4 L7 7 L13 4 M7 7 V13.5" fill="none" stroke="#c4c4c4" stroke-width="1.1" stroke-linejoin="round"/></g></svg>
<div class="t" style="left:963px;top:139.08px;font-size:12.9px;color:#c4c4c4;font-weight:normal;">Main Camera</div>
<svg class="a" style="left:946px;top:155px;" width="14" height="14" viewBox="0 0 14 14"><g transform="scale(1.0)"><path d="M7 1 L13 4 L13 10.5 L7 13.5 L1 10.5 L1 4Z M1 4 L7 7 L13 4 M7 7 V13.5" fill="none" stroke="#c4c4c4" stroke-width="1.1" stroke-linejoin="round"/></g></svg>
<div class="t" style="left:963px;top:155.08px;font-size:12.9px;color:#c4c4c4;font-weight:normal;">Directional Light</div>
<svg class="a" style="left:946px;top:171px;" width="14" height="14" viewBox="0 0 14 14"><g transform="scale(1.0)"><path d="M7 1 L13 4 L13 10.5 L7 13.5 L1 10.5 L1 4Z M1 4 L7 7 L13 4 M7 7 V13.5" fill="none" stroke="#c4c4c4" stroke-width="1.1" stroke-linejoin="round"/></g></svg>
<div class="t" style="left:963px;top:171.08px;font-size:12.9px;color:#c4c4c4;font-weight:normal;">Plane</div>
<svg class="a" style="left:946px;top:187px;" width="14" height="14" viewBox="0 0 14 14"><g transform="scale(1.0)"><path d="M7 1 L13 4 L13 10.5 L7 13.5 L1 10.5 L1 4Z M1 4 L7 7 L13 4 M7 7 V13.5" fill="none" stroke="#c4c4c4" stroke-width="1.1" stroke-linejoin="round"/></g></svg>
<div class="t" style="left:963px;top:187.08px;font-size:12.9px;color:#c4c4c4;font-weight:normal;">Cube</div>
<svg class="a" style="left:946px;top:203px;" width="14" height="14" viewBox="0 0 14 14"><g transform="scale(1.0)"><path d="M7 1 L13 4 L13 10.5 L7 13.5 L1 10.5 L1 4Z M1 4 L7 7 L13 4 M7 7 V13.5" fill="none" stroke="#c4c4c4" stroke-width="1.1" stroke-linejoin="round"/></g></svg>
<div class="t" style="left:963px;top:203.08px;font-size:12.9px;color:#c4c4c4;font-weight:normal;">Cube (1)</div>
<svg class="a" style="left:946px;top:219px;" width="14" height="14" viewBox="0 0 14 14"><g transform="scale(1.0)"><path d="M7 1 L13 4 L13 10.5 L7 13.5 L1 10.5 L1 4Z M1 4 L7 7 L13 4 M7 7 V13.5" fill="none" stroke="#c4c4c4" stroke-width="1.1" stroke-linejoin="round"/></g></svg>
<div class="t" style="left:963px;top:219.08px;font-size:12.9px;color:#c4c4c4;font-weight:normal;">Cube (2)</div>
<svg class="a" style="left:946px;top:235px;" width="14" height="14" viewBox="0 0 14 14"><g transform="scale(1.0)"><path d="M7 1 L13 4 L13 10.5 L7 13.5 L1 10.5 L1 4Z M1 4 L7 7 L13 4 M7 7 V13.5" fill="none" stroke="#c4c4c4" stroke-width="1.1" stroke-linejoin="round"/></g></svg>
<div class="t" style="left:963px;top:235.08px;font-size:12.9px;color:#c4c4c4;font-weight:normal;">Network Manager</div>
<svg class="a" style="left:946px;top:251px;" width="14" height="14" viewBox="0 0 14 14"><g transform="scale(1.0)"><path d="M7 1 L13 4 L13 10.5 L7 13.5 L1 10.5 L1 4Z M1 4 L7 7 L13 4 M7 7 V13.5" fill="none" stroke="#c4c4c4" stroke-width="1.1" stroke-linejoin="round"/></g></svg>
<div class="t" style="left:963px;top:251.08px;font-size:12.9px;color:#c4c4c4;font-weight:normal;">Network UI</div>
<svg class="a" style="left:933px;top:252px;" width="9" height="5.3999999999999995" viewBox="0 0 9 5.3999999999999995"><path d="M0 0 L9 0 L4.5 5.3999999999999995Z" fill="#8a8a8a"/></svg>
<div class="a" style="left:885px;top:265px;width:611px;height:16px;background:#2c5d87;"></div>
<div class="a" style="left:885px;top:265px;width:32px;height:16px;background:#365a80;"></div>
<svg class="a" style="left:887px;top:267px;" width="12" height="10" viewBox="0 0 12 10"><path d="M0 5 Q6 -1 12 5 Q6 11 0 5Z" fill="none" stroke="#7a9cbb" stroke-width="1.1"/><circle cx="6" cy="5" r="2.2" fill="#7a9cbb"/></svg>
<svg class="a" style="left:904px;top:266px;" width="10" height="12" viewBox="0 0 10 12"><path d="M3 11 L1 6 Q1 5 2 5.5 L3.5 7 V1 Q3.5 0 4.5 0 Q5.5 0 5.5 1 V5 V1.5 Q5.5 .5 6.5 .5 Q7.5 .5 7.5 1.5 V5 Q8 4 9 4.5 Q10 5 10 6 V8 Q10 12 7 12H4Z" fill="#7a9cbb"/></svg>
<svg class="a" style="left:960px;top:266px;" width="14" height="14" viewBox="0 0 14 14"><g transform="scale(1.0)"><path d="M7 1 L13 4 L13 10.5 L7 13.5 L1 10.5 L1 4Z M1 4 L7 7 L13 4 M7 7 V13.5" fill="none" stroke="#e8e8e8" stroke-width="1.1" stroke-linejoin="round"/></g></svg>
<div class="t" style="left:977px;top:267.08px;font-size:12.9px;color:#ffffff;font-weight:normal;">Panel</div>
<svg class="a" style="left:946px;top:282px;" width="14" height="14" viewBox="0 0 14 14"><g transform="scale(1.0)"><path d="M7 1 L13 4 L13 10.5 L7 13.5 L1 10.5 L1 4Z M1 4 L7 7 L13 4 M7 7 V13.5" fill="none" stroke="#c4c4c4" stroke-width="1.1" stroke-linejoin="round"/></g></svg>
<div class="t" style="left:963px;top:283.08px;font-size:12.9px;color:#c4c4c4;font-weight:normal;">EventSystem</div>
<svg class="a" style="left:893px;top:646px;" width="12" height="11" viewBox="0 0 12 11"><path d="M0 1 H4.5 L6 2.5 H12 V11 H0Z" fill="#c4c4c4"/></svg>
<div class="t" style="left:909px;top:645.75px;font-size:12.7px;color:#c4c4c4;font-weight:normal;">Project</div>
<svg class="a" style="left:1462px;top:646px;" width="9" height="11" viewBox="0 0 9 11"><rect x=".5" y="5.5" width="8" height="5" fill="none" stroke="#c4c4c4" stroke-width="1.1"/><path d="M2 5 V3 Q4.5 -.5 7 3" fill="none" stroke="#c4c4c4" stroke-width="1.1"/></svg>
<svg class="a" style="left:1483px;top:646px;" width="2" height="10" viewBox="0 0 2 10"><rect x="0" y="0" width="2" height="2" fill="#c4c4c4"/><rect x="0" y="4" width="2" height="2" fill="#c4c4c4"/><rect x="0" y="8" width="2" height="2" fill="#c4c4c4"/></svg>
<svg class="a" style="left:892px;top:665px;" width="12" height="12" viewBox="0 0 12 12"><path d="M6 0 V12 M0 6 H12" stroke="#d0d0d0" stroke-width="1.8"/></svg>
<svg class="a" style="left:910px;top:669px;" width="7" height="4.2" viewBox="0 0 7 4.2"><path d="M0 0 L7 0 L3.5 4.2Z" fill="#c4c4c4"/></svg>
<div class="a" style="left:885px;top:681px;width:208px;height:1px;background:#2e2e2e;"></div>
<div class="a" style="left:1093px;top:682px;width:1px;height:344px;background:#232323;"></div>
<div class="a" style="left:1094px;top:682px;width:402px;height:344px;background:#333333;"></div>
<div class="a" style="left:1094px;top:1005px;width:402px;height:21px;background:#3a3a3a;"></div>
<div class="a" style="left:1266px;top:663px;width:82px;height:16px;background:#262626;border-radius:0 4px 4px 0;border:1px solid #1e1e1e;border-left:none"></div>
<div class="a" style="left:1331px;top:664px;width:16px;height:14px;background:#303030;border-radius:0 3px 3px 0"></div>
<svg class="a" style="left:1333px;top:664px;" width="14" height="14" viewBox="0 0 14 14"><rect x="4.5" y=".5" width="9" height="9" fill="none" stroke="#c4c4c4" stroke-width="1.1"/><rect x=".5" y="9.5" width="4" height="4" fill="none" stroke="#c4c4c4" stroke-width="1.1"/><path d="M6 8 L11 3 M8 3 H11 V6" fill="none" stroke="#c4c4c4" stroke-width="1"/></svg>
<div class="a" style="left:1350px;top:661px;width:1px;height:21px;background:#2a2a2a;"></div>
<div class="a" style="left:1376px;top:661px;width:1px;height:21px;background:#2a2a2a;"></div>
<div class="a" style="left:1402px;top:661px;width:1px;height:21px;background:#2a2a2a;"></div>
<div class="a" style="left:1428px;top:661px;width:1px;height:21px;background:#2a2a2a;"></div>
<div class="a" style="left:1454px;top:661px;width:1px;height:21px;background:#2a2a2a;"></div>
<svg class="a" style="left:1357px;top:664px;" width="12" height="13" viewBox="0 0 12 13"><rect x="2" y="0" width="6" height="6" fill="#c4c4c4"/><circle cx="3.5" cy="9.5" r="3.5" fill="#c4c4c4"/><path d="M8.5 5 L12 10 H7Z" fill="#c4c4c4"/></svg>
<svg class="a" style="left:1382px;top:665px;" width="12" height="12" viewBox="0 0 12 12"><path d="M0 7 L6 1 H11 V6 L5 12Z" fill="#c4c4c4"/><circle cx="8.5" cy="3.5" r="1" fill="#3c3c3c"/></svg>
<svg class="a" style="left:1408px;top:664px;" width="13" height="13" viewBox="0 0 13 13"><path d="M4 0 H9 L13 4 V9 L9 13 H4 L0 9 V4Z" fill="#c4c4c4"/><rect x="5.7" y="2.5" width="1.7" height="6" fill="#3c3c3c"/><rect x="5.7" y="9.5" width="1.7" height="1.7" fill="#3c3c3c"/></svg>
<svg class="a" style="left:1434px;top:665px;" width="13" height="12" viewBox="0 0 13 12"><path d="M6.5 0 L8.2 4.5 H13 L9.2 7.3 L10.6 12 L6.5 9 L2.4 12 L3.8 7.3 L0 4.5 H4.8Z" fill="#8a8a8a"/></svg>
<svg class="a" style="left:1459px;top:665px;" width="14" height="12" viewBox="0 0 14 12"><path d="M1 6 Q7 0 13 6 Q7 12 1 6Z" fill="none" stroke="#c4c4c4" stroke-width="1.1"/><path d="M2 12 L12 0" stroke="#c4c4c4" stroke-width="1.2"/></svg>
<div class="t" style="left:1474px;top:665.25px;font-size:12.7px;color:#c4c4c4;font-weight:normal;">23</div>
<svg class="a" style="left:889px;top:686px;" width="9" height="5.3999999999999995" viewBox="0 0 9 5.3999999999999995"><path d="M0 0 L9 0 L4.5 5.3999999999999995Z" fill="#8a8a8a"/></svg>
<svg class="a" style="left:902px;top:684px;" width="12" height="11" viewBox="0 0 12 11"><path d="M6 0 L7.6 4 H12 L8.5 6.7 L9.8 11 L6 8.4 L2.2 11 L3.5 6.7 L0 4 H4.4Z" fill="#c4c4c4"/></svg>
<div class="t" style="left:920px;top:683.66px;font-size:13.4px;color:#d0d0d0;font-weight:bold;">Favorites</div>
<svg class="a" style="left:918px;top:700px;" width="11" height="11" viewBox="0 0 11 11"><circle cx="4.5" cy="4.5" r="4" fill="none" stroke="#c4c4c4" stroke-width="1.2"/><path d="M7.5 7.5 L11 11" stroke="#c4c4c4" stroke-width="1.4"/></svg>
<div class="t" style="left:933px;top:700.08px;font-size:12.9px;color:#c4c4c4;font-weight:normal;">All Materials</div>
<svg class="a" style="left:918px;top:716px;" width="11" height="11" viewBox="0 0 11 11"><circle cx="4.5" cy="4.5" r="4" fill="none" stroke="#c4c4c4" stroke-width="1.2"/><path d="M7.5 7.5 L11 11" stroke="#c4c4c4" stroke-width="1.4"/></svg>
<div class="t" style="left:933px;top:716.08px;font-size:12.9px;color:#c4c4c4;font-weight:normal;">All Models</div>
<svg class="a" style="left:918px;top:732px;" width="11" height="11" viewBox="0 0 11 11"><circle cx="4.5" cy="4.5" r="4" fill="none" stroke="#c4c4c4" stroke-width="1.2"/><path d="M7.5 7.5 L11 11" stroke="#c4c4c4" stroke-width="1.4"/></svg>
<div class="t" style="left:933px;top:732.08px;font-size:12.9px;color:#c4c4c4;font-weight:normal;">All Prefabs</div>
<div class="a" style="left:885px;top:761px;width:208px;height:16px;background:#454545;"></div>
<svg class="a" style="left:889px;top:765px;" width="9" height="5.3999999999999995" viewBox="0 0 9 5.3999999999999995"><path d="M0 0 L9 0 L4.5 5.3999999999999995Z" fill="#8a8a8a"/></svg>
<svg class="a" style="left:903px;top:763px;" width="13" height="11" viewBox="0 0 13 11"><path d="M0 1 H4.5 L6 2.5 H11 V4 H3 L0 11Z" fill="#c4c4c4"/><path d="M3 5 H13 L10 11 H0Z" fill="#c4c4c4"/></svg>
<div class="t" style="left:920px;top:762.66px;font-size:13.4px;color:#d0d0d0;font-weight:bold;">Assets</div>
<svg class="a" style="left:917px;top:779px;" width="12" height="11" viewBox="0 0 12 11"><path d="M0 1 H4.5 L6 2.5 H12 V11 H0Z" fill="#c4c4c4"/></svg>
<div class="t" style="left:933px;top:779.08px;font-size:12.9px;color:#c4c4c4;font-weight:normal;">Materials</div>
<svg class="a" style="left:917px;top:795px;" width="12" height="11" viewBox="0 0 12 11"><path d="M0 1 H4.5 L6 2.5 H12 V11 H0Z" fill="#c4c4c4"/></svg>
<div class="t" style="left:933px;top:795.08px;font-size:12.9px;color:#c4c4c4;font-weight:normal;">Prefab</div>
<svg class="a" style="left:904px;top:813px;" width="9" height="5.3999999999999995" viewBox="0 0 9 5.3999999999999995"><path d="M0 0 L9 0 L4.5 5.3999999999999995Z" fill="#8a8a8a"/></svg>
<svg class="a" style="left:917px;top:811px;" width="13" height="11" viewBox="0 0 13 11"><path d="M0 1 H4.5 L6 2.5 H11 V4 H3 L0 11Z" fill="#c4c4c4"/><path d="M3 5 H13 L10 11 H0Z" fill="#c4c4c4"/></svg>
<div class="t" style="left:933px;top:811.08px;font-size:12.9px;color:#c4c4c4;font-weight:normal;">Samples</div>
<svg class="a" style="left:919px;top:829px;" width="9" height="5.3999999999999995" viewBox="0 0 9 5.3999999999999995"><path d="M0 0 L9 0 L4.5 5.3999999999999995Z" fill="#8a8a8a"/></svg>
<svg class="a" style="left:931px;top:827px;" width="13" height="11" viewBox="0 0 13 11"><path d="M0 1 H4.5 L6 2.5 H11 V4 H3 L0 11Z" fill="#c4c4c4"/><path d="M3 5 H13 L10 11 H0Z" fill="#c4c4c4"/></svg>
<div class="t" style="left:947px;top:827.08px;font-size:12.9px;color:#c4c4c4;font-weight:normal;">ProBuilder</div>
<svg class="a" style="left:934px;top:845px;" width="9" height="5.3999999999999995" viewBox="0 0 9 5.3999999999999995"><path d="M0 0 L9 0 L4.5 5.3999999999999995Z" fill="#8a8a8a"/></svg>
<svg class="a" style="left:945px;top:843px;" width="13" height="11" viewBox="0 0 13 11"><path d="M0 1 H4.5 L6 2.5 H11 V4 H3 L0 11Z" fill="#c4c4c4"/><path d="M3 5 H13 L10 11 H0Z" fill="#c4c4c4"/></svg>
<div class="t" style="left:961px;top:843.08px;font-size:12.9px;color:#c4c4c4;font-weight:normal;">5.0.7</div>
<svg class="a" style="left:949px;top:861px;" width="9" height="5.3999999999999995" viewBox="0 0 9 5.3999999999999995"><path d="M0 0 L9 0 L4.5 5.3999999999999995Z" fill="#8a8a8a"/></svg>
<svg class="a" style="left:959px;top:859px;" width="13" height="11" viewBox="0 0 13 11"><path d="M0 1 H4.5 L6 2.5 H11 V4 H3 L0 11Z" fill="#c4c4c4"/><path d="M3 5 H13 L10 11 H0Z" fill="#c4c4c4"/></svg>
<div class="t" style="left:975px;top:859.08px;font-size:12.9px;color:#c4c4c4;font-weight:normal;">Universal Render Pipeline</div>
<svg class="a" style="left:973px;top:875px;" width="12" height="11" viewBox="0 0 12 11"><path d="M0 1 H4.5 L6 2.5 H12 V11 H0Z" fill="#c4c4c4"/></svg>
<div class="t" style="left:989px;top:875.08px;font-size:12.9px;color:#c4c4c4;font-weight:normal;">Materials</div>
<svg class="a" style="left:973px;top:891px;" width="12" height="11" viewBox="0 0 12 11"><path d="M0 1 H4.5 L6 2.5 H12 V11 H0Z" fill="#c4c4c4"/></svg>
<div class="t" style="left:989px;top:891.08px;font-size:12.9px;color:#c4c4c4;font-weight:normal;">Shaders</div>
<svg class="a" style="left:917px;top:907px;" width="12" height="11" viewBox="0 0 12 11"><path d="M0 1 H4.5 L6 2.5 H12 V11 H0Z" fill="#c4c4c4"/></svg>
<div class="t" style="left:933px;top:907.08px;font-size:12.9px;color:#c4c4c4;font-weight:normal;">Scenes</div>
<svg class="a" style="left:917px;top:923px;" width="12" height="11" viewBox="0 0 12 11"><path d="M0 1 H4.5 L6 2.5 H12 V11 H0Z" fill="#c4c4c4"/></svg>
<div class="t" style="left:933px;top:923.08px;font-size:12.9px;color:#c4c4c4;font-weight:normal;">Scripts</div>
<svg class="a" style="left:889px;top:940px;" width="8" height="8" viewBox="0 0 8 8"><path d="M0 0 L6.8 4.0 L0 8Z" fill="#8a8a8a"/></svg>
<svg class="a" style="left:903px;top:939px;" width="12" height="11" viewBox="0 0 12 11"><path d="M0 1 H4.5 L6 2.5 H12 V11 H0Z" fill="#c4c4c4"/></svg>
<div class="t" style="left:920px;top:938.66px;font-size:13.4px;color:#d0d0d0;font-weight:bold;">Packages</div>
<div class="a" style="left:885px;top:1026px;width:611px;height:14px;background:#191919;"></div>
<svg class="a" style="left:1507px;top:85px;" width="11" height="11" viewBox="0 0 11 11"><circle cx="5.5" cy="5.5" r="5.5" fill="#c4c4c4"/><rect x="4.6" y="4.5" width="1.8" height="5" fill="#3c3c3c"/><rect x="4.6" y="2" width="1.8" height="1.7" fill="#3c3c3c"/></svg>
<div class="t" style="left:1522px;top:85.75px;font-size:12.7px;color:#c4c4c4;font-weight:normal;">Inspector</div>
<svg class="a" style="left:1887px;top:85px;" width="9" height="11" viewBox="0 0 9 11"><rect x=".5" y="5.5" width="8" height="5" fill="none" stroke="#c4c4c4" stroke-width="1.1"/><path d="M2 5 V3 Q4.5 -.5 7 3" fill="none" stroke="#c4c4c4" stroke-width="1.1"/></svg>
<svg class="a" style="left:1912px;top:85px;" width="2" height="10" viewBox="0 0 2 10"><rect x="0" y="0" width="2" height="2" fill="#c4c4c4"/><rect x="0" y="4" width="2" height="2" fill="#c4c4c4"/><rect x="0" y="8" width="2" height="2" fill="#c4c4c4"/></svg>
<svg class="a" style="left:1505px;top:110px;" width="20" height="21" viewBox="0 0 20 21"><path d="M10 1 L19 5.5 L19 15 L10 19.5 L1 15 L1 5.5Z M1 5.5 L10 10 L19 5.5 M10 10 V19.5" fill="none" stroke="#c4c4c4" stroke-width="1.3" stroke-linejoin="round"/></svg>
<svg class="a" style="left:1523px;top:130px;" width="7" height="4.2" viewBox="0 0 7 4.2"><path d="M0 0 L7 0 L3.5 4.2Z" fill="#c4c4c4"/></svg>
<div class="a" style="left:1546px;top:111px;width:14px;height:14px;background:#2a2a2a;border-radius:3px;border:1px solid #212121"></div>
<svg class="a" style="left:1546px;top:111px;" width="14" height="14" viewBox="0 0 14 14"><path d="M2.5 7 L5.5 10 L11.5 3.5" fill="none" stroke="#e8e8e8" stroke-width="1.6"/></svg>
<div class="a" style="left:1566px;top:109px;width:280px;height:18px;background:#2a2a2a;border-radius:3px;border:1px solid #212121"></div>
<div class="t" style="left:1570px;top:111.66px;font-size:13.4px;color:#e0e0e0;font-weight:bold;">Panel</div>
<div class="a" style="left:1851px;top:111px;width:14px;height:14px;background:#2a2a2a;border-radius:3px;border:1px solid #212121"></div>
<div class="t" style="left:1868px;top:112.08px;font-size:12.9px;color:#c4c4c4;font-weight:normal;">Static</div>
<svg class="a" style="left:1913px;top:116px;" width="7" height="4.2" viewBox="0 0 7 4.2"><path d="M0 0 L7 0 L3.5 4.2Z" fill="#c4c4c4"/></svg>
<div class="t" style="left:1538px;top:135.58px;font-size:12.9px;color:#a8a8a8;font-weight:normal;">Tag</div>
<div class="a" style="left:1566px;top:133px;width:159px;height:17px;background:#515151;border-radius:3px;border:1px solid #303030"></div>
<div class="t" style="left:1570px;top:135.58px;font-size:12.9px;color:#d2d2d2;font-weight:normal;">Untagged</div>
<svg class="a" style="left:1712px;top:139px;" width="8" height="4.8" viewBox="0 0 8 4.8"><path d="M0 0 L8 0 L4.0 4.8Z" fill="#c4c4c4"/></svg>
<div class="t" style="left:1737px;top:135.58px;font-size:12.9px;color:#a8a8a8;font-weight:normal;">Layer</div>
<div class="a" style="left:1777px;top:133px;width:150px;height:17px;background:#515151;border-radius:3px;border:1px solid #303030"></div>
<div class="t" style="left:1781px;top:135.58px;font-size:12.9px;color:#d2d2d2;font-weight:normal;">UI</div>
<svg class="a" style="left:1910px;top:139px;" width="8" height="4.8" viewBox="0 0 8 4.8"><path d="M0 0 L8 0 L4.0 4.8Z" fill="#c4c4c4"/></svg>
<div class="a" style="left:1498px;top:159px;width:422px;height:1px;background:#232323;"></div>
<div class="a" style="left:1498px;top:160px;width:422px;height:21px;background:#3e3e3e;"></div>
<div class="a" style="left:1498px;top:180px;width:422px;height:1px;background:#2f2f2f;"></div>
<svg class="a" style="left:1504px;top:167px;" width="9" height="5.3999999999999995" viewBox="0 0 9 5.3999999999999995"><path d="M0 0 L9 0 L4.5 5.3999999999999995Z" fill="#8a8a8a"/></svg>
<svg class="a" style="left:1520px;top:164px;" width="12" height="12" viewBox="0 0 12 12"><path d="M4.5 4.5 L1 1 M1 4 V1 H4 M7.5 4.5 L11 1 M8 1 H11 V4 M4.5 7.5 L1 11 M1 8 V11 H4 M7.5 7.5 L11 11 M11 8 V11 H8" fill="none" stroke="#c4c4c4" stroke-width="1.8"/></svg>
<div class="t" style="left:1557px;top:163.20px;font-size:13.7px;color:#d8d8d8;font-weight:bold;">Rect Transform</div>
<svg class="a" style="left:1868px;top:164px;" width="12" height="12" viewBox="0 0 12 12"><circle cx="6" cy="6" r="6" fill="#c4c4c4"/><path d="M4 4.5 Q4 2.5 6 2.5 Q8 2.5 8 4.3 Q8 5.5 6.5 6.2 V7.5" fill="none" stroke="#3c3c3c" stroke-width="1.5"/><rect x="5.6" y="8.5" width="1.6" height="1.6" fill="#3c3c3c"/></svg>
<svg class="a" style="left:1889px;top:164px;" width="12" height="12" viewBox="0 0 12 12"><path d="M0 3 H12 M0 9 H12" stroke="#c4c4c4" stroke-width="1.2"/><path d="M4 0 V6 M8 6 V12" stroke="#c4c4c4" stroke-width="1.6"/></svg>
<svg class="a" style="left:1913px;top:165px;" width="2" height="10" viewBox="0 0 2 10"><rect x="0" y="0" width="2" height="2" fill="#c4c4c4"/><rect x="0" y="4" width="2" height="2" fill="#c4c4c4"/><rect x="0" y="8" width="2" height="2" fill="#c4c4c4"/></svg>
<div class="t" style="left:1534px;top:191.27px;font-size:11.5px;color:#b4b4b4;font-weight:normal;">left</div>
<svg class="a" style="left:1516px;top:235px;" width="1" height="1" viewBox="0 0 1 1"><text x="0" y="0" font-family="Liberation Sans" font-size="11.5" fill="#b4b4b4" transform="rotate(-90)">top</text></svg>
<div class="a" style="left:1525px;top:209px;width:35px;height:35px;background:transparent;border:1px solid #b45252"></div>
<div class="a" style="left:1534px;top:218px;width:18px;height:18px;background:transparent;border:1px solid #c4c4c4"></div>
<div class="a" style="left:1524px;top:208px;width:3px;height:3px;background:#e0b020;"></div>
<div class="t" style="left:1669px;top:190.08px;font-size:12.9px;color:#c4c4c4;font-weight:normal;">Pos X</div>
<div class="t" style="left:1755px;top:190.08px;font-size:12.9px;color:#c4c4c4;font-weight:normal;">Pos Y</div>
<div class="t" style="left:1841px;top:190.08px;font-size:12.9px;color:#c4c4c4;font-weight:normal;">Pos Z</div>
<div class="a" style="left:1668px;top:205px;width:84px;height:18px;background:#2a2a2a;border-radius:3px;border:1px solid #212121"></div>
<div class="t" style="left:1672px;top:208.58px;font-size:12.9px;color:#d2d2d2;font-weight:normal;">15</div>
<div class="a" style="left:1754px;top:205px;width:85px;height:18px;background:#2a2a2a;border-radius:3px;border:1px solid #212121"></div>
<div class="t" style="left:1758px;top:208.58px;font-size:12.9px;color:#d2d2d2;font-weight:normal;">-30</div>
<div class="a" style="left:1841px;top:205px;width:85px;height:18px;background:#2a2a2a;border-radius:3px;border:1px solid #212121"></div>
<div class="t" style="left:1845px;top:208.58px;font-size:12.9px;color:#d2d2d2;font-weight:normal;">0</div>
<div class="t" style="left:1669px;top:226.58px;font-size:12.9px;color:#c4c4c4;font-weight:normal;">Width</div>
<div class="t" style="left:1755px;top:226.58px;font-size:12.9px;color:#c4c4c4;font-weight:normal;">Height</div>
<div class="a" style="left:1668px;top:241px;width:84px;height:18px;background:#2a2a2a;border-radius:3px;border:1px solid #212121"></div>
<div class="t" style="left:1672px;top:244.58px;font-size:12.9px;color:#d2d2d2;font-weight:normal;">200</div>
<div class="a" style="left:1754px;top:241px;width:85px;height:18px;background:#2a2a2a;border-radius:3px;border:1px solid #212121"></div>
<div class="t" style="left:1758px;top:244.58px;font-size:12.9px;color:#d2d2d2;font-weight:normal;">200</div>
<div class="a" style="left:1873px;top:240px;width:24px;height:19px;background:#505050;border-radius:3px 0 0 3px"></div>
<div class="a" style="left:1898px;top:240px;width:24px;height:19px;background:#505050;"></div>
<svg class="a" style="left:1880px;top:244px;" width="11" height="11" viewBox="0 0 11 11"><rect x=".5" y=".5" width="10" height="10" fill="none" stroke="#a0a0a0" stroke-dasharray="2 1.5"/></svg>
<div class="t" style="left:1903px;top:245.77px;font-size:11.5px;color:#a0a0a0;font-weight:normal;">R</div>
<svg class="a" style="left:1505px;top:268px;" width="9" height="5.3999999999999995" viewBox="0 0 9 5.3999999999999995"><path d="M0 0 L9 0 L4.5 5.3999999999999995Z" fill="#8a8a8a"/></svg>
<div class="t" style="left:1517px;top:264.08px;font-size:12.9px;color:#c4c4c4;font-weight:normal;">Anchors</div>
<div class="t" style="left:1532px;top:283.08px;font-size:12.9px;color:#c4c4c4;font-weight:normal;">Min</div>
<div class="t" style="left:1669px;top:283.08px;font-size:12.9px;color:#c4c4c4;font-weight:normal;">X</div>
<div class="a" style="left:1681px;top:279px;width:71px;height:18px;background:#2a2a2a;border-radius:3px;border:1px solid #212121"></div>
<div class="t" style="left:1685px;top:282.58px;font-size:12.9px;color:#d2d2d2;font-weight:normal;">0</div>
<div class="t" style="left:1758px;top:283.08px;font-size:12.9px;color:#c4c4c4;font-weight:normal;">Y</div>
<div class="a" style="left:1767px;top:279px;width:72px;height:18px;background:#2a2a2a;border-radius:3px;border:1px solid #212121"></div>
<div class="t" style="left:1771px;top:282.58px;font-size:12.9px;color:#d2d2d2;font-weight:normal;">1</div>
<div class="t" style="left:1532px;top:303.08px;font-size:12.9px;color:#c4c4c4;font-weight:normal;">Max</div>
<div class="t" style="left:1669px;top:303.08px;font-size:12.9px;color:#c4c4c4;font-weight:normal;">X</div>
<div class="a" style="left:1681px;top:299px;width:71px;height:18px;background:#2a2a2a;border-radius:3px;border:1px solid #212121"></div>
<div class="t" style="left:1685px;top:302.58px;font-size:12.9px;color:#d2d2d2;font-weight:normal;">0</div>
<div class="t" style="left:1758px;top:303.08px;font-size:12.9px;color:#c4c4c4;font-weight:normal;">Y</div>
<div class="a" style="left:1767px;top:299px;width:72px;height:18px;background:#2a2a2a;border-radius:3px;border:1px solid #212121"></div>
<div class="t" style="left:1771px;top:302.58px;font-size:12.9px;color:#d2d2d2;font-weight:normal;">1</div>
<div class="t" style="left:1517px;top:324.08px;font-size:12.9px;color:#c4c4c4;font-weight:normal;">Pivot</div>
<div class="t" style="left:1669px;top:324.08px;font-size:12.9px;color:#c4c4c4;font-weight:normal;">X</div>
<div class="a" style="left:1681px;top:321px;width:71px;height:18px;background:#2a2a2a;border-radius:3px;border:1px solid #212121"></div>
<div class="t" style="left:1685px;top:324.58px;font-size:12.9px;color:#d2d2d2;font-weight:normal;">0</div>
<div class="t" style="left:1758px;top:324.08px;font-size:12.9px;color:#c4c4c4;font-weight:normal;">Y</div>
<div class="a" style="left:1767px;top:321px;width:72px;height:18px;background:#2a2a2a;border-radius:3px;border:1px solid #212121"></div>
<div class="t" style="left:1771px;top:324.58px;font-size:12.9px;color:#d2d2d2;font-weight:normal;">1</div>
<div class="t" style="left:1517px;top:353.08px;font-size:12.9px;color:#c4c4c4;font-weight:normal;">Rotation</div>
<div class="t" style="left:1672px;top:353.08px;font-size:12.9px;color:#c4c4c4;font-weight:normal;">X</div>
<div class="a" style="left:1688px;top:349px;width:66px;height:18px;background:#2a2a2a;border-radius:3px;border:1px solid #212121"></div>
<div class="t" style="left:1692px;top:352.58px;font-size:12.9px;color:#d2d2d2;font-weight:normal;">0</div>
<div class="t" style="left:1758px;top:353.08px;font-size:12.9px;color:#c4c4c4;font-weight:normal;">Y</div>
<div class="a" style="left:1773px;top:349px;width:66px;height:18px;background:#2a2a2a;border-radius:3px;border:1px solid #212121"></div>
<div class="t" style="left:1777px;top:352.58px;font-size:12.9px;color:#d2d2d2;font-weight:normal;">0</div>
<div class="t" style="left:1843px;top:353.08px;font-size:12.9px;color:#c4c4c4;font-weight:normal;">Z</div>
<div class="a" style="left:1859px;top:349px;width:66px;height:18px;background:#2a2a2a;border-radius:3px;border:1px solid #212121"></div>
<div class="t" style="left:1863px;top:352.58px;font-size:12.9px;color:#d2d2d2;font-weight:normal;">0</div>
<div class="t" style="left:1517px;top:373.08px;font-size:12.9px;color:#c4c4c4;font-weight:normal;">Scale</div>
<div class="t" style="left:1672px;top:373.08px;font-size:12.9px;color:#c4c4c4;font-weight:normal;">X</div>
<div class="a" style="left:1688px;top:369px;width:66px;height:18px;background:#2a2a2a;border-radius:3px;border:1px solid #212121"></div>
<div class="t" style="left:1692px;top:372.58px;font-size:12.9px;color:#d2d2d2;font-weight:normal;">1</div>
<div class="t" style="left:1758px;top:373.08px;font-size:12.9px;color:#c4c4c4;font-weight:normal;">Y</div>
<div class="a" style="left:1773px;top:369px;width:66px;height:18px;background:#2a2a2a;border-radius:3px;border:1px solid #212121"></div>
<div class="t" style="left:1777px;top:372.58px;font-size:12.9px;color:#d2d2d2;font-weight:normal;">1</div>
<div class="t" style="left:1843px;top:373.08px;font-size:12.9px;color:#c4c4c4;font-weight:normal;">Z</div>
<div class="a" style="left:1859px;top:369px;width:66px;height:18px;background:#2a2a2a;border-radius:3px;border:1px solid #212121"></div>
<div class="t" style="left:1863px;top:372.58px;font-size:12.9px;color:#d2d2d2;font-weight:normal;">1</div>
<svg class="a" style="left:1650px;top:372px;" width="12" height="12" viewBox="0 0 12 12"><path d="M1 6 Q6 0 11 6 Q6 12 1 6Z" fill="none" stroke="#c4c4c4" stroke-width="1.1"/><path d="M1 0 L11 12" stroke="#c4c4c4" stroke-width="1.1"/></svg>
<div class="a" style="left:1498px;top:395px;width:422px;height:1px;background:#232323;"></div>
<div class="a" style="left:1498px;top:396px;width:422px;height:21px;background:#3e3e3e;"></div>
<div class="a" style="left:1498px;top:417px;width:422px;height:1px;background:#2f2f2f;"></div>
<svg class="a" style="left:1504px;top:404px;" width="9" height="5.3999999999999995" viewBox="0 0 9 5.3999999999999995"><path d="M0 0 L9 0 L4.5 5.3999999999999995Z" fill="#8a8a8a"/></svg>
<svg class="a" style="left:1518px;top:400px;" width="17" height="12" viewBox="0 0 17 12"><path d="M1 6 Q8.5 -1 16 6 Q8.5 13 1 6Z" fill="none" stroke="#c4c4c4" stroke-width="1.3"/><circle cx="8.5" cy="6" r="2.6" fill="none" stroke="#c4c4c4" stroke-width="1.3"/></svg>
<div class="t" style="left:1557px;top:400.20px;font-size:13.7px;color:#d8d8d8;font-weight:bold;">Canvas Renderer</div>
<svg class="a" style="left:1868px;top:401px;" width="12" height="12" viewBox="0 0 12 12"><circle cx="6" cy="6" r="6" fill="#c4c4c4"/><path d="M4 4.5 Q4 2.5 6 2.5 Q8 2.5 8 4.3 Q8 5.5 6.5 6.2 V7.5" fill="none" stroke="#3c3c3c" stroke-width="1.5"/><rect x="5.6" y="8.5" width="1.6" height="1.6" fill="#3c3c3c"/></svg>
<svg class="a" style="left:1889px;top:401px;" width="12" height="12" viewBox="0 0 12 12"><path d="M0 3 H12 M0 9 H12" stroke="#c4c4c4" stroke-width="1.2"/><path d="M4 0 V6 M8 6 V12" stroke="#c4c4c4" stroke-width="1.6"/></svg>
<svg class="a" style="left:1913px;top:402px;" width="2" height="10" viewBox="0 0 2 10"><rect x="0" y="0" width="2" height="2" fill="#c4c4c4"/><rect x="0" y="4" width="2" height="2" fill="#c4c4c4"/><rect x="0" y="8" width="2" height="2" fill="#c4c4c4"/></svg>
<div class="t" style="left:1517px;top:426.08px;font-size:12.9px;color:#c4c4c4;font-weight:normal;">Cull Transparent Mesh</div>
<div class="a" style="left:1671px;top:424px;width:14px;height:14px;background:#2a2a2a;border-radius:3px;border:1px solid #212121"></div>
<svg class="a" style="left:1671px;top:424px;" width="14" height="14" viewBox="0 0 14 14"><path d="M2.5 7 L5.5 10 L11.5 3.5" fill="none" stroke="#e8e8e8" stroke-width="1.6"/></svg>
<div class="a" style="left:1498px;top:448px;width:422px;height:1px;background:#232323;"></div>
<div class="a" style="left:1498px;top:449px;width:422px;height:21px;background:#3e3e3e;"></div>
<div class="a" style="left:1498px;top:470px;width:422px;height:1px;background:#2f2f2f;"></div>
<svg class="a" style="left:1504px;top:457px;" width="9" height="5.3999999999999995" viewBox="0 0 9 5.3999999999999995"><path d="M0 0 L9 0 L4.5 5.3999999999999995Z" fill="#8a8a8a"/></svg>
<svg class="a" style="left:1519px;top:454px;" width="14" height="12" viewBox="0 0 14 12"><rect x=".5" y=".5" width="13" height="11" fill="none" stroke="#c4c4c4" stroke-width="1.1"/><rect x="2.5" y="2.5" width="9" height="7" fill="none" stroke="#c4c4c4" stroke-width="1"/><path d="M3 9 L6 5 L8 7 L9.5 6 L11 9Z" fill="#c4c4c4"/></svg>
<div class="a" style="left:1538px;top:453px;width:14px;height:14px;background:#2a2a2a;border-radius:3px;border:1px solid #212121"></div>
<svg class="a" style="left:1538px;top:453px;" width="14" height="14" viewBox="0 0 14 14"><path d="M2.5 7 L5.5 10 L11.5 3.5" fill="none" stroke="#e8e8e8" stroke-width="1.6"/></svg>
<div class="t" style="left:1557px;top:454.20px;font-size:13.7px;color:#d8d8d8;font-weight:bold;">Image</div>
<svg class="a" style="left:1868px;top:454px;" width="12" height="12" viewBox="0 0 12 12"><circle cx="6" cy="6" r="6" fill="#c4c4c4"/><path d="M4 4.5 Q4 2.5 6 2.5 Q8 2.5 8 4.3 Q8 5.5 6.5 6.2 V7.5" fill="none" stroke="#3c3c3c" stroke-width="1.5"/><rect x="5.6" y="8.5" width="1.6" height="1.6" fill="#3c3c3c"/></svg>
<svg class="a" style="left:1889px;top:454px;" width="12" height="12" viewBox="0 0 12 12"><path d="M0 3 H12 M0 9 H12" stroke="#c4c4c4" stroke-width="1.2"/><path d="M4 0 V6 M8 6 V12" stroke="#c4c4c4" stroke-width="1.6"/></svg>
<svg class="a" style="left:1913px;top:455px;" width="2" height="10" viewBox="0 0 2 10"><rect x="0" y="0" width="2" height="2" fill="#c4c4c4"/><rect x="0" y="4" width="2" height="2" fill="#c4c4c4"/><rect x="0" y="8" width="2" height="2" fill="#c4c4c4"/></svg>
<div class="t" style="left:1517px;top:479.08px;font-size:12.9px;color:#c4c4c4;font-weight:normal;">Source Image</div>
<div class="a" style="left:1671px;top:476px;width:249px;height:17px;background:#2a2a2a;border-radius:3px;border:1px solid #212121"></div>
<div class="t" style="left:1675px;top:478.58px;font-size:12.9px;color:#d2d2d2;font-weight:normal;">None (Sprite)</div>
<div class="a" style="left:1905px;top:477px;width:15px;height:15px;background:#2f2f2f;"></div>
<svg class="a" style="left:1908px;top:479px;" width="10" height="10" viewBox="0 0 10 10"><circle cx="5" cy="5" r="4.3" fill="none" stroke="#c4c4c4" stroke-width="1.1"/><circle cx="5" cy="5" r="1.6" fill="#c4c4c4"/></svg>
<div class="t" style="left:1517px;top:499.08px;font-size:12.9px;color:#c4c4c4;font-weight:normal;">Color</div>
<div class="a" style="left:1671px;top:496px;width:234px;height:17px;background:#4f4f4f;border-radius:2px"></div>
<div class="a" style="left:1672px;top:509px;width:132px;height:3px;background:#ffffff;"></div>
<div class="a" style="left:1804px;top:509px;width:100px;height:3px;background:#000000;"></div>
<svg class="a" style="left:1909px;top:498px;" width="12" height="11" viewBox="0 0 12 11"><path d="M0 10 L6 4 M5 3 L9 7 M7 1 Q9 -1 11 1 Q13 3 11 5 L9 7" fill="none" stroke="#c4c4c4" stroke-width="1.6"/></svg>
<div class="t" style="left:1517px;top:519.08px;font-size:12.9px;color:#c4c4c4;font-weight:normal;">Material</div>
<div class="a" style="left:1671px;top:516px;width:249px;height:17px;background:#2a2a2a;border-radius:3px;border:1px solid #212121"></div>
<div class="t" style="left:1675px;top:518.58px;font-size:12.9px;color:#d2d2d2;font-weight:normal;">None (Material)</div>
<div class="a" style="left:1905px;top:517px;width:15px;height:15px;background:#2f2f2f;"></div>
<svg class="a" style="left:1908px;top:519px;" width="10" height="10" viewBox="0 0 10 10"><circle cx="5" cy="5" r="4.3" fill="none" stroke="#c4c4c4" stroke-width="1.1"/><circle cx="5" cy="5" r="1.6" fill="#c4c4c4"/></svg>
<div class="t" style="left:1517px;top:539.08px;font-size:12.9px;color:#c4c4c4;font-weight:normal;">Raycast Target</div>
<div class="a" style="left:1671px;top:537px;width:14px;height:14px;background:#2a2a2a;border-radius:3px;border:1px solid #212121"></div>
<svg class="a" style="left:1671px;top:537px;" width="14" height="14" viewBox="0 0 14 14"><path d="M2.5 7 L5.5 10 L11.5 3.5" fill="none" stroke="#e8e8e8" stroke-width="1.6"/></svg>
<svg class="a" style="left:1505px;top:560px;" width="8" height="8" viewBox="0 0 8 8"><path d="M0 0 L6.8 4.0 L0 8Z" fill="#8a8a8a"/></svg>
<div class="t" style="left:1517px;top:559.08px;font-size:12.9px;color:#c4c4c4;font-weight:normal;">Raycast Padding</div>
<div class="t" style="left:1517px;top:581.08px;font-size:12.9px;color:#c4c4c4;font-weight:normal;">Maskable</div>
<div class="a" style="left:1671px;top:579px;width:14px;height:14px;background:#2a2a2a;border-radius:3px;border:1px solid #212121"></div>
<svg class="a" style="left:1671px;top:579px;" width="14" height="14" viewBox="0 0 14 14"><path d="M2.5 7 L5.5 10 L11.5 3.5" fill="none" stroke="#e8e8e8" stroke-width="1.6"/></svg>
<div class="a" style="left:1498px;top:603px;width:422px;height:1px;background:#232323;"></div>
<div class="a" style="left:1518px;top:614px;width:24px;height:24px;background:#ffffff;"></div>
<div class="t" style="left:1554px;top:612.32px;font-size:13.8px;color:#a8a8a8;font-weight:normal;">Default UI Material (Material)</div>
<svg class="a" style="left:1898px;top:611px;" width="12" height="12" viewBox="0 0 12 12"><circle cx="6" cy="6" r="6" fill="#c4c4c4"/><path d="M4 4.5 Q4 2.5 6 2.5 Q8 2.5 8 4.3 Q8 5.5 6.5 6.2 V7.5" fill="none" stroke="#3c3c3c" stroke-width="1.5"/><rect x="5.6" y="8.5" width="1.6" height="1.6" fill="#3c3c3c"/></svg>
<svg class="a" style="left:1918px;top:612px;" width="2" height="10" viewBox="0 0 2 10"><rect x="0" y="0" width="2" height="2" fill="#c4c4c4"/><rect x="0" y="4" width="2" height="2" fill="#c4c4c4"/><rect x="0" y="8" width="2" height="2" fill="#c4c4c4"/></svg>
<div class="t" style="left:1551px;top:636.08px;font-size:12.9px;color:#7a7a7a;font-weight:normal;">Shader</div>
<div class="a" style="left:1603px;top:633px;width:223px;height:17px;background:#424242;border-radius:3px"></div>
<div class="t" style="left:1607px;top:636.08px;font-size:12.9px;color:#8a8a8a;font-weight:normal;">UI/Default</div>
<svg class="a" style="left:1815px;top:640px;" width="8" height="4.8" viewBox="0 0 8 4.8"><path d="M0 0 L8 0 L4.0 4.8Z" fill="#8a8a8a"/></svg>
<div class="a" style="left:1832px;top:633px;width:44px;height:17px;background:#555555;border-radius:3px;border:1px solid #2a2a2a"></div>
<div class="t" style="left:1838px;top:636.08px;font-size:12.9px;color:#d0d0d0;font-weight:normal;">Edit...</div>
<div class="a" style="left:1881px;top:633px;width:45px;height:17px;background:#555555;border-radius:3px;border:1px solid #2a2a2a"></div>
<svg class="a" style="left:1890px;top:636px;" width="11" height="11" viewBox="0 0 11 11"><path d="M3 1.5 H11 M3 5.5 H11 M3 9.5 H11 M0 1.5 H1.5 M0 5.5 H1.5 M0 9.5 H1.5" stroke="#c4c4c4" stroke-width="1.1"/></svg>
<svg class="a" style="left:1908px;top:639px;" width="8" height="4.8" viewBox="0 0 8 4.8"><path d="M0 0 L8 0 L4.0 4.8Z" fill="#c4c4c4"/></svg>
<svg class="a" style="left:1505px;top:645px;" width="8" height="8" viewBox="0 0 8 8"><path d="M0 0 L6.8 4.0 L0 8Z" fill="#6a6a6a"/></svg>
<div class="a" style="left:1498px;top:657px;width:422px;height:1px;background:#2a2a2a;"></div>
<div class="a" style="left:1498px;top:668px;width:422px;height:1px;background:#2a2a2a;"></div>
<div class="a" style="left:1598px;top:679px;width:229px;height:22px;background:#585858;border-radius:3px;border:1px solid #303030"></div>
<div class="t" style="left:1413px;width:600px;text-align:center;top:684.58px;font-size:12.9px;color:#e0e0e0;font-weight:normal;">Add Component</div>
<div class="a" style="left:1498px;top:843px;width:422px;height:1px;background:#232323;"></div>
<div class="a" style="left:1498px;top:844px;width:422px;height:21px;background:#3c3c3c;"></div>
<div class="a" style="left:1498px;top:865px;width:422px;height:1px;background:#232323;"></div>
<div class="a" style="left:1502px;top:845px;width:54px;height:19px;background:#3c3c3c;border-right:1px solid #2a2a2a"></div>
<div class="t" style="left:1506px;top:850.08px;font-size:12.9px;color:#c8c8c8;font-weight:bold;">Panel</div>
<svg class="a" style="left:1542px;top:853px;" width="7" height="4.2" viewBox="0 0 7 4.2"><path d="M0 0 L7 0 L3.5 4.2Z" fill="#c4c4c4"/></svg>
<div class="a" style="left:1560px;top:853px;width:349px;height:1px;background:#6a6a6a;"></div>
<div class="a" style="left:1560px;top:856px;width:349px;height:1px;background:#6a6a6a;"></div>
<div class="a" style="left:1910px;top:845px;width:1px;height:19px;background:#2a2a2a;"></div>
<div class="a" style="left:1498px;top:866px;width:422px;height:153px;background:#383838;"></div>
<div class="t" style="left:1413px;width:600px;text-align:center;top:986.99px;font-size:13.6px;color:#d8d8d8;font-weight:bold;text-shadow:1px 1px 1px #000">Panel</div>
<div class="t" style="left:1413px;width:600px;text-align:center;top:1001.82px;font-size:13.8px;color:#d8d8d8;font-weight:bold;text-shadow:1px 1px 1px #000">Image Size: 0x0</div>
<div class="a" style="left:1498px;top:1019px;width:422px;height:7px;background:#2d2d2d;"></div>
<div class="a" style="left:1498px;top:1026px;width:422px;height:14px;background:#191919;"></div>
<div class="a" style="left:1015px;top:270px;width:254px;height:692px;background:rgba(0,0,0,0.18);filter:blur(2px)"></div>
<div class="a" style="left:1013px;top:268px;width:254px;height:692px;background:#f2f2f2;border:1px solid #cdcdcd"></div>
<div class="t" style="left:1048px;top:275.98px;font-size:11.6px;color:#000000;font-weight:normal;">Cut</div>
<div class="t" style="left:1048px;top:297.98px;font-size:11.6px;color:#000000;font-weight:normal;">Copy</div>
<div class="t" style="left:1048px;top:319.98px;font-size:11.6px;color:#000000;font-weight:normal;">Paste</div>
<div class="t" style="left:1048px;top:341.98px;font-size:11.6px;color:#000000;font-weight:normal;">Paste As Child</div>
<div class="a" style="left:1044px;top:362px;width:220px;height:1px;background:#d7d7d7;"></div>
<div class="t" style="left:1048px;top:370.98px;font-size:11.6px;color:#000000;font-weight:normal;">Rename</div>
<div class="t" style="left:1048px;top:392.98px;font-size:11.6px;color:#000000;font-weight:normal;">Duplicate</div>
<div class="t" style="left:1048px;top:414.98px;font-size:11.6px;color:#000000;font-weight:normal;">Delete</div>
<div class="a" style="left:1044px;top:435px;width:220px;height:1px;background:#d7d7d7;"></div>
<div class="t" style="left:1048px;top:443.98px;font-size:11.6px;color:#6d6d6d;font-weight:normal;">Select Children</div>
<div class="a" style="left:1044px;top:464px;width:220px;height:1px;background:#d7d7d7;"></div>
<div class="t" style="left:1048px;top:472.98px;font-size:11.6px;color:#000000;font-weight:normal;">Find References in Scene</div>
<div class="a" style="left:1044px;top:493px;width:220px;height:1px;background:#d7d7d7;"></div>
<div class="t" style="left:1048px;top:501.98px;font-size:11.6px;color:#000000;font-weight:normal;">Set as Default Parent</div>
<div class="a" style="left:1044px;top:522px;width:220px;height:1px;background:#d7d7d7;"></div>
<div class="t" style="left:1048px;top:530.98px;font-size:11.6px;color:#000000;font-weight:normal;">Prefab</div>
<svg class="a" style="left:1251px;top:533px;" width="5" height="8" viewBox="0 0 5 8"><path d="M.5 .5 L4 4 L.5 7.5" fill="none" stroke="#333" stroke-width="1.2"/></svg>
<div class="a" style="left:1044px;top:551px;width:220px;height:1px;background:#d7d7d7;"></div>
<div class="t" style="left:1048px;top:559.98px;font-size:11.6px;color:#000000;font-weight:normal;">Create Empty Parent</div>
<div class="t" style="left:1048px;top:581.98px;font-size:11.6px;color:#000000;font-weight:normal;">Create Empty</div>
<div class="t" style="left:1048px;top:603.98px;font-size:11.6px;color:#000000;font-weight:normal;">3D Object</div>
<svg class="a" style="left:1251px;top:606px;" width="5" height="8" viewBox="0 0 5 8"><path d="M.5 .5 L4 4 L.5 7.5" fill="none" stroke="#333" stroke-width="1.2"/></svg>
<div class="t" style="left:1048px;top:625.98px;font-size:11.6px;color:#000000;font-weight:normal;">Effects</div>
<svg class="a" style="left:1251px;top:628px;" width="5" height="8" viewBox="0 0 5 8"><path d="M.5 .5 L4 4 L.5 7.5" fill="none" stroke="#333" stroke-width="1.2"/></svg>
<div class="t" style="left:1048px;top:647.98px;font-size:11.6px;color:#000000;font-weight:normal;">Light</div>
<svg class="a" style="left:1251px;top:650px;" width="5" height="8" viewBox="0 0 5 8"><path d="M.5 .5 L4 4 L.5 7.5" fill="none" stroke="#333" stroke-width="1.2"/></svg>
<div class="t" style="left:1048px;top:669.98px;font-size:11.6px;color:#000000;font-weight:normal;">Audio</div>
<svg class="a" style="left:1251px;top:672px;" width="5" height="8" viewBox="0 0 5 8"><path d="M.5 .5 L4 4 L.5 7.5" fill="none" stroke="#333" stroke-width="1.2"/></svg>
<div class="t" style="left:1048px;top:691.98px;font-size:11.6px;color:#000000;font-weight:normal;">Video</div>
<svg class="a" style="left:1251px;top:694px;" width="5" height="8" viewBox="0 0 5 8"><path d="M.5 .5 L4 4 L.5 7.5" fill="none" stroke="#333" stroke-width="1.2"/></svg>
<div class="a" style="left:1016px;top:709px;width:248px;height:22px;background:#91c9f7;"></div>
<div class="t" style="left:1048px;top:713.98px;font-size:11.6px;color:#000000;font-weight:normal;">UI</div>
<svg class="a" style="left:1251px;top:716px;" width="5" height="8" viewBox="0 0 5 8"><path d="M.5 .5 L4 4 L.5 7.5" fill="none" stroke="#333" stroke-width="1.2"/></svg>
<div class="t" style="left:1048px;top:735.98px;font-size:11.6px;color:#000000;font-weight:normal;">UI Toolkit</div>
<svg class="a" style="left:1251px;top:738px;" width="5" height="8" viewBox="0 0 5 8"><path d="M.5 .5 L4 4 L.5 7.5" fill="none" stroke="#333" stroke-width="1.2"/></svg>
<div class="t" style="left:1048px;top:757.98px;font-size:11.6px;color:#000000;font-weight:normal;">ProBuilder</div>
<svg class="a" style="left:1251px;top:760px;" width="5" height="8" viewBox="0 0 5 8"><path d="M.5 .5 L4 4 L.5 7.5" fill="none" stroke="#333" stroke-width="1.2"/></svg>
<div class="t" style="left:1048px;top:779.98px;font-size:11.6px;color:#000000;font-weight:normal;">Camera</div>
<div class="t" style="left:1048px;top:801.98px;font-size:11.6px;color:#000000;font-weight:normal;">Visual Scripting Scene Variables</div>
<div class="t" style="left:1048px;top:823.98px;font-size:11.6px;color:#000000;font-weight:normal;">Clear Parent</div>
<div class="t" style="left:1048px;top:845.98px;font-size:11.6px;color:#000000;font-weight:normal;">Align View to Selected</div>
<div class="t" style="left:1048px;top:867.98px;font-size:11.6px;color:#000000;font-weight:normal;">Move To View</div>
<div class="t" style="left:1048px;top:889.98px;font-size:11.6px;color:#000000;font-weight:normal;">Toggle Active State</div>
<div class="t" style="left:1048px;top:911.98px;font-size:11.6px;color:#000000;font-weight:normal;">Align With View</div>
<div class="a" style="left:1044px;top:932px;width:220px;height:1px;background:#d7d7d7;"></div>
<div class="t" style="left:1048px;top:940.98px;font-size:11.6px;color:#000000;font-weight:normal;">Properties...</div>
<div class="a" style="left:1263px;top:708px;width:225px;height:334px;background:rgba(0,0,0,0.18);filter:blur(2px)"></div>
<div class="a" style="left:1261px;top:706px;width:225px;height:334px;background:#f2f2f2;border:1px solid #cdcdcd"></div>
<div class="t" style="left:1296px;top:713.98px;font-size:11.6px;color:#000000;font-weight:normal;">Image</div>
<div class="t" style="left:1296px;top:735.98px;font-size:11.6px;color:#000000;font-weight:normal;">Text - TextMeshPro</div>
<div class="t" style="left:1296px;top:757.98px;font-size:11.6px;color:#000000;font-weight:normal;">Raw Image</div>
<div class="t" style="left:1296px;top:779.98px;font-size:11.6px;color:#000000;font-weight:normal;">Panel</div>
<div class="a" style="left:1292px;top:800px;width:191px;height:1px;background:#d7d7d7;"></div>
<div class="t" style="left:1296px;top:808.98px;font-size:11.6px;color:#000000;font-weight:normal;">Toggle</div>
<div class="t" style="left:1296px;top:830.98px;font-size:11.6px;color:#000000;font-weight:normal;">Slider</div>
<div class="t" style="left:1296px;top:852.98px;font-size:11.6px;color:#000000;font-weight:normal;">Scrollbar</div>
<div class="t" style="left:1296px;top:874.98px;font-size:11.6px;color:#000000;font-weight:normal;">Scroll View</div>
<div class="a" style="left:1264px;top:892px;width:219px;height:22px;background:#91c9f7;"></div>
<div class="t" style="left:1296px;top:896.98px;font-size:11.6px;color:#000000;font-weight:normal;">Button - TextMeshPro</div>
<div class="t" style="left:1296px;top:918.98px;font-size:11.6px;color:#000000;font-weight:normal;">Dropdown - TextMeshPro</div>
<div class="t" style="left:1296px;top:940.98px;font-size:11.6px;color:#000000;font-weight:normal;">Input Field - TextMeshPro</div>
<div class="a" style="left:1292px;top:961px;width:191px;height:1px;background:#d7d7d7;"></div>
<div class="t" style="left:1296px;top:969.98px;font-size:11.6px;color:#000000;font-weight:normal;">Canvas</div>
<div class="t" style="left:1296px;top:991.98px;font-size:11.6px;color:#000000;font-weight:normal;">Event System</div>
<div class="a" style="left:1292px;top:1012px;width:191px;height:1px;background:#d7d7d7;"></div>
<div class="t" style="left:1296px;top:1020.98px;font-size:11.6px;color:#000000;font-weight:normal;">Legacy</div>
<svg class="a" style="left:1470px;top:1023px;" width="5" height="8" viewBox="0 0 5 8"><path d="M.5 .5 L4 4 L.5 7.5" fill="none" stroke="#333" stroke-width="1.2"/></svg>
<svg class="a" style="left:0;top:0" width="1920" height="1080"><line x1="894" y1="332" x2="949.5" y2="284.7" stroke="#fff" stroke-width="2.2"/><polygon points="962.4,273.7 952.9,288.8 946.0,280.7" fill="#fff"/></svg>
<svg class="a" style="left:0;top:0" width="1920" height="1080"><line x1="950" y1="575" x2="1010.9" y2="700.5" stroke="#fff" stroke-width="2.2"/><polygon points="1018.3,715.8 1006.1,702.8 1015.6,698.2" fill="#fff"/></svg>
<svg class="a" style="left:0;top:0" width="1920" height="1080"><line x1="1549.7" y1="777.4" x2="1422.3" y2="887.1" stroke="#fff" stroke-width="2.2"/><polygon points="1409.4,898.2 1418.8,883.1 1425.7,891.1" fill="#fff"/></svg>
<svg class="a" style="left:1827px;top:1029px;" width="16" height="12" viewBox="0 0 16 12"><path d="M2 1 L14 11" stroke="#b0b0b0" stroke-width="1.6"/><path d="M3 10 Q5 4 8 4 Q12 4 13 10Z" fill="#b0b0b0"/></svg>
<svg class="a" style="left:1853px;top:1029px;" width="16" height="12" viewBox="0 0 16 12"><ellipse cx="8" cy="4" rx="7" ry="3.5" fill="#b0b0b0"/><path d="M1 5 V8 Q8 13 15 8 V5 Q8 10 1 5Z" fill="#b0b0b0"/></svg>
<svg class="a" style="left:1880px;top:1029px;" width="16" height="12" viewBox="0 0 16 12"><path d="M1 6 Q8 -1 15 6 Q8 13 1 6Z" fill="none" stroke="#b0b0b0" stroke-width="1.5"/><circle cx="8" cy="6" r="2" fill="#b0b0b0"/><path d="M2 0 L14 12" stroke="#b0b0b0" stroke-width="1.5"/></svg>
<svg class="a" style="left:1905px;top:1029px;" width="16" height="16" viewBox="0 0 16 16"><circle cx="8" cy="8" r="7" fill="none" stroke="#b0b0b0" stroke-width="1.4"/><path d="M4.5 8 L7 10.5 L11.5 5.5" fill="none" stroke="#b0b0b0" stroke-width="1.4"/></svg>
<div class="a" style="left:0px;top:1040px;width:1920px;height:40px;background:#161616;"></div>
<svg class="a" style="left:16px;top:1052px;" width="17" height="16" viewBox="0 0 17 16"><path d="M0 2.2 L7 1.2 V7.6 H0Z M8 1 L17 0 V7.6 H8Z M0 8.6 H7 V15 L0 14Z M8 8.6 H17 V16 L8 15Z" fill="#ffffff"/></svg>
<div class="a" style="left:48px;top:1041px;width:288px;height:39px;background:#2b2b2b;border:1px solid #3a3a3a"></div>
<svg class="a" style="left:60px;top:1052px;" width="16" height="16" viewBox="0 0 16 16"><circle cx="9" cy="6.5" r="5.5" fill="none" stroke="#fff" stroke-width="1.3"/><path d="M5 10.5 L0.5 15" stroke="#fff" stroke-width="1.5"/></svg>
<div class="t" style="left:88px;top:1053.23px;font-size:14.5px;color:#dcdcdc;font-weight:normal;">Escriu aquí per cercar</div>
<svg class="a" style="left:256px;top:1043px;" width="80" height="36" viewBox="0 0 80 36"><path d="M0 36 L12 20 H74 L80 36Z" fill="#e2c49a"/><rect x="8" y="10" width="26" height="16" rx="2" fill="#f0f0e0" transform="rotate(-15 20 18)"/><path d="M10 14 L34 8" stroke="#6a9a6a" stroke-width="2"/><path d="M48 6 Q58 -4 68 6 V30 H48Z" fill="#3a8de0"/><rect x="51" y="14" width="14" height="10" rx="2" fill="#2a6ab0"/></svg>
<svg class="a" style="left:351px;top:1051px;" width="18" height="18" viewBox="0 0 18 18"><circle cx="9" cy="9" r="7.5" fill="none" stroke="#fff" stroke-width="2"/></svg>
<svg class="a" style="left:399px;top:1052px;" width="17" height="17" viewBox="0 0 17 17"><rect x="2" y="3" width="12" height="10" fill="none" stroke="#fff" stroke-width="1.4"/><path d="M0 0 H6 M10 0 H16 M0 16 H6 M10 16 H16 M16 5 V11" stroke="#fff" stroke-width="1.4"/></svg>
<svg class="a" style="left:447px;top:1049px;" width="22" height="22" viewBox="0 0 22 22"><rect x="0" y="0" width="22" height="22" rx="2" fill="#fb7a24"/><path d="M4 6 Q4 3 7 4 L11 8 L15 4 Q18 3 18 6 L14 11 L18 16 Q18 19 15 18 L11 14 L7 18 Q4 19 4 16 L8 11Z" fill="none" stroke="#fff" stroke-width="1.8"/></svg>
<svg class="a" style="left:497px;top:1049px;" width="22" height="20" viewBox="0 0 22 20"><path d="M0 3 H8 L10 5 H22 V19 H0Z" fill="#e9b83a"/><rect x="0" y="7" width="22" height="12" fill="#f5cf5a"/><rect x="6" y="12" width="10" height="4" fill="#1d7fd4"/></svg>
<svg class="a" style="left:546px;top:1049px;" width="22" height="22" viewBox="0 0 22 22"><circle cx="11" cy="11" r="11" fill="#db4437"/><path d="M11 11 L1.5 5.5 A11 11 0 0 0 11 22Z" fill="#0f9d58"/><path d="M11 11 L20.5 5.5 A11 11 0 0 1 11 22Z" fill="#f4b400"/><path d="M11 11 L1.5 5.5 A11 11 0 0 1 20.5 5.5Z" fill="#db4437"/><circle cx="11" cy="11" r="5" fill="#fff"/><circle cx="11" cy="11" r="4" fill="#4285f4"/></svg>
<svg class="a" style="left:595px;top:1049px;" width="22" height="22" viewBox="0 0 22 22"><path d="M16 0 L22 3 V19 L16 22 L6 13 L2 16 L0 15 V7 L2 6 L6 9Z M16 6 L10 11 L16 16Z" fill="#23a5f0"/></svg>
<svg class="a" style="left:644px;top:1049px;" width="22" height="22" viewBox="0 0 22 22"><circle cx="11" cy="11" r="11" fill="#db4437"/><path d="M11 11 L1.5 5.5 A11 11 0 0 0 11 22Z" fill="#0f9d58"/><path d="M11 11 L20.5 5.5 A11 11 0 0 1 11 22Z" fill="#f4b400"/><path d="M11 11 L1.5 5.5 A11 11 0 0 1 20.5 5.5Z" fill="#db4437"/><circle cx="11" cy="11" r="5" fill="#fff"/><circle cx="11" cy="11" r="4" fill="#4285f4"/></svg>
<svg class="a" style="left:644px;top:1049px;" width="24" height="24" viewBox="0 0 24 24"><circle cx="17" cy="17" r="6" fill="#2a2a2a"/><circle cx="17" cy="15" r="2.5" fill="#f0d0b0"/></svg>
<div class="a" style="left:680px;top:1040px;width:48px;height:40px;background:#3a3a3a;"></div>
<svg class="a" style="left:693px;top:1049px;" width="22" height="22" viewBox="0 0 22 22"><path d="M11 1 L20 6 L20 16 L11 21 L2 16 L2 6Z" fill="#e8e8e8"/><path d="M11 5 V11 M11 11 L6 14 M11 11 L16 14" stroke="#3a3a3a" stroke-width="2.2"/></svg>
<svg class="a" style="left:742px;top:1049px;" width="22" height="22" viewBox="0 0 22 22"><rect x="0" y="0" width="22" height="22" rx="2" fill="#001e36"/><rect x="1" y="1" width="20" height="20" fill="none" stroke="#31a8ff" stroke-width="1.2"/><text x="3" y="15" font-family="Liberation Sans" font-weight="bold" font-size="11" fill="#31a8ff">Ps</text></svg>
<svg class="a" style="left:791px;top:1049px;" width="22" height="22" viewBox="0 0 22 22"><path d="M16 0 L22 3 V19 L16 22 L6 13 L2 16 L0 15 V7 L2 6 L6 9Z M16 6 L10 11 L16 16Z" fill="#a56fe0"/></svg>
<div class="a" style="left:490px;top:1077px;width:33px;height:3px;background:#76b9ed;"></div>
<div class="a" style="left:638px;top:1077px;width:33px;height:3px;background:#76b9ed;"></div>
<div class="a" style="left:686px;top:1077px;width:36px;height:3px;background:#76b9ed;"></div>
<div class="a" style="left:736px;top:1077px;width:33px;height:3px;background:#76b9ed;"></div>
<div class="a" style="left:785px;top:1077px;width:33px;height:3px;background:#76b9ed;"></div>
<svg class="a" style="left:1535px;top:1050px;" width="20" height="20" viewBox="0 0 20 20"><defs><radialGradient id="sun" cx="40%" cy="35%" r="70%"><stop offset="0" stop-color="#ffcf3a"/><stop offset="1" stop-color="#f06a10"/></radialGradient></defs><circle cx="10" cy="10" r="10" fill="url(#sun)"/></svg>
<div class="t" style="left:1566px;top:1053.48px;font-size:14.2px;color:#ffffff;font-weight:normal;">14°C</div>
<div class="t" style="left:1603px;top:1053.48px;font-size:14.2px;color:#ffffff;font-weight:normal;">Soleado</div>
<svg class="a" style="left:1677px;top:1055px;" width="14" height="8" viewBox="0 0 14 8"><path d="M1 7 L7 1 L13 7" fill="none" stroke="#fff" stroke-width="1.4"/></svg>
<svg class="a" style="left:1699px;top:1053px;" width="18" height="12" viewBox="0 0 18 12"><rect x="4" y="3" width="12" height="8" fill="none" stroke="#fff" stroke-width="1.3"/><rect x="6" y="5" width="7" height="4" fill="#fff"/><rect x="16" y="5" width="1.5" height="4" fill="#fff"/><path d="M0 0 V4 M3 0 V4 M-.5 4 H3.5 V6 Q1.5 8 -.5 6Z" stroke="#fff" stroke-width="1"/></svg>
<svg class="a" style="left:1726px;top:1053px;" width="13" height="13" viewBox="0 0 13 13"><path d="M1 12 Q1 2 12 1 M4 12 Q4 5 12 4 M7 12 Q7 8 12 7" fill="none" stroke="#fff" stroke-width="1.3"/><circle cx="11" cy="11" r="1.5" fill="#fff"/></svg>
<svg class="a" style="left:1747px;top:1053px;" width="17" height="14" viewBox="0 0 17 14"><path d="M0 4 H3 L7 0 V13 L3 9 H0Z" fill="none" stroke="#fff" stroke-width="1.2"/><path d="M9 4 Q11 6.5 9 9 M11 2 Q14 6.5 11 11 M13 0 Q17 6.5 13 13" fill="none" stroke="#fff" stroke-width="1.1"/></svg>
<div class="t" style="left:1774px;top:1053.65px;font-size:14px;color:#ffffff;font-weight:normal;">CAT</div>
<div class="t" style="left:1535px;width:600px;text-align:center;top:1045.00px;font-size:13px;color:#ffffff;font-weight:normal;">11:30</div>
<div class="t" style="left:1535px;width:600px;text-align:center;top:1062.00px;font-size:13px;color:#ffffff;font-weight:normal;">20/2/2024</div>
<svg class="a" style="left:1879px;top:1053px;" width="16" height="14" viewBox="0 0 16 14"><path d="M0 0 H16 V11 H10 L8 14 L6 11 H0Z" fill="#fff"/><path d="M3 3 H13 M3 5.5 H13 M3 8 H10" stroke="#161616" stroke-width="1"/></svg>
<div class="a" style="left:1913px;top:1040px;width:1px;height:40px;background:#5a5a5a;"></div>
</body></html>
